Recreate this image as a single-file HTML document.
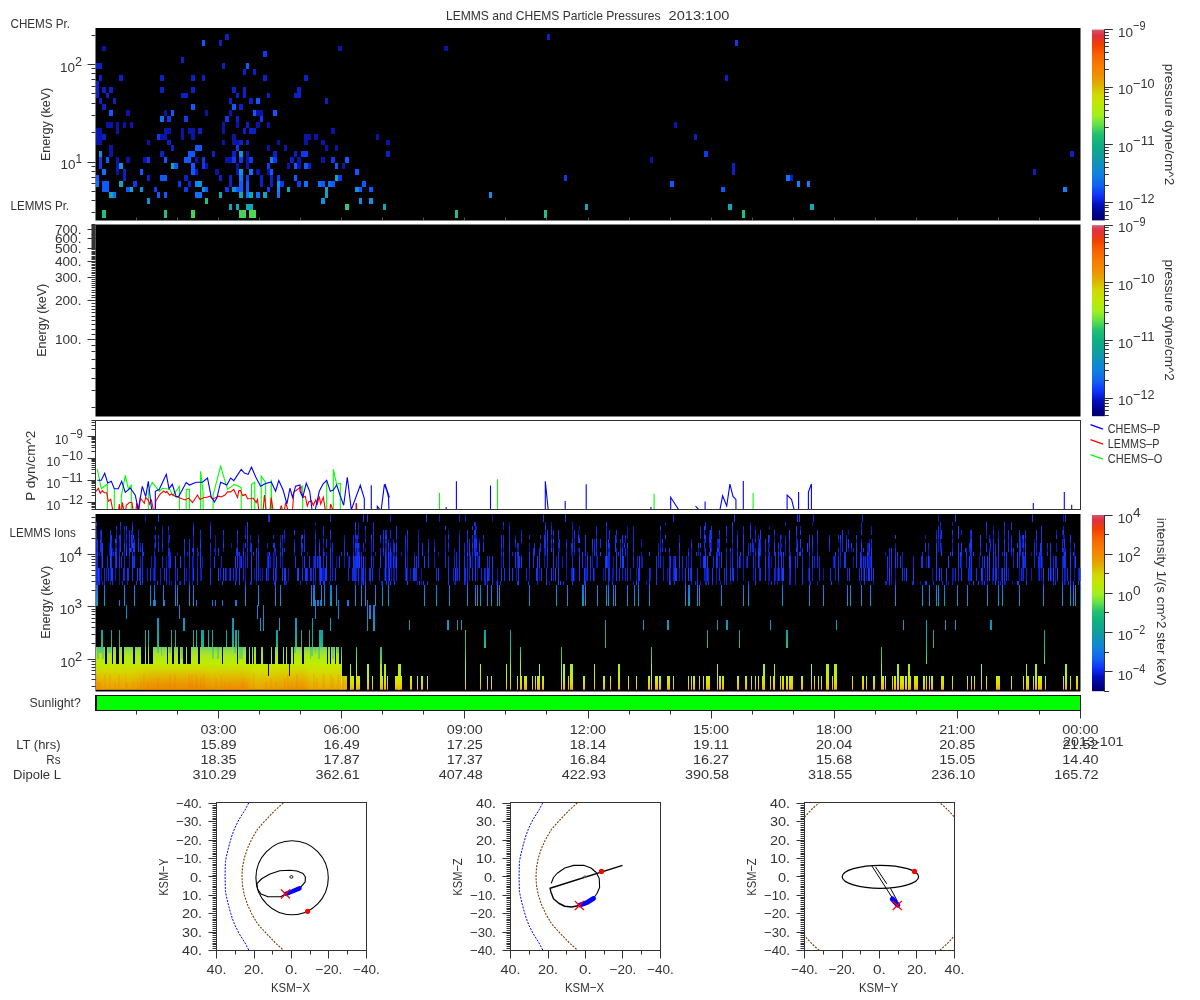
<!DOCTYPE html>
<html><head><meta charset="utf-8"><style>html,body{margin:0;padding:0;background:#fff;width:1200px;height:1000px;overflow:hidden}svg{display:block;will-change:transform}</style></head><body>
<svg width="1200" height="1000" viewBox="0 0 1200 1000" font-family="Liberation Sans, sans-serif">
<rect x="0.00" y="0.00" width="1200.00" height="1000.00" fill="#ffffff" />
<text x="446.00" y="19.50" font-size="13" text-anchor="start" textLength="214.6" lengthAdjust="spacingAndGlyphs" fill="#333" >LEMMS and CHEMS Particle Pressures</text>
<text x="668.60" y="19.50" font-size="13" text-anchor="start" textLength="60.8" lengthAdjust="spacingAndGlyphs" fill="#333" >2013:100</text>
<rect x="95.50" y="28.00" width="985.00" height="192.50" fill="#000" />
<g shape-rendering="crispEdges">
<rect x="225.47" y="33.87" width="3.42" height="5.87" fill="#0c20c8"/>
<rect x="201.52" y="39.74" width="3.42" height="5.87" fill="#1058ff"/>
<rect x="218.62" y="39.74" width="3.42" height="5.87" fill="#0c20c8"/>
<rect x="102.34" y="45.61" width="3.42" height="5.87" fill="#0a14a8"/>
<rect x="181.00" y="57.36" width="3.42" height="5.87" fill="#0c20c8"/>
<rect x="95.50" y="63.23" width="3.42" height="5.87" fill="#0c20c8"/>
<rect x="98.92" y="63.23" width="3.42" height="5.87" fill="#0c20c8"/>
<rect x="222.05" y="63.23" width="3.42" height="5.87" fill="#0c20c8"/>
<rect x="242.57" y="69.10" width="3.42" height="5.87" fill="#0c20c8"/>
<rect x="98.92" y="74.97" width="3.42" height="5.87" fill="#0c20c8"/>
<rect x="119.44" y="74.97" width="3.42" height="5.87" fill="#0c20c8"/>
<rect x="160.48" y="74.97" width="3.42" height="5.87" fill="#0c20c8"/>
<rect x="191.26" y="74.97" width="3.42" height="5.87" fill="#0c20c8"/>
<rect x="201.52" y="74.97" width="3.42" height="5.87" fill="#0c20c8"/>
<rect x="95.50" y="80.84" width="3.42" height="5.87" fill="#0c20c8"/>
<rect x="95.50" y="86.71" width="3.42" height="5.87" fill="#0c20c8"/>
<rect x="102.34" y="86.71" width="3.42" height="5.87" fill="#0c20c8"/>
<rect x="109.18" y="86.71" width="3.42" height="5.87" fill="#0c20c8"/>
<rect x="160.48" y="86.71" width="3.42" height="5.87" fill="#0c20c8"/>
<rect x="191.26" y="86.71" width="3.42" height="5.87" fill="#0c20c8"/>
<rect x="232.31" y="86.71" width="3.42" height="5.87" fill="#0c20c8"/>
<rect x="242.57" y="86.71" width="3.42" height="5.87" fill="#0c20c8"/>
<rect x="95.50" y="92.58" width="3.42" height="5.87" fill="#0c20c8"/>
<rect x="105.76" y="92.58" width="3.42" height="5.87" fill="#0c20c8"/>
<rect x="181.00" y="92.58" width="3.42" height="5.87" fill="#0c20c8"/>
<rect x="184.42" y="92.58" width="3.42" height="5.87" fill="#0c20c8"/>
<rect x="235.73" y="92.58" width="3.42" height="5.87" fill="#0c20c8"/>
<rect x="242.57" y="92.58" width="3.42" height="5.87" fill="#0c20c8"/>
<rect x="98.92" y="98.45" width="3.42" height="5.87" fill="#0c20c8"/>
<rect x="112.60" y="98.45" width="3.42" height="5.87" fill="#0c20c8"/>
<rect x="228.89" y="98.45" width="3.42" height="5.87" fill="#0c20c8"/>
<rect x="102.34" y="104.32" width="3.42" height="5.87" fill="#0c20c8"/>
<rect x="191.26" y="104.32" width="3.42" height="5.87" fill="#1058ff"/>
<rect x="232.31" y="104.32" width="3.42" height="5.87" fill="#1058ff"/>
<rect x="239.15" y="104.32" width="3.42" height="5.87" fill="#0c20c8"/>
<rect x="109.18" y="110.19" width="3.42" height="5.87" fill="#1058ff"/>
<rect x="126.28" y="110.19" width="3.42" height="5.87" fill="#0a14a8"/>
<rect x="163.90" y="110.19" width="3.42" height="5.87" fill="#0a14a8"/>
<rect x="170.74" y="110.19" width="3.42" height="5.87" fill="#1058ff"/>
<rect x="204.94" y="110.19" width="3.42" height="5.87" fill="#0a14a8"/>
<rect x="228.89" y="110.19" width="3.42" height="5.87" fill="#0a14a8"/>
<rect x="160.48" y="116.07" width="3.42" height="5.87" fill="#1070ff"/>
<rect x="167.32" y="116.07" width="3.42" height="5.87" fill="#1038f0"/>
<rect x="184.42" y="116.07" width="3.42" height="5.87" fill="#1038f0"/>
<rect x="225.47" y="116.07" width="3.42" height="5.87" fill="#1038f0"/>
<rect x="235.73" y="116.07" width="3.42" height="5.87" fill="#0c20c8"/>
<rect x="105.76" y="121.94" width="3.42" height="5.87" fill="#0a14a8"/>
<rect x="109.18" y="121.94" width="3.42" height="5.87" fill="#0a14a8"/>
<rect x="116.02" y="121.94" width="3.42" height="5.87" fill="#0a14a8"/>
<rect x="122.86" y="121.94" width="3.42" height="5.87" fill="#0a14a8"/>
<rect x="129.70" y="121.94" width="3.42" height="5.87" fill="#0a14a8"/>
<rect x="222.05" y="121.94" width="3.42" height="5.87" fill="#0a14a8"/>
<rect x="235.73" y="121.94" width="3.42" height="5.87" fill="#0a14a8"/>
<rect x="95.50" y="127.81" width="3.42" height="5.87" fill="#0a14a8"/>
<rect x="98.92" y="127.81" width="3.42" height="5.87" fill="#0a14a8"/>
<rect x="116.02" y="127.81" width="3.42" height="5.87" fill="#0a14a8"/>
<rect x="163.90" y="127.81" width="3.42" height="5.87" fill="#0a14a8"/>
<rect x="167.32" y="127.81" width="3.42" height="5.87" fill="#0a14a8"/>
<rect x="181.00" y="127.81" width="3.42" height="5.87" fill="#0a14a8"/>
<rect x="187.84" y="127.81" width="3.42" height="5.87" fill="#0a14a8"/>
<rect x="191.26" y="127.81" width="3.42" height="5.87" fill="#0a14a8"/>
<rect x="198.10" y="127.81" width="3.42" height="5.87" fill="#0c20c8"/>
<rect x="222.05" y="127.81" width="3.42" height="5.87" fill="#0a14a8"/>
<rect x="242.57" y="127.81" width="3.42" height="5.87" fill="#0c20c8"/>
<rect x="95.50" y="133.68" width="3.42" height="5.87" fill="#0a14a8"/>
<rect x="98.92" y="133.68" width="3.42" height="5.87" fill="#0a14a8"/>
<rect x="102.34" y="133.68" width="3.42" height="5.87" fill="#0c20c8"/>
<rect x="157.06" y="133.68" width="3.42" height="5.87" fill="#1038f0"/>
<rect x="160.48" y="133.68" width="3.42" height="5.87" fill="#0a14a8"/>
<rect x="163.90" y="133.68" width="3.42" height="5.87" fill="#0a14a8"/>
<rect x="181.00" y="133.68" width="3.42" height="5.87" fill="#0a14a8"/>
<rect x="191.26" y="133.68" width="3.42" height="5.87" fill="#0a14a8"/>
<rect x="232.31" y="133.68" width="3.42" height="5.87" fill="#0a14a8"/>
<rect x="95.50" y="139.55" width="3.42" height="5.87" fill="#0a14a8"/>
<rect x="98.92" y="139.55" width="3.42" height="5.87" fill="#0a14a8"/>
<rect x="146.80" y="139.55" width="3.42" height="5.87" fill="#0a14a8"/>
<rect x="167.32" y="139.55" width="3.42" height="5.87" fill="#0c20c8"/>
<rect x="222.05" y="139.55" width="3.42" height="5.87" fill="#0a14a8"/>
<rect x="232.31" y="139.55" width="3.42" height="5.87" fill="#0a14a8"/>
<rect x="235.73" y="139.55" width="3.42" height="5.87" fill="#0a14a8"/>
<rect x="239.15" y="139.55" width="3.42" height="5.87" fill="#0c20c8"/>
<rect x="109.18" y="145.42" width="3.42" height="5.87" fill="#0a14a8"/>
<rect x="170.74" y="145.42" width="3.42" height="5.87" fill="#0c20c8"/>
<rect x="194.68" y="145.42" width="3.42" height="5.87" fill="#1058ff"/>
<rect x="198.10" y="145.42" width="3.42" height="5.87" fill="#1058ff"/>
<rect x="235.73" y="145.42" width="3.42" height="5.87" fill="#1038f0"/>
<rect x="98.92" y="151.29" width="3.42" height="5.87" fill="#1090e0"/>
<rect x="109.18" y="151.29" width="3.42" height="5.87" fill="#0a14a8"/>
<rect x="160.48" y="151.29" width="3.42" height="5.87" fill="#0c20c8"/>
<rect x="187.84" y="151.29" width="3.42" height="5.87" fill="#1058ff"/>
<rect x="191.26" y="151.29" width="3.42" height="5.87" fill="#1058ff"/>
<rect x="211.78" y="151.29" width="3.42" height="5.87" fill="#0c20c8"/>
<rect x="232.31" y="151.29" width="3.42" height="5.87" fill="#0c20c8"/>
<rect x="239.15" y="151.29" width="3.42" height="5.87" fill="#1090e0"/>
<rect x="98.92" y="157.16" width="3.42" height="5.87" fill="#1038f0"/>
<rect x="105.76" y="157.16" width="3.42" height="5.87" fill="#1058ff"/>
<rect x="116.02" y="157.16" width="3.42" height="5.87" fill="#0a14a8"/>
<rect x="126.28" y="157.16" width="3.42" height="5.87" fill="#0a14a8"/>
<rect x="143.38" y="157.16" width="3.42" height="5.87" fill="#0a14a8"/>
<rect x="146.80" y="157.16" width="3.42" height="5.87" fill="#1038f0"/>
<rect x="163.90" y="157.16" width="3.42" height="5.87" fill="#1058ff"/>
<rect x="184.42" y="157.16" width="3.42" height="5.87" fill="#1058ff"/>
<rect x="187.84" y="157.16" width="3.42" height="5.87" fill="#1058ff"/>
<rect x="194.68" y="157.16" width="3.42" height="5.87" fill="#0a14a8"/>
<rect x="201.52" y="157.16" width="3.42" height="5.87" fill="#1038f0"/>
<rect x="225.47" y="157.16" width="3.42" height="5.87" fill="#0a14a8"/>
<rect x="228.89" y="157.16" width="3.42" height="5.87" fill="#0a14a8"/>
<rect x="232.31" y="157.16" width="3.42" height="5.87" fill="#1038f0"/>
<rect x="239.15" y="157.16" width="3.42" height="5.87" fill="#1038f0"/>
<rect x="98.92" y="163.03" width="3.42" height="5.87" fill="#1038f0"/>
<rect x="116.02" y="163.03" width="3.42" height="5.87" fill="#0a14a8"/>
<rect x="119.44" y="163.03" width="3.42" height="5.87" fill="#1090e0"/>
<rect x="170.74" y="163.03" width="3.42" height="5.87" fill="#10a8b8"/>
<rect x="174.16" y="163.03" width="3.42" height="5.87" fill="#1058ff"/>
<rect x="191.26" y="163.03" width="3.42" height="5.87" fill="#1058ff"/>
<rect x="201.52" y="163.03" width="3.42" height="5.87" fill="#1038f0"/>
<rect x="204.94" y="163.03" width="3.42" height="5.87" fill="#0a14a8"/>
<rect x="235.73" y="163.03" width="3.42" height="5.87" fill="#0a14a8"/>
<rect x="102.34" y="168.90" width="3.42" height="5.87" fill="#1070ff"/>
<rect x="116.02" y="168.90" width="3.42" height="5.87" fill="#0a14a8"/>
<rect x="122.86" y="168.90" width="3.42" height="5.87" fill="#0c20c8"/>
<rect x="139.96" y="168.90" width="3.42" height="5.87" fill="#1058ff"/>
<rect x="191.26" y="168.90" width="3.42" height="5.87" fill="#1058ff"/>
<rect x="194.68" y="168.90" width="3.42" height="5.87" fill="#0c20c8"/>
<rect x="215.20" y="168.90" width="3.42" height="5.87" fill="#0a14a8"/>
<rect x="235.73" y="168.90" width="3.42" height="5.87" fill="#0a14a8"/>
<rect x="239.15" y="168.90" width="3.42" height="5.87" fill="#1090e0"/>
<rect x="95.50" y="174.78" width="3.42" height="5.87" fill="#1058ff"/>
<rect x="122.86" y="174.78" width="3.42" height="5.87" fill="#0c20c8"/>
<rect x="146.80" y="174.78" width="3.42" height="5.87" fill="#0c20c8"/>
<rect x="160.48" y="174.78" width="3.42" height="5.87" fill="#1058ff"/>
<rect x="163.90" y="174.78" width="3.42" height="5.87" fill="#1058ff"/>
<rect x="184.42" y="174.78" width="3.42" height="5.87" fill="#0c20c8"/>
<rect x="218.62" y="174.78" width="3.42" height="5.87" fill="#0c20c8"/>
<rect x="228.89" y="174.78" width="3.42" height="5.87" fill="#0c20c8"/>
<rect x="239.15" y="174.78" width="3.42" height="5.87" fill="#1070ff"/>
<rect x="95.50" y="180.65" width="3.42" height="5.87" fill="#1070ff"/>
<rect x="102.34" y="180.65" width="3.42" height="5.87" fill="#1058ff"/>
<rect x="105.76" y="180.65" width="3.42" height="5.87" fill="#1058ff"/>
<rect x="119.44" y="180.65" width="3.42" height="5.87" fill="#10a8b8"/>
<rect x="133.12" y="180.65" width="3.42" height="5.87" fill="#1038f0"/>
<rect x="177.58" y="180.65" width="3.42" height="5.87" fill="#1038f0"/>
<rect x="187.84" y="180.65" width="3.42" height="5.87" fill="#0c20c8"/>
<rect x="194.68" y="180.65" width="3.42" height="5.87" fill="#1080ff"/>
<rect x="198.10" y="180.65" width="3.42" height="5.87" fill="#1090e0"/>
<rect x="228.89" y="180.65" width="3.42" height="5.87" fill="#0c20c8"/>
<rect x="239.15" y="180.65" width="3.42" height="5.87" fill="#1058ff"/>
<rect x="102.34" y="186.52" width="3.42" height="5.87" fill="#1058ff"/>
<rect x="105.76" y="186.52" width="3.42" height="5.87" fill="#1058ff"/>
<rect x="126.28" y="186.52" width="3.42" height="5.87" fill="#1058ff"/>
<rect x="129.70" y="186.52" width="3.42" height="5.87" fill="#10a8b8"/>
<rect x="139.96" y="186.52" width="3.42" height="5.87" fill="#1090e0"/>
<rect x="153.64" y="186.52" width="3.42" height="5.87" fill="#1038f0"/>
<rect x="184.42" y="186.52" width="3.42" height="5.87" fill="#1038f0"/>
<rect x="201.52" y="186.52" width="3.42" height="5.87" fill="#1090e0"/>
<rect x="204.94" y="186.52" width="3.42" height="5.87" fill="#1058ff"/>
<rect x="225.47" y="186.52" width="3.42" height="5.87" fill="#1038f0"/>
<rect x="232.31" y="186.52" width="3.42" height="5.87" fill="#1090e0"/>
<rect x="235.73" y="186.52" width="3.42" height="5.87" fill="#1058ff"/>
<rect x="239.15" y="186.52" width="3.42" height="5.87" fill="#1058ff"/>
<rect x="109.18" y="192.39" width="3.42" height="5.87" fill="#10a8b8"/>
<rect x="112.60" y="192.39" width="3.42" height="5.87" fill="#1070ff"/>
<rect x="157.06" y="192.39" width="3.42" height="5.87" fill="#1058ff"/>
<rect x="163.90" y="192.39" width="3.42" height="5.87" fill="#1058ff"/>
<rect x="194.68" y="192.39" width="3.42" height="5.87" fill="#1070ff"/>
<rect x="198.10" y="192.39" width="3.42" height="5.87" fill="#1070ff"/>
<rect x="218.62" y="192.39" width="3.42" height="5.87" fill="#10a8b8"/>
<rect x="239.15" y="192.39" width="3.42" height="5.87" fill="#10a8b8"/>
<rect x="146.80" y="198.26" width="3.42" height="5.87" fill="#1090e0"/>
<rect x="204.94" y="198.26" width="3.42" height="5.87" fill="#20c088"/>
<rect x="228.89" y="204.13" width="3.42" height="5.87" fill="#10a8b8"/>
<rect x="235.73" y="204.13" width="3.42" height="5.87" fill="#10a8b8"/>
<rect x="102.34" y="210.00" width="3.42" height="8.00" fill="#20c088"/>
<rect x="163.90" y="210.00" width="3.42" height="8.00" fill="#20c088"/>
<rect x="191.26" y="210.00" width="3.42" height="8.00" fill="#48d058"/>
<rect x="239.15" y="210.00" width="3.42" height="8.00" fill="#48d058"/>
<rect x="242.57" y="210.00" width="3.42" height="8.00" fill="#48d058"/>
<rect x="338.33" y="45.61" width="3.42" height="5.87" fill="#0a14a8"/>
<rect x="263.09" y="51.48" width="3.42" height="5.87" fill="#1038f0"/>
<rect x="245.99" y="63.23" width="3.42" height="5.87" fill="#1058ff"/>
<rect x="252.83" y="69.10" width="3.42" height="5.87" fill="#0c20c8"/>
<rect x="263.09" y="74.97" width="3.42" height="5.87" fill="#0c20c8"/>
<rect x="304.13" y="74.97" width="3.42" height="5.87" fill="#0c20c8"/>
<rect x="297.29" y="86.71" width="3.42" height="5.87" fill="#0c20c8"/>
<rect x="293.87" y="92.58" width="3.42" height="5.87" fill="#0c20c8"/>
<rect x="297.29" y="92.58" width="3.42" height="5.87" fill="#0c20c8"/>
<rect x="266.51" y="92.58" width="3.42" height="5.87" fill="#0c20c8"/>
<rect x="249.41" y="98.45" width="3.42" height="5.87" fill="#0c20c8"/>
<rect x="256.25" y="98.45" width="3.42" height="5.87" fill="#1058ff"/>
<rect x="324.65" y="98.45" width="3.42" height="5.87" fill="#0c20c8"/>
<rect x="252.83" y="110.19" width="3.42" height="5.87" fill="#1058ff"/>
<rect x="256.25" y="110.19" width="3.42" height="5.87" fill="#0a14a8"/>
<rect x="259.67" y="110.19" width="3.42" height="5.87" fill="#0a14a8"/>
<rect x="273.35" y="110.19" width="3.42" height="5.87" fill="#1058ff"/>
<rect x="259.67" y="116.07" width="3.42" height="5.87" fill="#1038f0"/>
<rect x="245.99" y="121.94" width="3.42" height="5.87" fill="#0c20c8"/>
<rect x="256.25" y="121.94" width="3.42" height="5.87" fill="#0a14a8"/>
<rect x="266.51" y="121.94" width="3.42" height="5.87" fill="#0a14a8"/>
<rect x="249.41" y="127.81" width="3.42" height="5.87" fill="#0c20c8"/>
<rect x="252.83" y="127.81" width="3.42" height="5.87" fill="#0c20c8"/>
<rect x="331.49" y="127.81" width="3.42" height="5.87" fill="#0a14a8"/>
<rect x="304.13" y="133.68" width="3.42" height="5.87" fill="#0a14a8"/>
<rect x="307.55" y="133.68" width="3.42" height="5.87" fill="#0a14a8"/>
<rect x="314.39" y="133.68" width="3.42" height="5.87" fill="#0a14a8"/>
<rect x="375.95" y="133.68" width="3.42" height="5.87" fill="#0a14a8"/>
<rect x="245.99" y="139.55" width="3.42" height="5.87" fill="#0c20c8"/>
<rect x="276.77" y="139.55" width="3.42" height="5.87" fill="#0a14a8"/>
<rect x="304.13" y="139.55" width="3.42" height="5.87" fill="#0a14a8"/>
<rect x="321.23" y="139.55" width="3.42" height="5.87" fill="#0a14a8"/>
<rect x="386.21" y="139.55" width="3.42" height="5.87" fill="#0a14a8"/>
<rect x="266.51" y="145.42" width="3.42" height="5.87" fill="#0a14a8"/>
<rect x="283.61" y="145.42" width="3.42" height="5.87" fill="#0a14a8"/>
<rect x="324.65" y="145.42" width="3.42" height="5.87" fill="#0a14a8"/>
<rect x="334.91" y="145.42" width="3.42" height="5.87" fill="#0a14a8"/>
<rect x="245.99" y="151.29" width="3.42" height="5.87" fill="#0a14a8"/>
<rect x="273.35" y="151.29" width="3.42" height="5.87" fill="#0c20c8"/>
<rect x="293.87" y="151.29" width="3.42" height="5.87" fill="#0c20c8"/>
<rect x="300.71" y="151.29" width="3.42" height="5.87" fill="#1038f0"/>
<rect x="304.13" y="151.29" width="3.42" height="5.87" fill="#1038f0"/>
<rect x="386.21" y="151.29" width="3.42" height="5.87" fill="#0c20c8"/>
<rect x="245.99" y="157.16" width="3.42" height="5.87" fill="#0a14a8"/>
<rect x="249.41" y="157.16" width="3.42" height="5.87" fill="#1038f0"/>
<rect x="269.93" y="157.16" width="3.42" height="5.87" fill="#1080f0"/>
<rect x="273.35" y="157.16" width="3.42" height="5.87" fill="#1038f0"/>
<rect x="290.45" y="157.16" width="3.42" height="5.87" fill="#0c20c8"/>
<rect x="297.29" y="157.16" width="3.42" height="5.87" fill="#0a14a8"/>
<rect x="321.23" y="157.16" width="3.42" height="5.87" fill="#0a14a8"/>
<rect x="331.49" y="157.16" width="3.42" height="5.87" fill="#1038f0"/>
<rect x="345.17" y="157.16" width="3.42" height="5.87" fill="#1058ff"/>
<rect x="245.99" y="163.03" width="3.42" height="5.87" fill="#0a14a8"/>
<rect x="266.51" y="163.03" width="3.42" height="5.87" fill="#1038f0"/>
<rect x="287.03" y="163.03" width="3.42" height="5.87" fill="#0a14a8"/>
<rect x="293.87" y="163.03" width="3.42" height="5.87" fill="#1058ff"/>
<rect x="297.29" y="163.03" width="3.42" height="5.87" fill="#0a14a8"/>
<rect x="304.13" y="163.03" width="3.42" height="5.87" fill="#1058ff"/>
<rect x="307.55" y="163.03" width="3.42" height="5.87" fill="#0c20c8"/>
<rect x="334.91" y="163.03" width="3.42" height="5.87" fill="#1058ff"/>
<rect x="341.75" y="163.03" width="3.42" height="5.87" fill="#0a14a8"/>
<rect x="249.41" y="168.90" width="3.42" height="5.87" fill="#1070ff"/>
<rect x="256.25" y="168.90" width="3.42" height="5.87" fill="#0a14a8"/>
<rect x="266.51" y="168.90" width="3.42" height="5.87" fill="#0a14a8"/>
<rect x="269.93" y="168.90" width="3.42" height="5.87" fill="#1058ff"/>
<rect x="355.43" y="168.90" width="3.42" height="5.87" fill="#1058ff"/>
<rect x="245.99" y="174.78" width="3.42" height="5.87" fill="#1038f0"/>
<rect x="259.67" y="174.78" width="3.42" height="5.87" fill="#0c20c8"/>
<rect x="269.93" y="174.78" width="3.42" height="5.87" fill="#0c20c8"/>
<rect x="276.77" y="174.78" width="3.42" height="5.87" fill="#1038f0"/>
<rect x="293.87" y="174.78" width="3.42" height="5.87" fill="#1058ff"/>
<rect x="334.91" y="174.78" width="3.42" height="5.87" fill="#10a8b8"/>
<rect x="338.33" y="174.78" width="3.42" height="5.87" fill="#1038f0"/>
<rect x="245.99" y="180.65" width="3.42" height="5.87" fill="#1058ff"/>
<rect x="259.67" y="180.65" width="3.42" height="5.87" fill="#0c20c8"/>
<rect x="269.93" y="180.65" width="3.42" height="5.87" fill="#0c20c8"/>
<rect x="276.77" y="180.65" width="3.42" height="5.87" fill="#1090e0"/>
<rect x="280.19" y="180.65" width="3.42" height="5.87" fill="#1038f0"/>
<rect x="297.29" y="180.65" width="3.42" height="5.87" fill="#1038f0"/>
<rect x="304.13" y="180.65" width="3.42" height="5.87" fill="#1070ff"/>
<rect x="317.81" y="180.65" width="3.42" height="5.87" fill="#1070ff"/>
<rect x="321.23" y="180.65" width="3.42" height="5.87" fill="#1058ff"/>
<rect x="328.07" y="180.65" width="3.42" height="5.87" fill="#1070ff"/>
<rect x="331.49" y="180.65" width="3.42" height="5.87" fill="#1058ff"/>
<rect x="362.27" y="180.65" width="3.42" height="5.87" fill="#1058ff"/>
<rect x="245.99" y="186.52" width="3.42" height="5.87" fill="#1058ff"/>
<rect x="266.51" y="186.52" width="3.42" height="5.87" fill="#1038f0"/>
<rect x="276.77" y="186.52" width="3.42" height="5.87" fill="#1080ff"/>
<rect x="287.03" y="186.52" width="3.42" height="5.87" fill="#10a8b8"/>
<rect x="324.65" y="186.52" width="3.42" height="5.87" fill="#10a8b8"/>
<rect x="355.43" y="186.52" width="3.42" height="5.87" fill="#1090e0"/>
<rect x="358.85" y="186.52" width="3.42" height="5.87" fill="#1058ff"/>
<rect x="369.11" y="186.52" width="3.42" height="5.87" fill="#1058ff"/>
<rect x="245.99" y="192.39" width="3.42" height="5.87" fill="#1070ff"/>
<rect x="249.41" y="192.39" width="3.42" height="5.87" fill="#10a8b8"/>
<rect x="256.25" y="192.39" width="3.42" height="5.87" fill="#1070ff"/>
<rect x="263.09" y="192.39" width="3.42" height="5.87" fill="#10a8b8"/>
<rect x="276.77" y="192.39" width="3.42" height="5.87" fill="#1070ff"/>
<rect x="324.65" y="192.39" width="3.42" height="5.87" fill="#10a8b8"/>
<rect x="321.23" y="198.26" width="3.42" height="5.87" fill="#1090e0"/>
<rect x="358.85" y="198.26" width="3.42" height="5.87" fill="#1090e0"/>
<rect x="369.11" y="198.26" width="3.42" height="5.87" fill="#1090e0"/>
<rect x="245.99" y="204.13" width="3.42" height="5.87" fill="#10a8b8"/>
<rect x="249.41" y="204.13" width="3.42" height="5.87" fill="#10a8b8"/>
<rect x="345.17" y="204.13" width="3.42" height="5.87" fill="#30c880"/>
<rect x="382.79" y="204.13" width="3.42" height="5.87" fill="#10a8b8"/>
<rect x="242.57" y="210.00" width="3.42" height="8.00" fill="#48d058"/>
<rect x="249.41" y="210.00" width="3.42" height="8.00" fill="#50d850"/>
<rect x="252.83" y="210.00" width="3.42" height="8.00" fill="#50d850"/>
<rect x="444.35" y="45.61" width="3.42" height="5.87" fill="#0a14a8"/>
<rect x="546.96" y="33.87" width="3.42" height="5.87" fill="#0c20c8"/>
<rect x="564.06" y="174.78" width="3.42" height="5.87" fill="#1038f0"/>
<rect x="488.82" y="192.39" width="3.42" height="5.87" fill="#1090e0"/>
<rect x="454.61" y="210.00" width="3.42" height="8.00" fill="#20c088"/>
<rect x="543.54" y="210.00" width="3.42" height="8.00" fill="#20c088"/>
<rect x="584.58" y="204.13" width="3.42" height="5.87" fill="#10a8b8"/>
<rect x="735.07" y="39.74" width="3.42" height="5.87" fill="#1038f0"/>
<rect x="724.81" y="74.97" width="3.42" height="5.87" fill="#0c20c8"/>
<rect x="673.50" y="121.94" width="3.42" height="5.87" fill="#0a14a8"/>
<rect x="694.02" y="133.68" width="3.42" height="5.87" fill="#0c20c8"/>
<rect x="704.28" y="151.29" width="3.42" height="5.87" fill="#1038f0"/>
<rect x="649.56" y="157.16" width="3.42" height="5.87" fill="#0a14a8"/>
<rect x="731.65" y="163.03" width="3.42" height="5.87" fill="#0c20c8"/>
<rect x="731.65" y="168.90" width="3.42" height="5.87" fill="#0c20c8"/>
<rect x="670.08" y="180.65" width="3.42" height="5.87" fill="#1058ff"/>
<rect x="796.63" y="180.65" width="3.42" height="5.87" fill="#1080ff"/>
<rect x="806.89" y="180.65" width="3.42" height="5.87" fill="#1080ff"/>
<rect x="721.39" y="186.52" width="3.42" height="5.87" fill="#1058ff"/>
<rect x="786.37" y="174.78" width="3.42" height="5.87" fill="#1070ff"/>
<rect x="789.79" y="174.78" width="3.42" height="5.87" fill="#0c20c8"/>
<rect x="728.23" y="204.13" width="3.42" height="5.87" fill="#10a8b8"/>
<rect x="810.31" y="204.13" width="3.42" height="5.87" fill="#10a8b8"/>
<rect x="741.91" y="210.00" width="3.42" height="8.00" fill="#20c088"/>
<rect x="1070.24" y="151.29" width="3.42" height="5.87" fill="#0c20c8"/>
<rect x="1032.62" y="168.90" width="3.42" height="5.87" fill="#0c20c8"/>
<rect x="1063.40" y="186.52" width="3.42" height="5.87" fill="#1080ff"/>
</g>
<line x1="136.50" y1="217.50" x2="136.50" y2="220.00" stroke="#555" stroke-width="1" />
<line x1="136.50" y1="413.50" x2="136.50" y2="416.00" stroke="#555" stroke-width="1" />
<line x1="136.50" y1="687.50" x2="136.50" y2="690.00" stroke="#555" stroke-width="1" />
<line x1="136.50" y1="509.00" x2="136.50" y2="506.00" stroke="#333" stroke-width="1" />
<line x1="177.50" y1="217.50" x2="177.50" y2="220.00" stroke="#555" stroke-width="1" />
<line x1="177.50" y1="413.50" x2="177.50" y2="416.00" stroke="#555" stroke-width="1" />
<line x1="177.50" y1="687.50" x2="177.50" y2="690.00" stroke="#555" stroke-width="1" />
<line x1="177.50" y1="509.00" x2="177.50" y2="506.00" stroke="#333" stroke-width="1" />
<line x1="218.50" y1="217.50" x2="218.50" y2="220.00" stroke="#555" stroke-width="1" />
<line x1="218.50" y1="413.50" x2="218.50" y2="416.00" stroke="#555" stroke-width="1" />
<line x1="218.50" y1="687.50" x2="218.50" y2="690.00" stroke="#555" stroke-width="1" />
<line x1="218.50" y1="509.00" x2="218.50" y2="506.00" stroke="#333" stroke-width="1" />
<line x1="259.50" y1="217.50" x2="259.50" y2="220.00" stroke="#555" stroke-width="1" />
<line x1="259.50" y1="413.50" x2="259.50" y2="416.00" stroke="#555" stroke-width="1" />
<line x1="259.50" y1="687.50" x2="259.50" y2="690.00" stroke="#555" stroke-width="1" />
<line x1="259.50" y1="509.00" x2="259.50" y2="506.00" stroke="#333" stroke-width="1" />
<line x1="300.50" y1="217.50" x2="300.50" y2="220.00" stroke="#555" stroke-width="1" />
<line x1="300.50" y1="413.50" x2="300.50" y2="416.00" stroke="#555" stroke-width="1" />
<line x1="300.50" y1="687.50" x2="300.50" y2="690.00" stroke="#555" stroke-width="1" />
<line x1="300.50" y1="509.00" x2="300.50" y2="506.00" stroke="#333" stroke-width="1" />
<line x1="341.50" y1="217.50" x2="341.50" y2="220.00" stroke="#555" stroke-width="1" />
<line x1="341.50" y1="413.50" x2="341.50" y2="416.00" stroke="#555" stroke-width="1" />
<line x1="341.50" y1="687.50" x2="341.50" y2="690.00" stroke="#555" stroke-width="1" />
<line x1="341.50" y1="509.00" x2="341.50" y2="506.00" stroke="#333" stroke-width="1" />
<line x1="382.50" y1="217.50" x2="382.50" y2="220.00" stroke="#555" stroke-width="1" />
<line x1="382.50" y1="413.50" x2="382.50" y2="416.00" stroke="#555" stroke-width="1" />
<line x1="382.50" y1="687.50" x2="382.50" y2="690.00" stroke="#555" stroke-width="1" />
<line x1="382.50" y1="509.00" x2="382.50" y2="506.00" stroke="#333" stroke-width="1" />
<line x1="423.50" y1="217.50" x2="423.50" y2="220.00" stroke="#555" stroke-width="1" />
<line x1="423.50" y1="413.50" x2="423.50" y2="416.00" stroke="#555" stroke-width="1" />
<line x1="423.50" y1="687.50" x2="423.50" y2="690.00" stroke="#555" stroke-width="1" />
<line x1="423.50" y1="509.00" x2="423.50" y2="506.00" stroke="#333" stroke-width="1" />
<line x1="464.50" y1="217.50" x2="464.50" y2="220.00" stroke="#555" stroke-width="1" />
<line x1="464.50" y1="413.50" x2="464.50" y2="416.00" stroke="#555" stroke-width="1" />
<line x1="464.50" y1="687.50" x2="464.50" y2="690.00" stroke="#555" stroke-width="1" />
<line x1="464.50" y1="509.00" x2="464.50" y2="506.00" stroke="#333" stroke-width="1" />
<line x1="505.50" y1="217.50" x2="505.50" y2="220.00" stroke="#555" stroke-width="1" />
<line x1="505.50" y1="413.50" x2="505.50" y2="416.00" stroke="#555" stroke-width="1" />
<line x1="505.50" y1="687.50" x2="505.50" y2="690.00" stroke="#555" stroke-width="1" />
<line x1="505.50" y1="509.00" x2="505.50" y2="506.00" stroke="#333" stroke-width="1" />
<line x1="546.50" y1="217.50" x2="546.50" y2="220.00" stroke="#555" stroke-width="1" />
<line x1="546.50" y1="413.50" x2="546.50" y2="416.00" stroke="#555" stroke-width="1" />
<line x1="546.50" y1="687.50" x2="546.50" y2="690.00" stroke="#555" stroke-width="1" />
<line x1="546.50" y1="509.00" x2="546.50" y2="506.00" stroke="#333" stroke-width="1" />
<line x1="588.50" y1="217.50" x2="588.50" y2="220.00" stroke="#555" stroke-width="1" />
<line x1="588.50" y1="413.50" x2="588.50" y2="416.00" stroke="#555" stroke-width="1" />
<line x1="588.50" y1="687.50" x2="588.50" y2="690.00" stroke="#555" stroke-width="1" />
<line x1="588.50" y1="509.00" x2="588.50" y2="506.00" stroke="#333" stroke-width="1" />
<line x1="629.50" y1="217.50" x2="629.50" y2="220.00" stroke="#555" stroke-width="1" />
<line x1="629.50" y1="413.50" x2="629.50" y2="416.00" stroke="#555" stroke-width="1" />
<line x1="629.50" y1="687.50" x2="629.50" y2="690.00" stroke="#555" stroke-width="1" />
<line x1="629.50" y1="509.00" x2="629.50" y2="506.00" stroke="#333" stroke-width="1" />
<line x1="670.50" y1="217.50" x2="670.50" y2="220.00" stroke="#555" stroke-width="1" />
<line x1="670.50" y1="413.50" x2="670.50" y2="416.00" stroke="#555" stroke-width="1" />
<line x1="670.50" y1="687.50" x2="670.50" y2="690.00" stroke="#555" stroke-width="1" />
<line x1="670.50" y1="509.00" x2="670.50" y2="506.00" stroke="#333" stroke-width="1" />
<line x1="711.50" y1="217.50" x2="711.50" y2="220.00" stroke="#555" stroke-width="1" />
<line x1="711.50" y1="413.50" x2="711.50" y2="416.00" stroke="#555" stroke-width="1" />
<line x1="711.50" y1="687.50" x2="711.50" y2="690.00" stroke="#555" stroke-width="1" />
<line x1="711.50" y1="509.00" x2="711.50" y2="506.00" stroke="#333" stroke-width="1" />
<line x1="752.50" y1="217.50" x2="752.50" y2="220.00" stroke="#555" stroke-width="1" />
<line x1="752.50" y1="413.50" x2="752.50" y2="416.00" stroke="#555" stroke-width="1" />
<line x1="752.50" y1="687.50" x2="752.50" y2="690.00" stroke="#555" stroke-width="1" />
<line x1="752.50" y1="509.00" x2="752.50" y2="506.00" stroke="#333" stroke-width="1" />
<line x1="793.50" y1="217.50" x2="793.50" y2="220.00" stroke="#555" stroke-width="1" />
<line x1="793.50" y1="413.50" x2="793.50" y2="416.00" stroke="#555" stroke-width="1" />
<line x1="793.50" y1="687.50" x2="793.50" y2="690.00" stroke="#555" stroke-width="1" />
<line x1="793.50" y1="509.00" x2="793.50" y2="506.00" stroke="#333" stroke-width="1" />
<line x1="834.50" y1="217.50" x2="834.50" y2="220.00" stroke="#555" stroke-width="1" />
<line x1="834.50" y1="413.50" x2="834.50" y2="416.00" stroke="#555" stroke-width="1" />
<line x1="834.50" y1="687.50" x2="834.50" y2="690.00" stroke="#555" stroke-width="1" />
<line x1="834.50" y1="509.00" x2="834.50" y2="506.00" stroke="#333" stroke-width="1" />
<line x1="875.50" y1="217.50" x2="875.50" y2="220.00" stroke="#555" stroke-width="1" />
<line x1="875.50" y1="413.50" x2="875.50" y2="416.00" stroke="#555" stroke-width="1" />
<line x1="875.50" y1="687.50" x2="875.50" y2="690.00" stroke="#555" stroke-width="1" />
<line x1="875.50" y1="509.00" x2="875.50" y2="506.00" stroke="#333" stroke-width="1" />
<line x1="916.50" y1="217.50" x2="916.50" y2="220.00" stroke="#555" stroke-width="1" />
<line x1="916.50" y1="413.50" x2="916.50" y2="416.00" stroke="#555" stroke-width="1" />
<line x1="916.50" y1="687.50" x2="916.50" y2="690.00" stroke="#555" stroke-width="1" />
<line x1="916.50" y1="509.00" x2="916.50" y2="506.00" stroke="#333" stroke-width="1" />
<line x1="957.50" y1="217.50" x2="957.50" y2="220.00" stroke="#555" stroke-width="1" />
<line x1="957.50" y1="413.50" x2="957.50" y2="416.00" stroke="#555" stroke-width="1" />
<line x1="957.50" y1="687.50" x2="957.50" y2="690.00" stroke="#555" stroke-width="1" />
<line x1="957.50" y1="509.00" x2="957.50" y2="506.00" stroke="#333" stroke-width="1" />
<line x1="998.50" y1="217.50" x2="998.50" y2="220.00" stroke="#555" stroke-width="1" />
<line x1="998.50" y1="413.50" x2="998.50" y2="416.00" stroke="#555" stroke-width="1" />
<line x1="998.50" y1="687.50" x2="998.50" y2="690.00" stroke="#555" stroke-width="1" />
<line x1="998.50" y1="509.00" x2="998.50" y2="506.00" stroke="#333" stroke-width="1" />
<line x1="1039.50" y1="217.50" x2="1039.50" y2="220.00" stroke="#555" stroke-width="1" />
<line x1="1039.50" y1="413.50" x2="1039.50" y2="416.00" stroke="#555" stroke-width="1" />
<line x1="1039.50" y1="687.50" x2="1039.50" y2="690.00" stroke="#555" stroke-width="1" />
<line x1="1039.50" y1="509.00" x2="1039.50" y2="506.00" stroke="#333" stroke-width="1" />
<rect x="234.00" y="386.00" width="1.00" height="4.00" fill="#0a10a0" />
<rect x="298.00" y="379.50" width="1.00" height="2.00" fill="#0a10a0" />
<line x1="91.50" y1="212.50" x2="95.50" y2="212.50" stroke="#333" stroke-width="1" />
<line x1="91.50" y1="200.50" x2="95.50" y2="200.50" stroke="#333" stroke-width="1" />
<line x1="91.50" y1="191.50" x2="95.50" y2="191.50" stroke="#333" stroke-width="1" />
<line x1="91.50" y1="183.50" x2="95.50" y2="183.50" stroke="#333" stroke-width="1" />
<line x1="91.50" y1="177.50" x2="95.50" y2="177.50" stroke="#333" stroke-width="1" />
<line x1="91.50" y1="171.50" x2="95.50" y2="171.50" stroke="#333" stroke-width="1" />
<line x1="91.50" y1="166.50" x2="95.50" y2="166.50" stroke="#333" stroke-width="1" />
<line x1="91.50" y1="132.50" x2="95.50" y2="132.50" stroke="#333" stroke-width="1" />
<line x1="91.50" y1="115.50" x2="95.50" y2="115.50" stroke="#333" stroke-width="1" />
<line x1="91.50" y1="103.50" x2="95.50" y2="103.50" stroke="#333" stroke-width="1" />
<line x1="91.50" y1="93.50" x2="95.50" y2="93.50" stroke="#333" stroke-width="1" />
<line x1="91.50" y1="86.50" x2="95.50" y2="86.50" stroke="#333" stroke-width="1" />
<line x1="91.50" y1="79.50" x2="95.50" y2="79.50" stroke="#333" stroke-width="1" />
<line x1="91.50" y1="73.50" x2="95.50" y2="73.50" stroke="#333" stroke-width="1" />
<line x1="91.50" y1="68.50" x2="95.50" y2="68.50" stroke="#333" stroke-width="1" />
<line x1="91.50" y1="35.50" x2="95.50" y2="35.50" stroke="#333" stroke-width="1" />
<line x1="87.50" y1="162.50" x2="95.50" y2="162.50" stroke="#333" stroke-width="1" />
<line x1="87.50" y1="64.50" x2="95.50" y2="64.50" stroke="#333" stroke-width="1" />
<text x="82.00" y="66.00" font-size="13" text-anchor="end" textLength="7.0" lengthAdjust="spacingAndGlyphs" fill="#333" >2</text>
<text x="75.10" y="72.00" font-size="13" text-anchor="end" textLength="15.0" lengthAdjust="spacingAndGlyphs" fill="#333" >10</text>
<text x="82.00" y="162.50" font-size="13" text-anchor="end" textLength="6.6" lengthAdjust="spacingAndGlyphs" fill="#333" >1</text>
<text x="75.50" y="168.50" font-size="13" text-anchor="end" textLength="15.0" lengthAdjust="spacingAndGlyphs" fill="#333" >10</text>
<text x="10.50" y="28.00" font-size="13" text-anchor="start" textLength="59.6" lengthAdjust="spacingAndGlyphs" fill="#333" >CHEMS Pr.</text>
<text x="10.50" y="210.00" font-size="13" text-anchor="start" textLength="58.6" lengthAdjust="spacingAndGlyphs" fill="#333" >LEMMS Pr.</text>
<text x="49.80" y="124.40" font-size="13" text-anchor="middle" textLength="73.2" lengthAdjust="spacingAndGlyphs" fill="#333" transform="rotate(-90 49.8 124.4)">Energy (keV)</text>
<rect x="95.50" y="224.50" width="985.00" height="192.00" fill="#000" />
<line x1="91.50" y1="407.50" x2="95.50" y2="407.50" stroke="#333" stroke-width="1" />
<line x1="91.50" y1="390.50" x2="95.50" y2="390.50" stroke="#333" stroke-width="1" />
<line x1="91.50" y1="378.50" x2="95.50" y2="378.50" stroke="#333" stroke-width="1" />
<line x1="91.50" y1="368.50" x2="95.50" y2="368.50" stroke="#333" stroke-width="1" />
<line x1="91.50" y1="359.50" x2="95.50" y2="359.50" stroke="#333" stroke-width="1" />
<line x1="91.50" y1="351.50" x2="95.50" y2="351.50" stroke="#333" stroke-width="1" />
<line x1="91.50" y1="345.50" x2="95.50" y2="345.50" stroke="#333" stroke-width="1" />
<line x1="91.50" y1="339.50" x2="95.50" y2="339.50" stroke="#333" stroke-width="1" />
<line x1="91.50" y1="334.50" x2="95.50" y2="334.50" stroke="#333" stroke-width="1" />
<line x1="91.50" y1="329.50" x2="95.50" y2="329.50" stroke="#333" stroke-width="1" />
<line x1="91.50" y1="324.50" x2="95.50" y2="324.50" stroke="#333" stroke-width="1" />
<line x1="91.50" y1="320.50" x2="95.50" y2="320.50" stroke="#333" stroke-width="1" />
<line x1="91.50" y1="316.50" x2="95.50" y2="316.50" stroke="#333" stroke-width="1" />
<line x1="91.50" y1="312.50" x2="95.50" y2="312.50" stroke="#333" stroke-width="1" />
<line x1="91.50" y1="309.50" x2="95.50" y2="309.50" stroke="#333" stroke-width="1" />
<line x1="91.50" y1="306.50" x2="95.50" y2="306.50" stroke="#333" stroke-width="1" />
<line x1="91.50" y1="303.50" x2="95.50" y2="303.50" stroke="#333" stroke-width="1" />
<line x1="91.50" y1="300.50" x2="95.50" y2="300.50" stroke="#333" stroke-width="1" />
<line x1="91.50" y1="297.50" x2="95.50" y2="297.50" stroke="#333" stroke-width="1" />
<line x1="91.50" y1="295.50" x2="95.50" y2="295.50" stroke="#333" stroke-width="1" />
<line x1="91.50" y1="292.50" x2="95.50" y2="292.50" stroke="#333" stroke-width="1" />
<line x1="91.50" y1="290.50" x2="95.50" y2="290.50" stroke="#333" stroke-width="1" />
<line x1="91.50" y1="287.50" x2="95.50" y2="287.50" stroke="#333" stroke-width="1" />
<line x1="91.50" y1="285.50" x2="95.50" y2="285.50" stroke="#333" stroke-width="1" />
<line x1="91.50" y1="283.50" x2="95.50" y2="283.50" stroke="#333" stroke-width="1" />
<line x1="91.50" y1="281.50" x2="95.50" y2="281.50" stroke="#333" stroke-width="1" />
<line x1="91.50" y1="279.50" x2="95.50" y2="279.50" stroke="#333" stroke-width="1" />
<line x1="91.50" y1="277.50" x2="95.50" y2="277.50" stroke="#333" stroke-width="1" />
<line x1="91.50" y1="275.50" x2="95.50" y2="275.50" stroke="#333" stroke-width="1" />
<line x1="91.50" y1="273.50" x2="95.50" y2="273.50" stroke="#333" stroke-width="1" />
<line x1="91.50" y1="272.50" x2="95.50" y2="272.50" stroke="#333" stroke-width="1" />
<line x1="91.50" y1="270.50" x2="95.50" y2="270.50" stroke="#333" stroke-width="1" />
<line x1="91.50" y1="268.50" x2="95.50" y2="268.50" stroke="#333" stroke-width="1" />
<line x1="91.50" y1="267.50" x2="95.50" y2="267.50" stroke="#333" stroke-width="1" />
<line x1="91.50" y1="265.50" x2="95.50" y2="265.50" stroke="#333" stroke-width="1" />
<line x1="91.50" y1="264.50" x2="95.50" y2="264.50" stroke="#333" stroke-width="1" />
<line x1="91.50" y1="262.50" x2="95.50" y2="262.50" stroke="#333" stroke-width="1" />
<line x1="91.50" y1="261.50" x2="95.50" y2="261.50" stroke="#333" stroke-width="1" />
<line x1="91.50" y1="259.50" x2="95.50" y2="259.50" stroke="#333" stroke-width="1" />
<line x1="91.50" y1="258.50" x2="95.50" y2="258.50" stroke="#333" stroke-width="1" />
<line x1="91.50" y1="257.50" x2="95.50" y2="257.50" stroke="#333" stroke-width="1" />
<line x1="91.50" y1="256.50" x2="95.50" y2="256.50" stroke="#333" stroke-width="1" />
<line x1="91.50" y1="254.50" x2="95.50" y2="254.50" stroke="#333" stroke-width="1" />
<line x1="91.50" y1="253.50" x2="95.50" y2="253.50" stroke="#333" stroke-width="1" />
<line x1="91.50" y1="252.50" x2="95.50" y2="252.50" stroke="#333" stroke-width="1" />
<line x1="91.50" y1="251.50" x2="95.50" y2="251.50" stroke="#333" stroke-width="1" />
<line x1="91.50" y1="249.50" x2="95.50" y2="249.50" stroke="#333" stroke-width="1" />
<line x1="91.50" y1="248.50" x2="95.50" y2="248.50" stroke="#333" stroke-width="1" />
<line x1="91.50" y1="247.50" x2="95.50" y2="247.50" stroke="#333" stroke-width="1" />
<line x1="91.50" y1="246.50" x2="95.50" y2="246.50" stroke="#333" stroke-width="1" />
<line x1="91.50" y1="245.50" x2="95.50" y2="245.50" stroke="#333" stroke-width="1" />
<line x1="91.50" y1="244.50" x2="95.50" y2="244.50" stroke="#333" stroke-width="1" />
<line x1="91.50" y1="243.50" x2="95.50" y2="243.50" stroke="#333" stroke-width="1" />
<line x1="91.50" y1="242.50" x2="95.50" y2="242.50" stroke="#333" stroke-width="1" />
<line x1="91.50" y1="241.50" x2="95.50" y2="241.50" stroke="#333" stroke-width="1" />
<line x1="91.50" y1="240.50" x2="95.50" y2="240.50" stroke="#333" stroke-width="1" />
<line x1="91.50" y1="239.50" x2="95.50" y2="239.50" stroke="#333" stroke-width="1" />
<line x1="91.50" y1="238.50" x2="95.50" y2="238.50" stroke="#333" stroke-width="1" />
<line x1="91.50" y1="237.50" x2="95.50" y2="237.50" stroke="#333" stroke-width="1" />
<line x1="91.50" y1="236.50" x2="95.50" y2="236.50" stroke="#333" stroke-width="1" />
<line x1="91.50" y1="235.50" x2="95.50" y2="235.50" stroke="#333" stroke-width="1" />
<line x1="91.50" y1="234.50" x2="95.50" y2="234.50" stroke="#333" stroke-width="1" />
<line x1="91.50" y1="234.50" x2="95.50" y2="234.50" stroke="#333" stroke-width="1" />
<line x1="91.50" y1="233.50" x2="95.50" y2="233.50" stroke="#333" stroke-width="1" />
<line x1="91.50" y1="232.50" x2="95.50" y2="232.50" stroke="#333" stroke-width="1" />
<line x1="91.50" y1="231.50" x2="95.50" y2="231.50" stroke="#333" stroke-width="1" />
<line x1="91.50" y1="230.50" x2="95.50" y2="230.50" stroke="#333" stroke-width="1" />
<line x1="91.50" y1="229.50" x2="95.50" y2="229.50" stroke="#333" stroke-width="1" />
<line x1="91.50" y1="229.50" x2="95.50" y2="229.50" stroke="#333" stroke-width="1" />
<line x1="91.50" y1="228.50" x2="95.50" y2="228.50" stroke="#333" stroke-width="1" />
<line x1="91.50" y1="227.50" x2="95.50" y2="227.50" stroke="#333" stroke-width="1" />
<line x1="91.50" y1="226.50" x2="95.50" y2="226.50" stroke="#333" stroke-width="1" />
<line x1="91.50" y1="225.50" x2="95.50" y2="225.50" stroke="#333" stroke-width="1" />
<line x1="91.50" y1="225.50" x2="95.50" y2="225.50" stroke="#333" stroke-width="1" />
<line x1="91.50" y1="224.50" x2="95.50" y2="224.50" stroke="#333" stroke-width="1" />
<line x1="87.50" y1="339.50" x2="95.50" y2="339.50" stroke="#333" stroke-width="1" />
<text x="81.50" y="343.70" font-size="13" text-anchor="end" textLength="26.6" lengthAdjust="spacingAndGlyphs" fill="#333" >100.</text>
<line x1="87.50" y1="300.50" x2="95.50" y2="300.50" stroke="#333" stroke-width="1" />
<text x="81.50" y="304.69" font-size="13" text-anchor="end" textLength="26.6" lengthAdjust="spacingAndGlyphs" fill="#333" >200.</text>
<line x1="87.50" y1="277.50" x2="95.50" y2="277.50" stroke="#333" stroke-width="1" />
<text x="81.50" y="281.87" font-size="13" text-anchor="end" textLength="26.6" lengthAdjust="spacingAndGlyphs" fill="#333" >300.</text>
<line x1="87.50" y1="261.50" x2="95.50" y2="261.50" stroke="#333" stroke-width="1" />
<text x="81.50" y="265.67" font-size="13" text-anchor="end" textLength="26.6" lengthAdjust="spacingAndGlyphs" fill="#333" >400.</text>
<line x1="87.50" y1="248.50" x2="95.50" y2="248.50" stroke="#333" stroke-width="1" />
<text x="81.50" y="253.11" font-size="13" text-anchor="end" textLength="26.6" lengthAdjust="spacingAndGlyphs" fill="#333" >500.</text>
<line x1="87.50" y1="238.50" x2="95.50" y2="238.50" stroke="#333" stroke-width="1" />
<text x="81.50" y="242.85" font-size="13" text-anchor="end" textLength="26.6" lengthAdjust="spacingAndGlyphs" fill="#333" >600.</text>
<line x1="87.50" y1="229.50" x2="95.50" y2="229.50" stroke="#333" stroke-width="1" />
<text x="81.50" y="234.18" font-size="13" text-anchor="end" textLength="26.6" lengthAdjust="spacingAndGlyphs" fill="#333" >700.</text>
<text x="46.00" y="320.25" font-size="13" text-anchor="middle" textLength="73.1" lengthAdjust="spacingAndGlyphs" fill="#333" transform="rotate(-90 46 320.25)">Energy (keV)</text>
<rect x="95.50" y="420.50" width="985.00" height="89.00" fill="#fff" stroke="#333" stroke-width="1"/>
<line x1="91.50" y1="509.50" x2="95.50" y2="509.50" stroke="#333" stroke-width="1" />
<line x1="91.50" y1="507.50" x2="95.50" y2="507.50" stroke="#333" stroke-width="1" />
<line x1="91.50" y1="506.50" x2="95.50" y2="506.50" stroke="#333" stroke-width="1" />
<line x1="91.50" y1="504.50" x2="95.50" y2="504.50" stroke="#333" stroke-width="1" />
<line x1="91.50" y1="503.50" x2="95.50" y2="503.50" stroke="#333" stroke-width="1" />
<line x1="91.50" y1="495.50" x2="95.50" y2="495.50" stroke="#333" stroke-width="1" />
<line x1="91.50" y1="492.50" x2="95.50" y2="492.50" stroke="#333" stroke-width="1" />
<line x1="91.50" y1="489.50" x2="95.50" y2="489.50" stroke="#333" stroke-width="1" />
<line x1="91.50" y1="487.50" x2="95.50" y2="487.50" stroke="#333" stroke-width="1" />
<line x1="91.50" y1="485.50" x2="95.50" y2="485.50" stroke="#333" stroke-width="1" />
<line x1="91.50" y1="483.50" x2="95.50" y2="483.50" stroke="#333" stroke-width="1" />
<line x1="91.50" y1="482.50" x2="95.50" y2="482.50" stroke="#333" stroke-width="1" />
<line x1="91.50" y1="481.50" x2="95.50" y2="481.50" stroke="#333" stroke-width="1" />
<line x1="91.50" y1="473.50" x2="95.50" y2="473.50" stroke="#333" stroke-width="1" />
<line x1="91.50" y1="469.50" x2="95.50" y2="469.50" stroke="#333" stroke-width="1" />
<line x1="91.50" y1="467.50" x2="95.50" y2="467.50" stroke="#333" stroke-width="1" />
<line x1="91.50" y1="465.50" x2="95.50" y2="465.50" stroke="#333" stroke-width="1" />
<line x1="91.50" y1="463.50" x2="95.50" y2="463.50" stroke="#333" stroke-width="1" />
<line x1="91.50" y1="461.50" x2="95.50" y2="461.50" stroke="#333" stroke-width="1" />
<line x1="91.50" y1="460.50" x2="95.50" y2="460.50" stroke="#333" stroke-width="1" />
<line x1="91.50" y1="459.50" x2="95.50" y2="459.50" stroke="#333" stroke-width="1" />
<line x1="91.50" y1="451.50" x2="95.50" y2="451.50" stroke="#333" stroke-width="1" />
<line x1="91.50" y1="447.50" x2="95.50" y2="447.50" stroke="#333" stroke-width="1" />
<line x1="91.50" y1="445.50" x2="95.50" y2="445.50" stroke="#333" stroke-width="1" />
<line x1="91.50" y1="442.50" x2="95.50" y2="442.50" stroke="#333" stroke-width="1" />
<line x1="91.50" y1="441.50" x2="95.50" y2="441.50" stroke="#333" stroke-width="1" />
<line x1="91.50" y1="439.50" x2="95.50" y2="439.50" stroke="#333" stroke-width="1" />
<line x1="91.50" y1="438.50" x2="95.50" y2="438.50" stroke="#333" stroke-width="1" />
<line x1="91.50" y1="437.50" x2="95.50" y2="437.50" stroke="#333" stroke-width="1" />
<line x1="91.50" y1="429.50" x2="95.50" y2="429.50" stroke="#333" stroke-width="1" />
<line x1="91.50" y1="425.50" x2="95.50" y2="425.50" stroke="#333" stroke-width="1" />
<line x1="91.50" y1="422.50" x2="95.50" y2="422.50" stroke="#333" stroke-width="1" />
<line x1="91.50" y1="420.50" x2="95.50" y2="420.50" stroke="#333" stroke-width="1" />
<line x1="87.50" y1="436.50" x2="95.50" y2="436.50" stroke="#333" stroke-width="1" />
<line x1="87.50" y1="458.50" x2="95.50" y2="458.50" stroke="#333" stroke-width="1" />
<line x1="87.50" y1="480.50" x2="95.50" y2="480.50" stroke="#333" stroke-width="1" />
<line x1="87.50" y1="502.50" x2="95.50" y2="502.50" stroke="#333" stroke-width="1" />
<text x="35.00" y="465.75" font-size="13" text-anchor="middle" textLength="70.1" lengthAdjust="spacingAndGlyphs" fill="#333" transform="rotate(-90 35 465.75)">P dyn/cm^2</text>
<rect x="95.50" y="514.00" width="985.00" height="177.50" fill="#000" />
<line x1="91.50" y1="686.50" x2="95.50" y2="686.50" stroke="#333" stroke-width="1" />
<line x1="91.50" y1="679.50" x2="95.50" y2="679.50" stroke="#333" stroke-width="1" />
<line x1="91.50" y1="674.50" x2="95.50" y2="674.50" stroke="#333" stroke-width="1" />
<line x1="91.50" y1="670.50" x2="95.50" y2="670.50" stroke="#333" stroke-width="1" />
<line x1="91.50" y1="667.50" x2="95.50" y2="667.50" stroke="#333" stroke-width="1" />
<line x1="91.50" y1="664.50" x2="95.50" y2="664.50" stroke="#333" stroke-width="1" />
<line x1="91.50" y1="661.50" x2="95.50" y2="661.50" stroke="#333" stroke-width="1" />
<line x1="91.50" y1="643.50" x2="95.50" y2="643.50" stroke="#333" stroke-width="1" />
<line x1="91.50" y1="634.50" x2="95.50" y2="634.50" stroke="#333" stroke-width="1" />
<line x1="91.50" y1="627.50" x2="95.50" y2="627.50" stroke="#333" stroke-width="1" />
<line x1="91.50" y1="622.50" x2="95.50" y2="622.50" stroke="#333" stroke-width="1" />
<line x1="91.50" y1="618.50" x2="95.50" y2="618.50" stroke="#333" stroke-width="1" />
<line x1="91.50" y1="614.50" x2="95.50" y2="614.50" stroke="#333" stroke-width="1" />
<line x1="91.50" y1="611.50" x2="95.50" y2="611.50" stroke="#333" stroke-width="1" />
<line x1="91.50" y1="609.50" x2="95.50" y2="609.50" stroke="#333" stroke-width="1" />
<line x1="91.50" y1="590.50" x2="95.50" y2="590.50" stroke="#333" stroke-width="1" />
<line x1="91.50" y1="581.50" x2="95.50" y2="581.50" stroke="#333" stroke-width="1" />
<line x1="91.50" y1="575.50" x2="95.50" y2="575.50" stroke="#333" stroke-width="1" />
<line x1="91.50" y1="570.50" x2="95.50" y2="570.50" stroke="#333" stroke-width="1" />
<line x1="91.50" y1="565.50" x2="95.50" y2="565.50" stroke="#333" stroke-width="1" />
<line x1="91.50" y1="562.50" x2="95.50" y2="562.50" stroke="#333" stroke-width="1" />
<line x1="91.50" y1="559.50" x2="95.50" y2="559.50" stroke="#333" stroke-width="1" />
<line x1="91.50" y1="556.50" x2="95.50" y2="556.50" stroke="#333" stroke-width="1" />
<line x1="91.50" y1="538.50" x2="95.50" y2="538.50" stroke="#333" stroke-width="1" />
<line x1="91.50" y1="529.50" x2="95.50" y2="529.50" stroke="#333" stroke-width="1" />
<line x1="91.50" y1="522.50" x2="95.50" y2="522.50" stroke="#333" stroke-width="1" />
<line x1="91.50" y1="517.50" x2="95.50" y2="517.50" stroke="#333" stroke-width="1" />
<line x1="87.50" y1="659.50" x2="95.50" y2="659.50" stroke="#333" stroke-width="1" />
<line x1="87.50" y1="606.50" x2="95.50" y2="606.50" stroke="#333" stroke-width="1" />
<line x1="87.50" y1="554.50" x2="95.50" y2="554.50" stroke="#333" stroke-width="1" />
<text x="82.20" y="555.70" font-size="13" text-anchor="end" textLength="8.1" lengthAdjust="spacingAndGlyphs" fill="#333" >4</text>
<text x="74.20" y="561.70" font-size="13" text-anchor="end" textLength="15.0" lengthAdjust="spacingAndGlyphs" fill="#333" >10</text>
<text x="82.20" y="608.00" font-size="13" text-anchor="end" textLength="7.6" lengthAdjust="spacingAndGlyphs" fill="#333" >3</text>
<text x="74.70" y="614.00" font-size="13" text-anchor="end" textLength="15.0" lengthAdjust="spacingAndGlyphs" fill="#333" >10</text>
<text x="82.20" y="660.80" font-size="13" text-anchor="end" textLength="7.1" lengthAdjust="spacingAndGlyphs" fill="#333" >2</text>
<text x="75.20" y="666.80" font-size="13" text-anchor="end" textLength="15.0" lengthAdjust="spacingAndGlyphs" fill="#333" >10</text>
<text x="9.60" y="537.10" font-size="13" text-anchor="start" textLength="66.2" lengthAdjust="spacingAndGlyphs" fill="#333" >LEMMS Ions</text>
<text x="50.00" y="602.25" font-size="13" text-anchor="middle" textLength="73.1" lengthAdjust="spacingAndGlyphs" fill="#333" transform="rotate(-90 50 602.25)">Energy (keV)</text>
<defs><linearGradient id="yg" gradientUnits="userSpaceOnUse" x1="0" y1="647" x2="0" y2="690"><stop offset="0" stop-color="#70d068"/><stop offset="0.1" stop-color="#98e040"/><stop offset="0.22" stop-color="#b0e818"/><stop offset="0.38" stop-color="#c0ec00"/><stop offset="0.54" stop-color="#d0e400"/><stop offset="0.7" stop-color="#dcd400"/><stop offset="0.86" stop-color="#e4c000"/><stop offset="1" stop-color="#ecb000"/></linearGradient><linearGradient id="ys" gradientUnits="userSpaceOnUse" x1="0" y1="647" x2="0" y2="690"><stop offset="0" stop-color="#28b890"/><stop offset="0.12" stop-color="#50cc70"/><stop offset="0.3" stop-color="#90e040"/><stop offset="0.4" stop-color="#a8ec20"/><stop offset="0.67" stop-color="#c4f000"/><stop offset="0.82" stop-color="#e0e000"/><stop offset="0.93" stop-color="#ecc400"/><stop offset="1" stop-color="#f0a400"/></linearGradient><linearGradient id="tg" gradientUnits="userSpaceOnUse" x1="0" y1="600" x2="0" y2="664"><stop offset="0" stop-color="#1070f0"/><stop offset="0.3" stop-color="#1090d0"/><stop offset="0.55" stop-color="#10a8a0"/><stop offset="0.8" stop-color="#30c080"/><stop offset="1" stop-color="#80dc40"/></linearGradient><linearGradient id="cg" gradientUnits="userSpaceOnUse" x1="0" y1="581" x2="0" y2="606"><stop offset="0" stop-color="#1060f8"/><stop offset="0.6" stop-color="#1088e0"/><stop offset="1" stop-color="#10a0b8"/></linearGradient><clipPath id="cp4"><rect x="96" y="514.5" width="984.5" height="175.25"/></clipPath></defs>
<g clip-path="url(#cp4)" shape-rendering="crispEdges">
<rect x="95.5" y="664" width="251.5" height="26" fill="url(#yg)"/>
<rect x="342" y="664" width="5" height="12" fill="#000"/>
<rect x="268.0" y="664" width="0.9" height="12" fill="#000"/>
<rect x="288.9" y="664" width="0.9" height="12" fill="#000"/>
<rect x="95.9" y="647" width="9.0" height="17" fill="url(#yg)"/>
<rect x="107.0" y="647" width="5.1" height="17" fill="url(#yg)"/>
<rect x="112.9" y="647" width="3.0" height="17" fill="url(#yg)"/>
<rect x="118.9" y="647" width="2.9" height="17" fill="url(#yg)"/>
<rect x="124.0" y="647" width="8.9" height="17" fill="url(#yg)"/>
<rect x="135.0" y="647" width="6.0" height="17" fill="url(#yg)"/>
<rect x="145.1" y="647" width="0.9" height="17" fill="url(#yg)"/>
<rect x="147.9" y="647" width="1.4" height="17" fill="url(#yg)"/>
<rect x="153.1" y="647" width="14.1" height="17" fill="url(#yg)"/>
<rect x="168.1" y="647" width="3.7" height="17" fill="url(#yg)"/>
<rect x="173.9" y="647" width="3.9" height="17" fill="url(#yg)"/>
<rect x="180.1" y="647" width="2.8" height="17" fill="url(#yg)"/>
<rect x="186.1" y="647" width="0.9" height="17" fill="url(#yg)"/>
<rect x="191.1" y="647" width="3.9" height="17" fill="url(#yg)"/>
<rect x="190.9" y="647" width="6.9" height="17" fill="url(#yg)"/>
<rect x="199.9" y="647" width="21.8" height="17" fill="url(#yg)"/>
<rect x="223.1" y="647" width="13.8" height="17" fill="url(#yg)"/>
<rect x="238.3" y="647" width="7.4" height="17" fill="url(#yg)"/>
<rect x="248.9" y="647" width="1.1" height="17" fill="url(#yg)"/>
<rect x="251.8" y="647" width="1.2" height="17" fill="url(#yg)"/>
<rect x="253.9" y="647" width="2.0" height="17" fill="url(#yg)"/>
<rect x="260.8" y="647" width="2.0" height="17" fill="url(#yg)"/>
<rect x="271.0" y="647" width="0.9" height="17" fill="url(#yg)"/>
<rect x="275.1" y="647" width="2.8" height="17" fill="url(#yg)"/>
<rect x="282.9" y="647" width="1.1" height="17" fill="url(#yg)"/>
<rect x="286.0" y="647" width="0.9" height="17" fill="url(#yg)"/>
<rect x="290.9" y="647" width="2.1" height="17" fill="url(#yg)"/>
<rect x="294.0" y="647" width="6.1" height="17" fill="url(#yg)"/>
<rect x="295.0" y="647" width="6.9" height="17" fill="url(#yg)"/>
<rect x="304.2" y="647" width="23.0" height="17" fill="url(#yg)"/>
<rect x="328.3" y="647" width="1.9" height="17" fill="url(#yg)"/>
<rect x="331.3" y="647" width="3.9" height="17" fill="url(#yg)"/>
<rect x="336.1" y="647" width="2.9" height="17" fill="url(#yg)"/>
<rect x="340.8" y="647" width="1.3" height="17" fill="url(#yg)"/>
<rect x="95.5" y="674" width="1.712" height="16" fill="#f08000" opacity="0.22"/>
<rect x="97.2" y="682" width="1.712" height="16" fill="#f08000" opacity="0.22"/>
<rect x="97.2" y="647" width="1.712" height="12" fill="#10a8b0" opacity="0.35"/>
<rect x="98.9" y="682" width="1.712" height="16" fill="#f08000" opacity="0.22"/>
<rect x="98.9" y="647" width="1.712" height="6" fill="#10a8b0" opacity="0.35"/>
<rect x="100.6" y="647" width="1.712" height="6" fill="#10a8b0" opacity="0.35"/>
<rect x="102.3" y="647" width="1.712" height="12" fill="#10a8b0" opacity="0.35"/>
<rect x="104.1" y="674" width="1.712" height="16" fill="#f08000" opacity="0.22"/>
<rect x="107.5" y="647" width="1.712" height="6" fill="#10a8b0" opacity="0.35"/>
<rect x="109.2" y="674" width="1.712" height="16" fill="#f08000" opacity="0.22"/>
<rect x="109.2" y="647" width="1.712" height="6" fill="#10a8b0" opacity="0.35"/>
<rect x="114.3" y="682" width="1.712" height="16" fill="#f08000" opacity="0.22"/>
<rect x="117.8" y="674" width="1.712" height="16" fill="#f08000" opacity="0.22"/>
<rect x="124.6" y="674" width="1.712" height="16" fill="#f08000" opacity="0.22"/>
<rect x="126.3" y="682" width="1.712" height="16" fill="#f08000" opacity="0.22"/>
<rect x="131.5" y="682" width="1.712" height="16" fill="#f08000" opacity="0.22"/>
<rect x="140.0" y="682" width="1.712" height="16" fill="#f08000" opacity="0.22"/>
<rect x="143.4" y="674" width="1.712" height="16" fill="#f08000" opacity="0.22"/>
<rect x="146.9" y="682" width="1.712" height="16" fill="#f08000" opacity="0.22"/>
<rect x="157.1" y="678" width="1.712" height="16" fill="#f08000" opacity="0.22"/>
<rect x="157.1" y="647" width="1.712" height="6" fill="#10a8b0" opacity="0.35"/>
<rect x="160.6" y="647" width="1.712" height="9" fill="#10a8b0" opacity="0.35"/>
<rect x="165.7" y="678" width="1.712" height="16" fill="#f08000" opacity="0.22"/>
<rect x="169.1" y="674" width="1.712" height="16" fill="#f08000" opacity="0.22"/>
<rect x="169.1" y="647" width="1.712" height="6" fill="#10a8b0" opacity="0.35"/>
<rect x="174.3" y="674" width="1.712" height="16" fill="#f08000" opacity="0.22"/>
<rect x="181.1" y="647" width="1.712" height="12" fill="#10a8b0" opacity="0.35"/>
<rect x="187.9" y="674" width="1.712" height="16" fill="#f08000" opacity="0.22"/>
<rect x="189.7" y="682" width="1.712" height="16" fill="#f08000" opacity="0.22"/>
<rect x="191.4" y="674" width="1.712" height="16" fill="#f08000" opacity="0.22"/>
<rect x="194.8" y="674" width="1.712" height="16" fill="#f08000" opacity="0.22"/>
<rect x="196.5" y="678" width="1.712" height="16" fill="#f08000" opacity="0.22"/>
<rect x="199.9" y="678" width="1.712" height="16" fill="#f08000" opacity="0.22"/>
<rect x="203.4" y="674" width="1.712" height="16" fill="#f08000" opacity="0.22"/>
<rect x="208.5" y="682" width="1.712" height="16" fill="#f08000" opacity="0.22"/>
<rect x="211.9" y="647" width="1.712" height="12" fill="#10a8b0" opacity="0.35"/>
<rect x="215.3" y="678" width="1.712" height="16" fill="#f08000" opacity="0.22"/>
<rect x="217.1" y="647" width="1.712" height="12" fill="#10a8b0" opacity="0.35"/>
<rect x="220.5" y="674" width="1.712" height="16" fill="#f08000" opacity="0.22"/>
<rect x="223.9" y="682" width="1.712" height="16" fill="#f08000" opacity="0.22"/>
<rect x="229.0" y="682" width="1.712" height="16" fill="#f08000" opacity="0.22"/>
<rect x="234.2" y="647" width="1.712" height="6" fill="#10a8b0" opacity="0.35"/>
<rect x="239.3" y="647" width="1.712" height="12" fill="#10a8b0" opacity="0.35"/>
<rect x="241.0" y="682" width="1.712" height="16" fill="#f08000" opacity="0.22"/>
<rect x="241.0" y="647" width="1.712" height="12" fill="#10a8b0" opacity="0.35"/>
<rect x="242.7" y="678" width="1.712" height="16" fill="#f08000" opacity="0.22"/>
<rect x="246.2" y="682" width="1.712" height="16" fill="#f08000" opacity="0.22"/>
<rect x="253.0" y="674" width="1.712" height="16" fill="#f08000" opacity="0.22"/>
<rect x="265.0" y="682" width="1.712" height="16" fill="#f08000" opacity="0.22"/>
<rect x="270.1" y="678" width="1.712" height="16" fill="#f08000" opacity="0.22"/>
<rect x="275.3" y="682" width="1.712" height="16" fill="#f08000" opacity="0.22"/>
<rect x="283.8" y="678" width="1.712" height="16" fill="#f08000" opacity="0.22"/>
<rect x="287.2" y="674" width="1.712" height="16" fill="#f08000" opacity="0.22"/>
<rect x="290.7" y="682" width="1.712" height="16" fill="#f08000" opacity="0.22"/>
<rect x="294.1" y="647" width="1.712" height="6" fill="#10a8b0" opacity="0.35"/>
<rect x="295.8" y="674" width="1.712" height="16" fill="#f08000" opacity="0.22"/>
<rect x="309.5" y="647" width="1.712" height="12" fill="#10a8b0" opacity="0.35"/>
<rect x="311.2" y="647" width="1.712" height="9" fill="#10a8b0" opacity="0.35"/>
<rect x="312.9" y="674" width="1.712" height="16" fill="#f08000" opacity="0.22"/>
<rect x="314.6" y="682" width="1.712" height="16" fill="#f08000" opacity="0.22"/>
<rect x="314.6" y="647" width="1.712" height="6" fill="#10a8b0" opacity="0.35"/>
<rect x="316.3" y="678" width="1.712" height="16" fill="#f08000" opacity="0.22"/>
<rect x="318.1" y="647" width="1.712" height="12" fill="#10a8b0" opacity="0.35"/>
<rect x="321.5" y="674" width="1.712" height="16" fill="#f08000" opacity="0.22"/>
<rect x="323.2" y="674" width="1.712" height="16" fill="#f08000" opacity="0.22"/>
<rect x="330.0" y="674" width="1.712" height="16" fill="#f08000" opacity="0.22"/>
<rect x="331.8" y="678" width="1.712" height="16" fill="#f08000" opacity="0.22"/>
<rect x="331.8" y="647" width="1.712" height="12" fill="#10a8b0" opacity="0.35"/>
<rect x="336.9" y="674" width="1.712" height="16" fill="#f08000" opacity="0.22"/>
<rect x="336.9" y="647" width="1.712" height="6" fill="#10a8b0" opacity="0.35"/>
<rect x="340.3" y="674" width="1.712" height="16" fill="#f08000" opacity="0.22"/>
<rect x="342.0" y="674" width="1.712" height="16" fill="#f08000" opacity="0.22"/>
<defs><linearGradient id="hor" gradientUnits="userSpaceOnUse" x1="95" y1="0" x2="347" y2="0"><stop offset="0.000" stop-color="#f07000" stop-opacity="0.5"/><stop offset="0.040" stop-color="#f07000" stop-opacity="0.3"/><stop offset="0.139" stop-color="#f07000" stop-opacity="0.3"/><stop offset="0.226" stop-color="#f07000" stop-opacity="0.65"/><stop offset="0.421" stop-color="#f07000" stop-opacity="0.65"/><stop offset="0.464" stop-color="#f07000" stop-opacity="0.5"/><stop offset="0.591" stop-color="#f07000" stop-opacity="0.6"/><stop offset="0.635" stop-color="#f07000" stop-opacity="0.2"/><stop offset="0.774" stop-color="#f07000" stop-opacity="0.45"/><stop offset="0.825" stop-color="#f07000" stop-opacity="0.55"/><stop offset="0.861" stop-color="#f07000" stop-opacity="0.15"/><stop offset="1.000" stop-color="#f07000" stop-opacity="0.15"/></linearGradient><linearGradient id="vf" gradientUnits="userSpaceOnUse" x1="0" y1="664" x2="0" y2="690"><stop offset="0" stop-color="#000"/><stop offset="0.35" stop-color="#555"/><stop offset="1" stop-color="#fff"/></linearGradient><mask id="vm" maskUnits="userSpaceOnUse" x="90" y="660" width="260" height="32"><rect x="90" y="660" width="260" height="32" fill="url(#vf)"/></mask></defs>
<rect x="95.5" y="664" width="251.5" height="26" fill="url(#hor)" mask="url(#vm)"/>
<rect x="342" y="664" width="5" height="12" fill="#000"/>
<rect x="101.0" y="629.9" width="1.8" height="17.0" fill="url(#tg)"/>
<rect x="110.8" y="629.9" width="1.2" height="17.0" fill="url(#tg)"/>
<rect x="118.9" y="629.9" width="1.1" height="17.0" fill="url(#tg)"/>
<rect x="145.1" y="629.9" width="0.9" height="17.0" fill="url(#tg)"/>
<rect x="147.9" y="629.9" width="1.2" height="17.0" fill="url(#tg)"/>
<rect x="157.1" y="617.9" width="1.8" height="29.0" fill="url(#tg)"/>
<rect x="170.9" y="629.9" width="0.9" height="17.0" fill="url(#tg)"/>
<rect x="174.9" y="629.9" width="1.1" height="17.0" fill="url(#tg)"/>
<rect x="193.0" y="629.9" width="1.4" height="17.0" fill="url(#tg)"/>
<rect x="125.8" y="605.1" width="1.2" height="13.8" fill="url(#tg)"/>
<rect x="178.7" y="605.1" width="1.1" height="13.8" fill="url(#tg)"/>
<rect x="182.9" y="617.9" width="2.1" height="12.9" fill="url(#tg)"/>
<rect x="95.9" y="600.0" width="0.9" height="6.0" fill="url(#tg)"/>
<rect x="119.1" y="600.0" width="0.7" height="6.0" fill="url(#tg)"/>
<rect x="153.0" y="600.0" width="2.8" height="6.0" fill="url(#tg)"/>
<rect x="164.0" y="600.0" width="0.9" height="6.0" fill="url(#tg)"/>
<rect x="189.0" y="600.0" width="0.7" height="6.0" fill="url(#tg)"/>
<rect x="192.8" y="629.9" width="1.4" height="17.0" fill="url(#tg)"/>
<rect x="196.0" y="629.9" width="0.9" height="17.0" fill="url(#tg)"/>
<rect x="200.9" y="629.9" width="3.1" height="17.0" fill="url(#tg)"/>
<rect x="207.9" y="629.9" width="0.9" height="17.0" fill="url(#tg)"/>
<rect x="211.9" y="629.9" width="1.1" height="17.0" fill="url(#tg)"/>
<rect x="225.9" y="629.9" width="1.1" height="17.0" fill="url(#tg)"/>
<rect x="231.9" y="617.9" width="2.3" height="29.0" fill="url(#tg)"/>
<rect x="235.1" y="629.9" width="1.8" height="17.0" fill="url(#tg)"/>
<rect x="237.8" y="629.9" width="0.9" height="17.0" fill="url(#tg)"/>
<rect x="259.9" y="617.9" width="1.1" height="12.9" fill="url(#tg)"/>
<rect x="263.1" y="605.1" width="0.9" height="25.8" fill="url(#tg)"/>
<rect x="276.0" y="629.9" width="2.1" height="17.0" fill="url(#tg)"/>
<rect x="279.1" y="617.9" width="0.9" height="12.9" fill="url(#tg)"/>
<rect x="294.9" y="617.9" width="2.3" height="29.0" fill="url(#tg)"/>
<rect x="257.0" y="605.1" width="1.1" height="13.8" fill="url(#tg)"/>
<rect x="196.0" y="600.0" width="0.9" height="6.0" fill="url(#tg)"/>
<rect x="212.1" y="600.0" width="0.9" height="6.0" fill="url(#tg)"/>
<rect x="214.8" y="600.0" width="1.1" height="6.0" fill="url(#tg)"/>
<rect x="222.0" y="600.0" width="0.9" height="6.0" fill="url(#tg)"/>
<rect x="235.1" y="600.0" width="2.0" height="6.0" fill="url(#tg)"/>
<rect x="295.0" y="617.9" width="2.0" height="29.0" fill="url(#tg)"/>
<rect x="301.0" y="629.9" width="0.9" height="17.0" fill="url(#tg)"/>
<rect x="308.8" y="629.9" width="1.1" height="17.0" fill="url(#tg)"/>
<rect x="312.0" y="617.9" width="0.9" height="29.0" fill="url(#tg)"/>
<rect x="318.9" y="629.9" width="4.1" height="17.0" fill="url(#tg)"/>
<rect x="330.0" y="617.9" width="0.9" height="12.9" fill="url(#tg)"/>
<rect x="367.0" y="600.0" width="1.1" height="30.8" fill="url(#tg)"/>
<rect x="373.0" y="605.1" width="1.8" height="25.8" fill="url(#tg)"/>
<rect x="314.8" y="600.0" width="1.2" height="18.9" fill="url(#tg)"/>
<rect x="337.8" y="600.0" width="1.2" height="18.9" fill="url(#tg)"/>
<rect x="369.1" y="605.1" width="1.8" height="13.8" fill="url(#tg)"/>
<rect x="317.1" y="600.0" width="2.0" height="6.0" fill="url(#tg)"/>
<rect x="319.8" y="600.0" width="1.1" height="6.0" fill="url(#tg)"/>
<rect x="330.9" y="600.0" width="0.9" height="6.0" fill="url(#tg)"/>
<rect x="347.0" y="600.0" width="1.8" height="6.0" fill="url(#tg)"/>
<rect x="349.8" y="676.2" width="4.1" height="13.8" fill="url(#ys)"/>
<rect x="350.3" y="664.3" width="1.0" height="25.7" fill="url(#ys)"/>
<rect x="355.8" y="676.2" width="4.0" height="13.8" fill="url(#ys)"/>
<rect x="356.3" y="647.0" width="1.0" height="43.0" fill="url(#ys)"/>
<rect x="366.9" y="664.3" width="1.6" height="25.7" fill="url(#ys)"/>
<rect x="371.7" y="676.2" width="1.3" height="13.8" fill="url(#ys)"/>
<rect x="341.3" y="647.0" width="1.0" height="43.0" fill="url(#ys)"/>
<rect x="382.0" y="676.2" width="1.1" height="13.8" fill="url(#ys)"/>
<rect x="384.0" y="664.3" width="1.9" height="25.7" fill="url(#ys)"/>
<rect x="387.2" y="676.2" width="1.0" height="13.8" fill="url(#ys)"/>
<rect x="395.4" y="676.2" width="4.7" height="13.8" fill="url(#ys)"/>
<rect x="398.3" y="664.3" width="2.7" height="25.7" fill="url(#ys)"/>
<rect x="401.0" y="676.2" width="1.0" height="13.8" fill="url(#ys)"/>
<rect x="410.1" y="676.2" width="1.9" height="13.8" fill="url(#ys)"/>
<rect x="417.1" y="676.2" width="1.0" height="13.8" fill="url(#ys)"/>
<rect x="421.1" y="676.2" width="2.1" height="13.8" fill="url(#ys)"/>
<rect x="427.1" y="676.2" width="1.0" height="13.8" fill="url(#ys)"/>
<rect x="465.1" y="630.3" width="1.0" height="59.7" fill="url(#ys)"/>
<rect x="480.1" y="664.3" width="1.0" height="25.7" fill="url(#ys)"/>
<rect x="486.9" y="676.2" width="1.1" height="13.8" fill="url(#ys)"/>
<rect x="491.2" y="676.2" width="1.0" height="13.8" fill="url(#ys)"/>
<rect x="505.9" y="664.3" width="1.1" height="25.7" fill="url(#ys)"/>
<rect x="516.5" y="676.2" width="1.6" height="13.8" fill="url(#ys)"/>
<rect x="521.0" y="676.2" width="1.1" height="13.8" fill="url(#ys)"/>
<rect x="524.0" y="676.2" width="2.8" height="13.8" fill="url(#ys)"/>
<rect x="509.9" y="630.3" width="1.1" height="59.7" fill="url(#ys)"/>
<rect x="520.0" y="647.0" width="1.0" height="43.0" fill="url(#ys)"/>
<rect x="380.4" y="647.0" width="1.6" height="43.0" fill="url(#ys)"/>
<rect x="525.0" y="676.2" width="1.9" height="13.8" fill="url(#ys)"/>
<rect x="531.6" y="676.2" width="1.3" height="13.8" fill="url(#ys)"/>
<rect x="534.8" y="676.2" width="1.3" height="13.8" fill="url(#ys)"/>
<rect x="536.9" y="676.2" width="3.2" height="13.8" fill="url(#ys)"/>
<rect x="538.9" y="664.3" width="1.1" height="25.7" fill="url(#ys)"/>
<rect x="541.6" y="676.2" width="2.4" height="13.8" fill="url(#ys)"/>
<rect x="561.1" y="647.0" width="1.0" height="43.0" fill="url(#ys)"/>
<rect x="563.0" y="664.3" width="1.9" height="25.7" fill="url(#ys)"/>
<rect x="567.7" y="676.2" width="1.3" height="13.8" fill="url(#ys)"/>
<rect x="570.1" y="664.3" width="2.4" height="25.7" fill="url(#ys)"/>
<rect x="571.7" y="676.2" width="1.3" height="13.8" fill="url(#ys)"/>
<rect x="582.8" y="676.2" width="2.4" height="13.8" fill="url(#ys)"/>
<rect x="593.9" y="664.3" width="1.1" height="25.7" fill="url(#ys)"/>
<rect x="602.9" y="676.2" width="2.1" height="13.8" fill="url(#ys)"/>
<rect x="609.7" y="676.2" width="1.3" height="13.8" fill="url(#ys)"/>
<rect x="618.1" y="664.3" width="1.9" height="25.7" fill="url(#ys)"/>
<rect x="627.9" y="676.2" width="1.1" height="13.8" fill="url(#ys)"/>
<rect x="635.8" y="676.2" width="1.3" height="13.8" fill="url(#ys)"/>
<rect x="647.7" y="676.2" width="2.4" height="13.8" fill="url(#ys)"/>
<rect x="650.9" y="647.0" width="1.1" height="43.0" fill="url(#ys)"/>
<rect x="654.8" y="676.2" width="3.2" height="13.8" fill="url(#ys)"/>
<rect x="658.8" y="676.2" width="2.1" height="13.8" fill="url(#ys)"/>
<rect x="666.7" y="676.2" width="3.2" height="13.8" fill="url(#ys)"/>
<rect x="672.7" y="676.2" width="1.1" height="13.8" fill="url(#ys)"/>
<rect x="687.8" y="676.2" width="1.1" height="13.8" fill="url(#ys)"/>
<rect x="690.5" y="676.2" width="1.1" height="13.8" fill="url(#ys)"/>
<rect x="692.8" y="676.2" width="2.4" height="13.8" fill="url(#ys)"/>
<rect x="698.7" y="676.2" width="1.3" height="13.8" fill="url(#ys)"/>
<rect x="702.6" y="676.2" width="1.3" height="13.8" fill="url(#ys)"/>
<rect x="705.8" y="676.2" width="4.4" height="13.8" fill="url(#ys)"/>
<rect x="717.1" y="664.3" width="1.0" height="25.7" fill="url(#ys)"/>
<rect x="718.7" y="676.2" width="2.4" height="13.8" fill="url(#ys)"/>
<rect x="721.9" y="676.2" width="2.1" height="13.8" fill="url(#ys)"/>
<rect x="736.9" y="676.2" width="2.1" height="13.8" fill="url(#ys)"/>
<rect x="744.8" y="676.2" width="2.1" height="13.8" fill="url(#ys)"/>
<rect x="750.8" y="676.2" width="1.1" height="13.8" fill="url(#ys)"/>
<rect x="754.8" y="676.2" width="1.1" height="13.8" fill="url(#ys)"/>
<rect x="757.5" y="676.2" width="1.3" height="13.8" fill="url(#ys)"/>
<rect x="761.9" y="676.2" width="3.2" height="13.8" fill="url(#ys)"/>
<rect x="763.0" y="664.3" width="2.1" height="25.7" fill="url(#ys)"/>
<rect x="769.8" y="676.2" width="1.1" height="13.8" fill="url(#ys)"/>
<rect x="773.0" y="676.2" width="1.9" height="13.8" fill="url(#ys)"/>
<rect x="773.8" y="664.3" width="1.1" height="25.7" fill="url(#ys)"/>
<rect x="779.7" y="676.2" width="1.3" height="13.8" fill="url(#ys)"/>
<rect x="782.0" y="676.2" width="1.9" height="13.8" fill="url(#ys)"/>
<rect x="786.0" y="676.2" width="2.1" height="13.8" fill="url(#ys)"/>
<rect x="788.7" y="676.2" width="4.0" height="13.8" fill="url(#ys)"/>
<rect x="801.0" y="676.2" width="2.1" height="13.8" fill="url(#ys)"/>
<rect x="810.9" y="664.3" width="1.3" height="25.7" fill="url(#ys)"/>
<rect x="813.7" y="676.2" width="1.3" height="13.8" fill="url(#ys)"/>
<rect x="817.7" y="676.2" width="1.6" height="13.8" fill="url(#ys)"/>
<rect x="820.8" y="676.2" width="1.1" height="13.8" fill="url(#ys)"/>
<rect x="825.9" y="664.3" width="3.2" height="25.7" fill="url(#ys)"/>
<rect x="831.9" y="676.2" width="1.1" height="13.8" fill="url(#ys)"/>
<rect x="834.0" y="664.3" width="2.7" height="25.7" fill="url(#ys)"/>
<rect x="851.7" y="676.2" width="1.3" height="13.8" fill="url(#ys)"/>
<rect x="861.7" y="676.2" width="2.2" height="13.8" fill="url(#ys)"/>
<rect x="865.6" y="676.2" width="1.4" height="13.8" fill="url(#ys)"/>
<rect x="872.8" y="676.2" width="1.9" height="13.8" fill="url(#ys)"/>
<rect x="881.8" y="676.2" width="2.4" height="13.8" fill="url(#ys)"/>
<rect x="885.0" y="676.2" width="1.1" height="13.8" fill="url(#ys)"/>
<rect x="891.8" y="676.2" width="1.1" height="13.8" fill="url(#ys)"/>
<rect x="894.0" y="676.2" width="2.1" height="13.8" fill="url(#ys)"/>
<rect x="896.8" y="664.3" width="2.4" height="25.7" fill="url(#ys)"/>
<rect x="881.0" y="647.0" width="1.1" height="43.0" fill="url(#ys)"/>
<rect x="895.0" y="676.2" width="1.3" height="13.8" fill="url(#ys)"/>
<rect x="896.9" y="664.3" width="2.1" height="25.7" fill="url(#ys)"/>
<rect x="900.1" y="676.2" width="4.1" height="13.8" fill="url(#ys)"/>
<rect x="904.8" y="676.2" width="2.1" height="13.8" fill="url(#ys)"/>
<rect x="908.0" y="664.3" width="2.1" height="25.7" fill="url(#ys)"/>
<rect x="908.0" y="676.2" width="2.8" height="13.8" fill="url(#ys)"/>
<rect x="914.0" y="676.2" width="4.0" height="13.8" fill="url(#ys)"/>
<rect x="922.7" y="676.2" width="2.4" height="13.8" fill="url(#ys)"/>
<rect x="926.0" y="676.2" width="1.0" height="13.8" fill="url(#ys)"/>
<rect x="928.7" y="676.2" width="1.1" height="13.8" fill="url(#ys)"/>
<rect x="931.1" y="676.2" width="1.9" height="13.8" fill="url(#ys)"/>
<rect x="940.9" y="676.2" width="3.2" height="13.8" fill="url(#ys)"/>
<rect x="952.0" y="676.2" width="1.0" height="13.8" fill="url(#ys)"/>
<rect x="967.0" y="676.2" width="1.1" height="13.8" fill="url(#ys)"/>
<rect x="971.0" y="676.2" width="1.1" height="13.8" fill="url(#ys)"/>
<rect x="973.8" y="676.2" width="1.1" height="13.8" fill="url(#ys)"/>
<rect x="981.0" y="664.3" width="1.1" height="25.7" fill="url(#ys)"/>
<rect x="986.0" y="676.2" width="1.1" height="13.8" fill="url(#ys)"/>
<rect x="995.9" y="676.2" width="4.0" height="13.8" fill="url(#ys)"/>
<rect x="1011.1" y="676.2" width="1.1" height="13.8" fill="url(#ys)"/>
<rect x="1022.9" y="676.2" width="1.1" height="13.8" fill="url(#ys)"/>
<rect x="1026.1" y="664.3" width="1.1" height="25.7" fill="url(#ys)"/>
<rect x="1026.1" y="676.2" width="3.2" height="13.8" fill="url(#ys)"/>
<rect x="1032.7" y="676.2" width="1.3" height="13.8" fill="url(#ys)"/>
<rect x="1034.8" y="664.3" width="2.4" height="25.7" fill="url(#ys)"/>
<rect x="1038.3" y="676.2" width="3.6" height="13.8" fill="url(#ys)"/>
<rect x="1044.9" y="676.2" width="1.0" height="13.8" fill="url(#ys)"/>
<rect x="1062.8" y="676.2" width="1.1" height="13.8" fill="url(#ys)"/>
<rect x="1064.7" y="664.3" width="2.4" height="25.7" fill="url(#ys)"/>
<rect x="1070.0" y="676.2" width="1.1" height="13.8" fill="url(#ys)"/>
<rect x="1075.8" y="676.2" width="2.5" height="13.8" fill="url(#ys)"/>
<rect x="484.1" y="630.3" width="1.6" height="17.4" fill="url(#tg)"/>
<rect x="366.9" y="620.0" width="1.3" height="10.3" fill="url(#tg)"/>
<rect x="372.9" y="620.0" width="1.9" height="10.3" fill="url(#tg)"/>
<rect x="408.9" y="620.0" width="1.0" height="10.3" fill="url(#tg)"/>
<rect x="447.3" y="620.0" width="1.6" height="10.3" fill="url(#tg)"/>
<rect x="456.8" y="620.0" width="1.1" height="10.3" fill="url(#tg)"/>
<rect x="461.1" y="620.0" width="1.0" height="10.3" fill="url(#tg)"/>
<rect x="380.4" y="646.9" width="1.6" height="17.4" fill="url(#tg)"/>
<rect x="509.9" y="630.3" width="1.1" height="34.0" fill="url(#tg)"/>
<rect x="605.0" y="620.0" width="1.1" height="27.7" fill="url(#tg)"/>
<rect x="643.0" y="620.0" width="1.0" height="10.3" fill="url(#tg)"/>
<rect x="667.0" y="620.0" width="2.1" height="10.3" fill="url(#tg)"/>
<rect x="707.1" y="630.3" width="1.1" height="17.4" fill="url(#tg)"/>
<rect x="561.1" y="646.9" width="1.0" height="17.4" fill="url(#tg)"/>
<rect x="650.9" y="646.9" width="1.1" height="17.4" fill="url(#tg)"/>
<rect x="717.1" y="620.0" width="1.0" height="10.3" fill="url(#tg)"/>
<rect x="725.8" y="620.0" width="2.1" height="10.3" fill="url(#tg)"/>
<rect x="739.0" y="630.3" width="1.0" height="17.4" fill="url(#tg)"/>
<rect x="769.8" y="620.0" width="1.1" height="10.3" fill="url(#tg)"/>
<rect x="786.0" y="630.3" width="2.1" height="17.4" fill="url(#tg)"/>
<rect x="835.9" y="620.0" width="1.1" height="10.3" fill="url(#tg)"/>
<rect x="881.0" y="646.9" width="1.1" height="17.4" fill="url(#tg)"/>
<rect x="902.9" y="620.0" width="1.1" height="10.3" fill="url(#tg)"/>
<rect x="925.6" y="620.0" width="1.1" height="44.3" fill="url(#tg)"/>
<rect x="933.0" y="630.3" width="1.0" height="17.4" fill="url(#tg)"/>
<rect x="944.9" y="620.0" width="1.1" height="10.3" fill="url(#tg)"/>
<rect x="954.8" y="620.0" width="1.1" height="10.3" fill="url(#tg)"/>
<rect x="990.0" y="620.0" width="1.9" height="10.3" fill="url(#tg)"/>
<rect x="1043.8" y="630.3" width="1.1" height="34.0" fill="url(#tg)"/>
<rect x="96" y="522" width="1" height="4" fill="#1838f8"/>
<rect x="96" y="526" width="1" height="4" fill="#0814a8"/>
<rect x="96" y="530" width="1" height="5" fill="#1028e0"/>
<rect x="96" y="535" width="1" height="4" fill="#1030e8"/>
<rect x="96" y="539" width="1" height="4" fill="#1028e0"/>
<rect x="96" y="543" width="1" height="5" fill="#1028e0"/>
<rect x="96" y="548" width="1" height="4" fill="#0c20d0"/>
<rect x="96" y="552" width="1" height="4" fill="#1030e8"/>
<rect x="96" y="556" width="1" height="12" fill="#1028e0"/>
<rect x="96" y="568" width="1" height="13" fill="#0c20d0"/>
<rect x="96" y="581" width="1" height="4" fill="#1838f8"/>
<rect x="96" y="568" width="1" height="13" fill="#1030e8"/>
<rect x="96" y="581" width="1" height="4" fill="#1028e0"/>
<rect x="96" y="585" width="1" height="21" fill="url(#cg)"/>
<rect x="97" y="539" width="1" height="4" fill="#1030e8"/>
<rect x="97" y="543" width="1" height="5" fill="#1838f8"/>
<rect x="97" y="548" width="1" height="4" fill="#1034f0"/>
<rect x="97" y="552" width="1" height="4" fill="#1a40ff"/>
<rect x="97" y="556" width="1" height="12" fill="#1028e0"/>
<rect x="97" y="568" width="1" height="13" fill="#1030e8"/>
<rect x="97" y="581" width="1" height="4" fill="#1028e0"/>
<rect x="97" y="585" width="1" height="21" fill="url(#cg)"/>
<rect x="98" y="568" width="1" height="13" fill="#1a40ff"/>
<rect x="98" y="581" width="1" height="4" fill="#1028e0"/>
<rect x="99" y="552" width="1" height="4" fill="#0a18b8"/>
<rect x="99" y="568" width="1" height="13" fill="#1030e8"/>
<rect x="99" y="581" width="1" height="4" fill="#1034f0"/>
<rect x="100" y="530" width="1" height="5" fill="#0c20d0"/>
<rect x="100" y="535" width="1" height="4" fill="#0a18b8"/>
<rect x="100" y="539" width="1" height="4" fill="#1a40ff"/>
<rect x="100" y="543" width="1" height="5" fill="#0c20d0"/>
<rect x="100" y="548" width="1" height="4" fill="#1030e8"/>
<rect x="101" y="530" width="1" height="5" fill="#1034f0"/>
<rect x="101" y="535" width="1" height="4" fill="#1030e8"/>
<rect x="101" y="539" width="1" height="4" fill="#0c20d0"/>
<rect x="101" y="543" width="1" height="5" fill="#1034f0"/>
<rect x="101" y="548" width="1" height="4" fill="#1034f0"/>
<rect x="101" y="552" width="1" height="4" fill="#1034f0"/>
<rect x="101" y="556" width="1" height="12" fill="#0814a8"/>
<rect x="101" y="568" width="1" height="13" fill="#0a18b8"/>
<rect x="102" y="543" width="1" height="5" fill="#1838f8"/>
<rect x="102" y="548" width="1" height="4" fill="#1a40ff"/>
<rect x="102" y="552" width="1" height="4" fill="#0814a8"/>
<rect x="102" y="556" width="1" height="12" fill="#1a40ff"/>
<rect x="102" y="581" width="1" height="4" fill="#0c20d0"/>
<rect x="102" y="552" width="1" height="4" fill="#1034f0"/>
<rect x="104" y="568" width="1" height="13" fill="#1028e0"/>
<rect x="104" y="581" width="1" height="4" fill="#0c20d0"/>
<rect x="104" y="585" width="1" height="21" fill="url(#cg)"/>
<rect x="106" y="568" width="1" height="13" fill="#0c20d0"/>
<rect x="107" y="556" width="1" height="12" fill="#1028e0"/>
<rect x="108" y="568" width="1" height="13" fill="#1030e8"/>
<rect x="109" y="543" width="1" height="5" fill="#0814a8"/>
<rect x="109" y="548" width="1" height="4" fill="#0a18b8"/>
<rect x="109" y="552" width="1" height="4" fill="#0a18b8"/>
<rect x="110" y="530" width="1" height="5" fill="#1034f0"/>
<rect x="110" y="535" width="1" height="4" fill="#1028e0"/>
<rect x="110" y="539" width="1" height="4" fill="#1034f0"/>
<rect x="110" y="543" width="1" height="5" fill="#1a40ff"/>
<rect x="110" y="548" width="1" height="4" fill="#1034f0"/>
<rect x="110" y="552" width="1" height="4" fill="#1034f0"/>
<rect x="110" y="556" width="1" height="12" fill="#1a40ff"/>
<rect x="110" y="568" width="1" height="13" fill="#0a18b8"/>
<rect x="110" y="581" width="1" height="4" fill="#0c20d0"/>
<rect x="111" y="535" width="1" height="4" fill="#1a40ff"/>
<rect x="111" y="539" width="1" height="4" fill="#1034f0"/>
<rect x="111" y="543" width="1" height="5" fill="#0c20d0"/>
<rect x="111" y="548" width="1" height="4" fill="#1838f8"/>
<rect x="111" y="552" width="1" height="4" fill="#1a40ff"/>
<rect x="111" y="556" width="1" height="12" fill="#1030e8"/>
<rect x="111" y="568" width="1" height="13" fill="#1838f8"/>
<rect x="112" y="548" width="1" height="4" fill="#0a18b8"/>
<rect x="112" y="552" width="1" height="4" fill="#0814a8"/>
<rect x="112" y="568" width="1" height="13" fill="#1838f8"/>
<rect x="112" y="581" width="1" height="4" fill="#1030e8"/>
<rect x="113" y="552" width="1" height="4" fill="#1028e0"/>
<rect x="115" y="539" width="1" height="4" fill="#1a40ff"/>
<rect x="115" y="543" width="1" height="5" fill="#0814a8"/>
<rect x="115" y="548" width="1" height="4" fill="#0c20d0"/>
<rect x="115" y="552" width="1" height="4" fill="#1a40ff"/>
<rect x="115" y="556" width="1" height="12" fill="#1028e0"/>
<rect x="115" y="568" width="1" height="13" fill="#0a18b8"/>
<rect x="116" y="526" width="1" height="4" fill="#1030e8"/>
<rect x="116" y="530" width="1" height="5" fill="#0a18b8"/>
<rect x="116" y="535" width="1" height="4" fill="#1028e0"/>
<rect x="116" y="539" width="1" height="4" fill="#1838f8"/>
<rect x="116" y="543" width="1" height="5" fill="#0814a8"/>
<rect x="116" y="548" width="1" height="4" fill="#1030e8"/>
<rect x="116" y="552" width="1" height="4" fill="#1838f8"/>
<rect x="116" y="556" width="1" height="12" fill="#1838f8"/>
<rect x="116" y="552" width="1" height="4" fill="#1030e8"/>
<rect x="119" y="535" width="1" height="4" fill="#1030e8"/>
<rect x="119" y="539" width="1" height="4" fill="#0c20d0"/>
<rect x="119" y="543" width="1" height="5" fill="#0a18b8"/>
<rect x="119" y="548" width="1" height="4" fill="#0c20d0"/>
<rect x="119" y="552" width="1" height="4" fill="#1028e0"/>
<rect x="119" y="556" width="1" height="12" fill="#1034f0"/>
<rect x="119" y="568" width="1" height="13" fill="#0a18b8"/>
<rect x="119" y="581" width="1" height="4" fill="#0814a8"/>
<rect x="120" y="522" width="1" height="4" fill="#1838f8"/>
<rect x="120" y="526" width="1" height="4" fill="#0c20d0"/>
<rect x="120" y="530" width="1" height="5" fill="#0814a8"/>
<rect x="120" y="535" width="1" height="4" fill="#1028e0"/>
<rect x="120" y="539" width="1" height="4" fill="#1034f0"/>
<rect x="120" y="543" width="1" height="5" fill="#1034f0"/>
<rect x="120" y="548" width="1" height="4" fill="#1838f8"/>
<rect x="121" y="556" width="1" height="12" fill="#1030e8"/>
<rect x="122" y="581" width="1" height="4" fill="#1028e0"/>
<rect x="122" y="552" width="1" height="4" fill="#1838f8"/>
<rect x="123" y="568" width="1" height="13" fill="#1030e8"/>
<rect x="124" y="526" width="1" height="4" fill="#1028e0"/>
<rect x="124" y="530" width="1" height="5" fill="#0814a8"/>
<rect x="124" y="535" width="1" height="4" fill="#0814a8"/>
<rect x="124" y="539" width="1" height="4" fill="#0a18b8"/>
<rect x="124" y="543" width="1" height="5" fill="#1838f8"/>
<rect x="124" y="548" width="1" height="4" fill="#1034f0"/>
<rect x="124" y="552" width="1" height="4" fill="#0c20d0"/>
<rect x="124" y="556" width="1" height="12" fill="#1028e0"/>
<rect x="124" y="568" width="1" height="13" fill="#1028e0"/>
<rect x="124" y="585" width="1" height="21" fill="url(#cg)"/>
<rect x="126" y="526" width="1" height="4" fill="#1838f8"/>
<rect x="126" y="530" width="1" height="5" fill="#0814a8"/>
<rect x="126" y="535" width="1" height="4" fill="#1030e8"/>
<rect x="126" y="539" width="1" height="4" fill="#0814a8"/>
<rect x="126" y="543" width="1" height="5" fill="#1030e8"/>
<rect x="126" y="548" width="1" height="4" fill="#1a40ff"/>
<rect x="126" y="552" width="1" height="4" fill="#1a40ff"/>
<rect x="127" y="568" width="1" height="13" fill="#1034f0"/>
<rect x="127" y="581" width="1" height="4" fill="#1028e0"/>
<rect x="127" y="581" width="1" height="4" fill="#0a18b8"/>
<rect x="128" y="568" width="1" height="13" fill="#1034f0"/>
<rect x="128" y="568" width="1" height="13" fill="#1030e8"/>
<rect x="129" y="530" width="1" height="5" fill="#1028e0"/>
<rect x="129" y="535" width="1" height="4" fill="#1030e8"/>
<rect x="129" y="539" width="1" height="4" fill="#1030e8"/>
<rect x="129" y="543" width="1" height="5" fill="#1030e8"/>
<rect x="129" y="548" width="1" height="4" fill="#1838f8"/>
<rect x="129" y="552" width="1" height="4" fill="#1034f0"/>
<rect x="129" y="556" width="1" height="12" fill="#0a18b8"/>
<rect x="130" y="548" width="1" height="4" fill="#1838f8"/>
<rect x="131" y="530" width="1" height="5" fill="#0a18b8"/>
<rect x="131" y="535" width="1" height="4" fill="#1a40ff"/>
<rect x="131" y="539" width="1" height="4" fill="#1838f8"/>
<rect x="131" y="543" width="1" height="5" fill="#1030e8"/>
<rect x="131" y="548" width="1" height="4" fill="#1030e8"/>
<rect x="132" y="522" width="1" height="4" fill="#0c20d0"/>
<rect x="132" y="526" width="1" height="4" fill="#1a40ff"/>
<rect x="132" y="530" width="1" height="5" fill="#1028e0"/>
<rect x="132" y="535" width="1" height="4" fill="#0c20d0"/>
<rect x="132" y="539" width="1" height="4" fill="#1028e0"/>
<rect x="132" y="543" width="1" height="5" fill="#1a40ff"/>
<rect x="132" y="552" width="1" height="4" fill="#1030e8"/>
<rect x="132" y="556" width="1" height="12" fill="#1838f8"/>
<rect x="132" y="568" width="1" height="13" fill="#1a40ff"/>
<rect x="132" y="568" width="1" height="13" fill="#1034f0"/>
<rect x="133" y="535" width="1" height="4" fill="#1838f8"/>
<rect x="133" y="539" width="1" height="4" fill="#0814a8"/>
<rect x="133" y="543" width="1" height="5" fill="#1838f8"/>
<rect x="133" y="548" width="1" height="4" fill="#1838f8"/>
<rect x="133" y="556" width="1" height="12" fill="#1030e8"/>
<rect x="134" y="539" width="1" height="4" fill="#0c20d0"/>
<rect x="134" y="543" width="1" height="5" fill="#1838f8"/>
<rect x="134" y="548" width="1" height="4" fill="#1a40ff"/>
<rect x="134" y="552" width="1" height="4" fill="#0a18b8"/>
<rect x="134" y="556" width="1" height="12" fill="#1034f0"/>
<rect x="134" y="585" width="1" height="21" fill="url(#cg)"/>
<rect x="136" y="581" width="1" height="4" fill="#1034f0"/>
<rect x="137" y="568" width="1" height="13" fill="#1a40ff"/>
<rect x="138" y="530" width="1" height="5" fill="#0c20d0"/>
<rect x="138" y="535" width="1" height="4" fill="#0c20d0"/>
<rect x="138" y="539" width="1" height="4" fill="#1030e8"/>
<rect x="138" y="543" width="1" height="5" fill="#1838f8"/>
<rect x="138" y="548" width="1" height="4" fill="#1838f8"/>
<rect x="139" y="568" width="1" height="13" fill="#1028e0"/>
<rect x="140" y="543" width="1" height="5" fill="#0a18b8"/>
<rect x="140" y="548" width="1" height="4" fill="#1034f0"/>
<rect x="140" y="556" width="1" height="12" fill="#1028e0"/>
<rect x="140" y="568" width="1" height="13" fill="#1838f8"/>
<rect x="140" y="581" width="1" height="4" fill="#1a40ff"/>
<rect x="140" y="556" width="1" height="12" fill="#0c20d0"/>
<rect x="142" y="543" width="1" height="5" fill="#1034f0"/>
<rect x="142" y="548" width="1" height="4" fill="#1a40ff"/>
<rect x="142" y="552" width="1" height="4" fill="#1030e8"/>
<rect x="142" y="556" width="1" height="12" fill="#1028e0"/>
<rect x="142" y="568" width="1" height="13" fill="#1034f0"/>
<rect x="142" y="581" width="1" height="4" fill="#1030e8"/>
<rect x="143" y="552" width="1" height="4" fill="#1838f8"/>
<rect x="145" y="514" width="1" height="8" fill="#0a18b8"/>
<rect x="147" y="568" width="1" height="13" fill="#0c20d0"/>
<rect x="150" y="568" width="1" height="13" fill="#1838f8"/>
<rect x="150" y="585" width="1" height="21" fill="url(#cg)"/>
<rect x="151" y="556" width="1" height="12" fill="#0a18b8"/>
<rect x="153" y="568" width="1" height="13" fill="#0a18b8"/>
<rect x="154" y="535" width="1" height="4" fill="#0814a8"/>
<rect x="154" y="543" width="1" height="5" fill="#0a18b8"/>
<rect x="154" y="548" width="1" height="4" fill="#0814a8"/>
<rect x="154" y="552" width="1" height="4" fill="#1028e0"/>
<rect x="154" y="556" width="1" height="12" fill="#0c20d0"/>
<rect x="154" y="568" width="1" height="13" fill="#0c20d0"/>
<rect x="154" y="581" width="1" height="4" fill="#0814a8"/>
<rect x="154" y="568" width="1" height="13" fill="#1030e8"/>
<rect x="154" y="585" width="1" height="21" fill="url(#cg)"/>
<rect x="155" y="526" width="1" height="4" fill="#1028e0"/>
<rect x="155" y="535" width="1" height="4" fill="#1034f0"/>
<rect x="155" y="539" width="1" height="4" fill="#1028e0"/>
<rect x="155" y="543" width="1" height="5" fill="#1838f8"/>
<rect x="155" y="556" width="1" height="12" fill="#0c20d0"/>
<rect x="155" y="568" width="1" height="13" fill="#0814a8"/>
<rect x="157" y="581" width="1" height="4" fill="#1838f8"/>
<rect x="158" y="535" width="1" height="4" fill="#1030e8"/>
<rect x="158" y="539" width="1" height="4" fill="#0814a8"/>
<rect x="158" y="543" width="1" height="5" fill="#1030e8"/>
<rect x="158" y="548" width="1" height="4" fill="#1030e8"/>
<rect x="158" y="514" width="1" height="8" fill="#1838f8"/>
<rect x="160" y="568" width="1" height="13" fill="#0c20d0"/>
<rect x="160" y="581" width="1" height="4" fill="#0a18b8"/>
<rect x="162" y="526" width="1" height="4" fill="#0a18b8"/>
<rect x="162" y="530" width="1" height="5" fill="#1028e0"/>
<rect x="162" y="535" width="1" height="4" fill="#0a18b8"/>
<rect x="162" y="539" width="1" height="4" fill="#1028e0"/>
<rect x="162" y="543" width="1" height="5" fill="#1838f8"/>
<rect x="162" y="548" width="1" height="4" fill="#0a18b8"/>
<rect x="162" y="556" width="1" height="12" fill="#1030e8"/>
<rect x="163" y="585" width="1" height="21" fill="url(#cg)"/>
<rect x="164" y="568" width="1" height="13" fill="#1030e8"/>
<rect x="166" y="556" width="1" height="12" fill="#0814a8"/>
<rect x="166" y="568" width="1" height="13" fill="#1030e8"/>
<rect x="166" y="581" width="1" height="4" fill="#0c20d0"/>
<rect x="168" y="526" width="1" height="4" fill="#1030e8"/>
<rect x="168" y="530" width="1" height="5" fill="#0a18b8"/>
<rect x="168" y="535" width="1" height="4" fill="#0814a8"/>
<rect x="168" y="539" width="1" height="4" fill="#1028e0"/>
<rect x="168" y="543" width="1" height="5" fill="#0814a8"/>
<rect x="168" y="548" width="1" height="4" fill="#1028e0"/>
<rect x="168" y="552" width="1" height="4" fill="#1838f8"/>
<rect x="168" y="556" width="1" height="12" fill="#0a18b8"/>
<rect x="168" y="556" width="1" height="12" fill="#0a18b8"/>
<rect x="169" y="535" width="1" height="4" fill="#1034f0"/>
<rect x="169" y="539" width="1" height="4" fill="#0814a8"/>
<rect x="169" y="548" width="1" height="4" fill="#1028e0"/>
<rect x="169" y="552" width="1" height="4" fill="#1030e8"/>
<rect x="169" y="556" width="1" height="12" fill="#0a18b8"/>
<rect x="169" y="568" width="1" height="13" fill="#0814a8"/>
<rect x="169" y="556" width="1" height="12" fill="#1028e0"/>
<rect x="169" y="581" width="1" height="4" fill="#0c20d0"/>
<rect x="170" y="552" width="1" height="4" fill="#0a18b8"/>
<rect x="170" y="556" width="1" height="12" fill="#1034f0"/>
<rect x="171" y="581" width="1" height="4" fill="#0a18b8"/>
<rect x="175" y="556" width="1" height="12" fill="#1a40ff"/>
<rect x="175" y="568" width="1" height="13" fill="#1838f8"/>
<rect x="175" y="581" width="1" height="4" fill="#1a40ff"/>
<rect x="175" y="568" width="1" height="13" fill="#1028e0"/>
<rect x="175" y="585" width="1" height="21" fill="url(#cg)"/>
<rect x="177" y="568" width="1" height="13" fill="#1030e8"/>
<rect x="177" y="552" width="1" height="4" fill="#0814a8"/>
<rect x="177" y="585" width="1" height="21" fill="url(#cg)"/>
<rect x="179" y="581" width="1" height="4" fill="#0a18b8"/>
<rect x="180" y="556" width="1" height="12" fill="#1a40ff"/>
<rect x="180" y="581" width="1" height="4" fill="#1028e0"/>
<rect x="184" y="539" width="1" height="4" fill="#1838f8"/>
<rect x="184" y="543" width="1" height="5" fill="#1028e0"/>
<rect x="184" y="548" width="1" height="4" fill="#1838f8"/>
<rect x="184" y="552" width="1" height="4" fill="#1034f0"/>
<rect x="184" y="556" width="1" height="12" fill="#1028e0"/>
<rect x="184" y="568" width="1" height="13" fill="#1034f0"/>
<rect x="184" y="581" width="1" height="4" fill="#1034f0"/>
<rect x="184" y="556" width="1" height="12" fill="#0a18b8"/>
<rect x="186" y="568" width="1" height="13" fill="#0a18b8"/>
<rect x="187" y="552" width="1" height="4" fill="#0c20d0"/>
<rect x="189" y="539" width="1" height="4" fill="#1030e8"/>
<rect x="189" y="543" width="1" height="5" fill="#1028e0"/>
<rect x="189" y="548" width="1" height="4" fill="#1034f0"/>
<rect x="189" y="552" width="1" height="4" fill="#1a40ff"/>
<rect x="189" y="556" width="1" height="12" fill="#1028e0"/>
<rect x="189" y="568" width="1" height="13" fill="#0814a8"/>
<rect x="189" y="581" width="1" height="4" fill="#1028e0"/>
<rect x="189" y="581" width="1" height="4" fill="#1034f0"/>
<rect x="189" y="585" width="1" height="21" fill="url(#cg)"/>
<rect x="192" y="548" width="1" height="4" fill="#1030e8"/>
<rect x="192" y="556" width="1" height="12" fill="#0c20d0"/>
<rect x="192" y="568" width="1" height="13" fill="#0814a8"/>
<rect x="192" y="581" width="1" height="4" fill="#1a40ff"/>
<rect x="192" y="581" width="1" height="4" fill="#0814a8"/>
<rect x="193" y="522" width="1" height="4" fill="#0814a8"/>
<rect x="193" y="526" width="1" height="4" fill="#1a40ff"/>
<rect x="193" y="530" width="1" height="5" fill="#1a40ff"/>
<rect x="193" y="535" width="1" height="4" fill="#0a18b8"/>
<rect x="193" y="539" width="1" height="4" fill="#0a18b8"/>
<rect x="193" y="543" width="1" height="5" fill="#0c20d0"/>
<rect x="193" y="548" width="1" height="4" fill="#1838f8"/>
<rect x="193" y="552" width="1" height="4" fill="#1030e8"/>
<rect x="193" y="556" width="1" height="12" fill="#0814a8"/>
<rect x="193" y="568" width="1" height="13" fill="#1a40ff"/>
<rect x="193" y="585" width="1" height="21" fill="url(#cg)"/>
<rect x="197" y="548" width="1" height="4" fill="#1030e8"/>
<rect x="197" y="552" width="1" height="4" fill="#0c20d0"/>
<rect x="197" y="556" width="1" height="12" fill="#0c20d0"/>
<rect x="197" y="568" width="1" height="13" fill="#1030e8"/>
<rect x="197" y="581" width="1" height="4" fill="#1030e8"/>
<rect x="198" y="552" width="1" height="4" fill="#0a18b8"/>
<rect x="200" y="530" width="1" height="5" fill="#1030e8"/>
<rect x="200" y="535" width="1" height="4" fill="#0c20d0"/>
<rect x="200" y="539" width="1" height="4" fill="#1838f8"/>
<rect x="200" y="543" width="1" height="5" fill="#1a40ff"/>
<rect x="200" y="548" width="1" height="4" fill="#1028e0"/>
<rect x="200" y="552" width="1" height="4" fill="#1838f8"/>
<rect x="200" y="556" width="1" height="12" fill="#1a40ff"/>
<rect x="200" y="568" width="1" height="13" fill="#0a18b8"/>
<rect x="201" y="568" width="1" height="13" fill="#0c20d0"/>
<rect x="202" y="556" width="1" height="12" fill="#0a18b8"/>
<rect x="210" y="522" width="1" height="4" fill="#0a18b8"/>
<rect x="210" y="526" width="1" height="4" fill="#1838f8"/>
<rect x="210" y="530" width="1" height="5" fill="#1838f8"/>
<rect x="210" y="535" width="1" height="4" fill="#1030e8"/>
<rect x="210" y="543" width="1" height="5" fill="#1030e8"/>
<rect x="210" y="548" width="1" height="4" fill="#1028e0"/>
<rect x="210" y="552" width="1" height="4" fill="#0c20d0"/>
<rect x="210" y="556" width="1" height="12" fill="#0814a8"/>
<rect x="210" y="568" width="1" height="13" fill="#1838f8"/>
<rect x="210" y="581" width="1" height="4" fill="#1034f0"/>
<rect x="214" y="548" width="1" height="4" fill="#0a18b8"/>
<rect x="214" y="556" width="1" height="12" fill="#1838f8"/>
<rect x="215" y="535" width="1" height="4" fill="#0814a8"/>
<rect x="215" y="539" width="1" height="4" fill="#0a18b8"/>
<rect x="215" y="543" width="1" height="5" fill="#0a18b8"/>
<rect x="215" y="548" width="1" height="4" fill="#0c20d0"/>
<rect x="215" y="552" width="1" height="4" fill="#0a18b8"/>
<rect x="218" y="548" width="1" height="4" fill="#1838f8"/>
<rect x="218" y="552" width="1" height="4" fill="#1030e8"/>
<rect x="218" y="568" width="1" height="13" fill="#1a40ff"/>
<rect x="220" y="568" width="1" height="13" fill="#0c20d0"/>
<rect x="221" y="556" width="1" height="12" fill="#0c20d0"/>
<rect x="222" y="581" width="1" height="4" fill="#1838f8"/>
<rect x="223" y="530" width="1" height="5" fill="#1034f0"/>
<rect x="223" y="535" width="1" height="4" fill="#0c20d0"/>
<rect x="223" y="539" width="1" height="4" fill="#1028e0"/>
<rect x="223" y="543" width="1" height="5" fill="#1a40ff"/>
<rect x="223" y="548" width="1" height="4" fill="#0c20d0"/>
<rect x="223" y="568" width="1" height="13" fill="#1a40ff"/>
<rect x="225" y="568" width="1" height="13" fill="#1034f0"/>
<rect x="226" y="568" width="1" height="13" fill="#0814a8"/>
<rect x="229" y="568" width="1" height="13" fill="#0814a8"/>
<rect x="229" y="568" width="1" height="13" fill="#0a18b8"/>
<rect x="230" y="568" width="1" height="13" fill="#1034f0"/>
<rect x="231" y="543" width="1" height="5" fill="#0a18b8"/>
<rect x="233" y="568" width="1" height="13" fill="#1028e0"/>
<rect x="235" y="556" width="1" height="12" fill="#1a40ff"/>
<rect x="235" y="568" width="1" height="13" fill="#0a18b8"/>
<rect x="235" y="581" width="1" height="4" fill="#1838f8"/>
<rect x="236" y="548" width="1" height="4" fill="#1034f0"/>
<rect x="236" y="552" width="1" height="4" fill="#1028e0"/>
<rect x="236" y="568" width="1" height="13" fill="#1030e8"/>
<rect x="237" y="530" width="1" height="5" fill="#1034f0"/>
<rect x="237" y="535" width="1" height="4" fill="#0c20d0"/>
<rect x="237" y="539" width="1" height="4" fill="#1034f0"/>
<rect x="237" y="543" width="1" height="5" fill="#0a18b8"/>
<rect x="237" y="548" width="1" height="4" fill="#1838f8"/>
<rect x="237" y="552" width="1" height="4" fill="#1a40ff"/>
<rect x="237" y="556" width="1" height="12" fill="#1838f8"/>
<rect x="238" y="552" width="1" height="4" fill="#0c20d0"/>
<rect x="239" y="552" width="1" height="4" fill="#1030e8"/>
<rect x="239" y="556" width="1" height="12" fill="#0c20d0"/>
<rect x="239" y="568" width="1" height="13" fill="#1838f8"/>
<rect x="239" y="581" width="1" height="4" fill="#1a40ff"/>
<rect x="240" y="556" width="1" height="12" fill="#0c20d0"/>
<rect x="241" y="556" width="1" height="12" fill="#1034f0"/>
<rect x="243" y="543" width="1" height="5" fill="#0814a8"/>
<rect x="243" y="548" width="1" height="4" fill="#1030e8"/>
<rect x="243" y="552" width="1" height="4" fill="#1a40ff"/>
<rect x="243" y="556" width="1" height="12" fill="#0c20d0"/>
<rect x="243" y="568" width="1" height="13" fill="#1030e8"/>
<rect x="245" y="526" width="1" height="4" fill="#0a18b8"/>
<rect x="245" y="530" width="1" height="5" fill="#0814a8"/>
<rect x="245" y="535" width="1" height="4" fill="#1838f8"/>
<rect x="245" y="543" width="1" height="5" fill="#1a40ff"/>
<rect x="245" y="552" width="1" height="4" fill="#1838f8"/>
<rect x="245" y="556" width="1" height="12" fill="#0c20d0"/>
<rect x="245" y="568" width="1" height="13" fill="#0814a8"/>
<rect x="245" y="581" width="1" height="4" fill="#1838f8"/>
<rect x="245" y="552" width="1" height="4" fill="#0814a8"/>
<rect x="245" y="585" width="1" height="21" fill="url(#cg)"/>
<rect x="247" y="522" width="1" height="4" fill="#1a40ff"/>
<rect x="247" y="526" width="1" height="4" fill="#1034f0"/>
<rect x="247" y="530" width="1" height="5" fill="#1034f0"/>
<rect x="247" y="535" width="1" height="4" fill="#1838f8"/>
<rect x="247" y="539" width="1" height="4" fill="#1030e8"/>
<rect x="247" y="543" width="1" height="5" fill="#0c20d0"/>
<rect x="247" y="548" width="1" height="4" fill="#1838f8"/>
<rect x="247" y="552" width="1" height="4" fill="#0c20d0"/>
<rect x="247" y="556" width="1" height="12" fill="#1028e0"/>
<rect x="250" y="535" width="1" height="4" fill="#0c20d0"/>
<rect x="250" y="539" width="1" height="4" fill="#0814a8"/>
<rect x="250" y="543" width="1" height="5" fill="#0c20d0"/>
<rect x="250" y="548" width="1" height="4" fill="#1034f0"/>
<rect x="250" y="581" width="1" height="4" fill="#1028e0"/>
<rect x="251" y="543" width="1" height="5" fill="#1034f0"/>
<rect x="251" y="548" width="1" height="4" fill="#1028e0"/>
<rect x="251" y="552" width="1" height="4" fill="#0c20d0"/>
<rect x="251" y="556" width="1" height="12" fill="#1a40ff"/>
<rect x="251" y="568" width="1" height="13" fill="#1a40ff"/>
<rect x="251" y="581" width="1" height="4" fill="#0a18b8"/>
<rect x="253" y="552" width="1" height="4" fill="#1034f0"/>
<rect x="254" y="568" width="1" height="13" fill="#0814a8"/>
<rect x="256" y="548" width="1" height="4" fill="#1a40ff"/>
<rect x="256" y="552" width="1" height="4" fill="#1030e8"/>
<rect x="256" y="556" width="1" height="12" fill="#1030e8"/>
<rect x="256" y="568" width="1" height="13" fill="#1030e8"/>
<rect x="256" y="581" width="1" height="4" fill="#0814a8"/>
<rect x="258" y="535" width="1" height="4" fill="#0c20d0"/>
<rect x="258" y="539" width="1" height="4" fill="#1a40ff"/>
<rect x="258" y="543" width="1" height="5" fill="#0a18b8"/>
<rect x="258" y="548" width="1" height="4" fill="#1028e0"/>
<rect x="258" y="552" width="1" height="4" fill="#1a40ff"/>
<rect x="258" y="556" width="1" height="12" fill="#1a40ff"/>
<rect x="258" y="568" width="1" height="13" fill="#1030e8"/>
<rect x="258" y="556" width="1" height="12" fill="#1030e8"/>
<rect x="258" y="585" width="1" height="21" fill="url(#cg)"/>
<rect x="260" y="568" width="1" height="13" fill="#0814a8"/>
<rect x="262" y="568" width="1" height="13" fill="#1838f8"/>
<rect x="262" y="568" width="1" height="13" fill="#0a18b8"/>
<rect x="266" y="568" width="1" height="13" fill="#1a40ff"/>
<rect x="267" y="543" width="1" height="5" fill="#1028e0"/>
<rect x="267" y="552" width="1" height="4" fill="#0814a8"/>
<rect x="267" y="556" width="1" height="12" fill="#0c20d0"/>
<rect x="267" y="568" width="1" height="13" fill="#0814a8"/>
<rect x="268" y="552" width="1" height="4" fill="#0a18b8"/>
<rect x="268" y="556" width="1" height="12" fill="#1838f8"/>
<rect x="268" y="568" width="1" height="13" fill="#0c20d0"/>
<rect x="268" y="514" width="1" height="8" fill="#1028e0"/>
<rect x="269" y="552" width="1" height="4" fill="#1a40ff"/>
<rect x="269" y="556" width="1" height="12" fill="#0814a8"/>
<rect x="269" y="514" width="1" height="8" fill="#1838f8"/>
<rect x="270" y="556" width="1" height="12" fill="#0a18b8"/>
<rect x="273" y="535" width="1" height="4" fill="#1030e8"/>
<rect x="273" y="543" width="1" height="5" fill="#1034f0"/>
<rect x="273" y="552" width="1" height="4" fill="#0a18b8"/>
<rect x="273" y="556" width="1" height="12" fill="#0a18b8"/>
<rect x="273" y="568" width="1" height="13" fill="#1034f0"/>
<rect x="274" y="543" width="1" height="5" fill="#1838f8"/>
<rect x="274" y="548" width="1" height="4" fill="#1028e0"/>
<rect x="274" y="552" width="1" height="4" fill="#0814a8"/>
<rect x="274" y="556" width="1" height="12" fill="#0814a8"/>
<rect x="274" y="581" width="1" height="4" fill="#0c20d0"/>
<rect x="274" y="581" width="1" height="4" fill="#1028e0"/>
<rect x="275" y="548" width="1" height="4" fill="#1028e0"/>
<rect x="275" y="552" width="1" height="4" fill="#0a18b8"/>
<rect x="275" y="568" width="1" height="13" fill="#1838f8"/>
<rect x="275" y="581" width="1" height="4" fill="#1a40ff"/>
<rect x="275" y="585" width="1" height="21" fill="url(#cg)"/>
<rect x="276" y="556" width="1" height="12" fill="#1838f8"/>
<rect x="276" y="568" width="1" height="13" fill="#0c20d0"/>
<rect x="280" y="535" width="1" height="4" fill="#0a18b8"/>
<rect x="280" y="539" width="1" height="4" fill="#0c20d0"/>
<rect x="280" y="543" width="1" height="5" fill="#1034f0"/>
<rect x="280" y="548" width="1" height="4" fill="#0814a8"/>
<rect x="280" y="552" width="1" height="4" fill="#1838f8"/>
<rect x="280" y="556" width="1" height="12" fill="#0c20d0"/>
<rect x="280" y="585" width="1" height="21" fill="url(#cg)"/>
<rect x="282" y="535" width="1" height="4" fill="#1a40ff"/>
<rect x="282" y="539" width="1" height="4" fill="#0a18b8"/>
<rect x="282" y="543" width="1" height="5" fill="#0814a8"/>
<rect x="282" y="548" width="1" height="4" fill="#1034f0"/>
<rect x="282" y="552" width="1" height="4" fill="#1034f0"/>
<rect x="282" y="556" width="1" height="12" fill="#1030e8"/>
<rect x="282" y="568" width="1" height="13" fill="#1034f0"/>
<rect x="282" y="556" width="1" height="12" fill="#0814a8"/>
<rect x="284" y="530" width="1" height="5" fill="#1028e0"/>
<rect x="284" y="535" width="1" height="4" fill="#1028e0"/>
<rect x="284" y="539" width="1" height="4" fill="#0814a8"/>
<rect x="284" y="548" width="1" height="4" fill="#1034f0"/>
<rect x="284" y="568" width="1" height="13" fill="#1034f0"/>
<rect x="284" y="581" width="1" height="4" fill="#1030e8"/>
<rect x="285" y="568" width="1" height="13" fill="#1a40ff"/>
<rect x="285" y="581" width="1" height="4" fill="#1028e0"/>
<rect x="285" y="581" width="1" height="4" fill="#0a18b8"/>
<rect x="286" y="581" width="1" height="4" fill="#0c20d0"/>
<rect x="288" y="568" width="1" height="13" fill="#0a18b8"/>
<rect x="294" y="530" width="1" height="5" fill="#1a40ff"/>
<rect x="294" y="539" width="1" height="4" fill="#0a18b8"/>
<rect x="294" y="543" width="1" height="5" fill="#1030e8"/>
<rect x="294" y="548" width="1" height="4" fill="#1a40ff"/>
<rect x="294" y="552" width="1" height="4" fill="#0814a8"/>
<rect x="295" y="556" width="1" height="12" fill="#1034f0"/>
<rect x="297" y="568" width="1" height="13" fill="#1a40ff"/>
<rect x="298" y="568" width="1" height="13" fill="#0a18b8"/>
<rect x="298" y="568" width="1" height="13" fill="#1a40ff"/>
<rect x="300" y="581" width="1" height="4" fill="#1028e0"/>
<rect x="301" y="535" width="1" height="4" fill="#1838f8"/>
<rect x="301" y="539" width="1" height="4" fill="#1030e8"/>
<rect x="301" y="543" width="1" height="5" fill="#1838f8"/>
<rect x="301" y="548" width="1" height="4" fill="#0c20d0"/>
<rect x="301" y="552" width="1" height="4" fill="#1838f8"/>
<rect x="302" y="535" width="1" height="4" fill="#1a40ff"/>
<rect x="302" y="543" width="1" height="5" fill="#1034f0"/>
<rect x="302" y="548" width="1" height="4" fill="#0c20d0"/>
<rect x="302" y="556" width="1" height="12" fill="#0814a8"/>
<rect x="302" y="568" width="1" height="13" fill="#0c20d0"/>
<rect x="302" y="568" width="1" height="13" fill="#1030e8"/>
<rect x="304" y="530" width="1" height="5" fill="#0814a8"/>
<rect x="304" y="535" width="1" height="4" fill="#1030e8"/>
<rect x="304" y="539" width="1" height="4" fill="#1030e8"/>
<rect x="304" y="543" width="1" height="5" fill="#1028e0"/>
<rect x="304" y="548" width="1" height="4" fill="#1838f8"/>
<rect x="304" y="556" width="1" height="12" fill="#1838f8"/>
<rect x="305" y="568" width="1" height="13" fill="#1034f0"/>
<rect x="306" y="568" width="1" height="13" fill="#1838f8"/>
<rect x="306" y="581" width="1" height="4" fill="#0814a8"/>
<rect x="307" y="552" width="1" height="4" fill="#0814a8"/>
<rect x="307" y="568" width="1" height="13" fill="#1028e0"/>
<rect x="309" y="556" width="1" height="12" fill="#1838f8"/>
<rect x="310" y="568" width="1" height="13" fill="#1a40ff"/>
<rect x="310" y="568" width="1" height="13" fill="#1030e8"/>
<rect x="311" y="568" width="1" height="13" fill="#1028e0"/>
<rect x="311" y="585" width="1" height="21" fill="url(#cg)"/>
<rect x="313" y="556" width="1" height="12" fill="#0814a8"/>
<rect x="313" y="568" width="1" height="13" fill="#1030e8"/>
<rect x="313" y="581" width="1" height="4" fill="#0a18b8"/>
<rect x="313" y="585" width="1" height="21" fill="url(#cg)"/>
<rect x="314" y="556" width="1" height="12" fill="#1838f8"/>
<rect x="314" y="556" width="1" height="12" fill="#1030e8"/>
<rect x="314" y="585" width="1" height="21" fill="url(#cg)"/>
<rect x="315" y="522" width="1" height="4" fill="#0814a8"/>
<rect x="315" y="530" width="1" height="5" fill="#0c20d0"/>
<rect x="315" y="535" width="1" height="4" fill="#1a40ff"/>
<rect x="315" y="539" width="1" height="4" fill="#0a18b8"/>
<rect x="315" y="543" width="1" height="5" fill="#1030e8"/>
<rect x="315" y="548" width="1" height="4" fill="#1034f0"/>
<rect x="315" y="552" width="1" height="4" fill="#1a40ff"/>
<rect x="315" y="556" width="1" height="12" fill="#1030e8"/>
<rect x="315" y="568" width="1" height="13" fill="#1030e8"/>
<rect x="315" y="581" width="1" height="4" fill="#0a18b8"/>
<rect x="317" y="556" width="1" height="12" fill="#1034f0"/>
<rect x="318" y="556" width="1" height="12" fill="#0814a8"/>
<rect x="319" y="539" width="1" height="4" fill="#0a18b8"/>
<rect x="319" y="543" width="1" height="5" fill="#1838f8"/>
<rect x="319" y="548" width="1" height="4" fill="#1a40ff"/>
<rect x="319" y="552" width="1" height="4" fill="#1030e8"/>
<rect x="319" y="556" width="1" height="12" fill="#1030e8"/>
<rect x="319" y="568" width="1" height="13" fill="#1028e0"/>
<rect x="319" y="581" width="1" height="4" fill="#0814a8"/>
<rect x="319" y="556" width="1" height="12" fill="#1034f0"/>
<rect x="320" y="556" width="1" height="12" fill="#1838f8"/>
<rect x="320" y="568" width="1" height="13" fill="#1838f8"/>
<rect x="320" y="581" width="1" height="4" fill="#1a40ff"/>
<rect x="321" y="568" width="1" height="13" fill="#1838f8"/>
<rect x="321" y="585" width="1" height="21" fill="url(#cg)"/>
<rect x="322" y="568" width="1" height="13" fill="#0a18b8"/>
<rect x="323" y="526" width="1" height="4" fill="#0c20d0"/>
<rect x="323" y="530" width="1" height="5" fill="#1034f0"/>
<rect x="323" y="535" width="1" height="4" fill="#0814a8"/>
<rect x="323" y="539" width="1" height="4" fill="#1034f0"/>
<rect x="323" y="543" width="1" height="5" fill="#0814a8"/>
<rect x="323" y="548" width="1" height="4" fill="#1028e0"/>
<rect x="323" y="552" width="1" height="4" fill="#1838f8"/>
<rect x="323" y="556" width="1" height="12" fill="#1028e0"/>
<rect x="323" y="568" width="1" height="13" fill="#0c20d0"/>
<rect x="323" y="581" width="1" height="4" fill="#1034f0"/>
<rect x="323" y="552" width="1" height="4" fill="#1838f8"/>
<rect x="324" y="568" width="1" height="13" fill="#0814a8"/>
<rect x="324" y="581" width="1" height="4" fill="#1a40ff"/>
<rect x="324" y="552" width="1" height="4" fill="#0c20d0"/>
<rect x="324" y="585" width="1" height="21" fill="url(#cg)"/>
<rect x="325" y="568" width="1" height="13" fill="#1a40ff"/>
<rect x="326" y="539" width="1" height="4" fill="#1838f8"/>
<rect x="326" y="543" width="1" height="5" fill="#1028e0"/>
<rect x="326" y="552" width="1" height="4" fill="#0814a8"/>
<rect x="326" y="556" width="1" height="12" fill="#1a40ff"/>
<rect x="326" y="568" width="1" height="13" fill="#1838f8"/>
<rect x="329" y="581" width="1" height="4" fill="#0a18b8"/>
<rect x="330" y="530" width="1" height="5" fill="#1030e8"/>
<rect x="330" y="535" width="1" height="4" fill="#1034f0"/>
<rect x="330" y="539" width="1" height="4" fill="#0814a8"/>
<rect x="330" y="543" width="1" height="5" fill="#0a18b8"/>
<rect x="330" y="548" width="1" height="4" fill="#1838f8"/>
<rect x="330" y="552" width="1" height="4" fill="#1838f8"/>
<rect x="330" y="556" width="1" height="12" fill="#1034f0"/>
<rect x="330" y="568" width="1" height="13" fill="#1028e0"/>
<rect x="330" y="514" width="1" height="8" fill="#1028e0"/>
<rect x="330" y="585" width="1" height="21" fill="url(#cg)"/>
<rect x="331" y="585" width="1" height="21" fill="url(#cg)"/>
<rect x="332" y="543" width="1" height="5" fill="#1030e8"/>
<rect x="332" y="548" width="1" height="4" fill="#1030e8"/>
<rect x="332" y="552" width="1" height="4" fill="#0814a8"/>
<rect x="332" y="556" width="1" height="12" fill="#0a18b8"/>
<rect x="332" y="568" width="1" height="13" fill="#0c20d0"/>
<rect x="335" y="568" width="1" height="13" fill="#1034f0"/>
<rect x="336" y="556" width="1" height="12" fill="#0814a8"/>
<rect x="336" y="585" width="1" height="21" fill="url(#cg)"/>
<rect x="339" y="556" width="1" height="12" fill="#1034f0"/>
<rect x="341" y="552" width="1" height="4" fill="#1030e8"/>
<rect x="344" y="535" width="1" height="4" fill="#0a18b8"/>
<rect x="344" y="539" width="1" height="4" fill="#1028e0"/>
<rect x="344" y="543" width="1" height="5" fill="#1030e8"/>
<rect x="344" y="548" width="1" height="4" fill="#1030e8"/>
<rect x="344" y="552" width="1" height="4" fill="#1030e8"/>
<rect x="344" y="556" width="1" height="12" fill="#0a18b8"/>
<rect x="347" y="552" width="1" height="4" fill="#1034f0"/>
<rect x="348" y="556" width="1" height="12" fill="#0814a8"/>
<rect x="348" y="568" width="1" height="13" fill="#1030e8"/>
<rect x="348" y="568" width="1" height="13" fill="#1028e0"/>
<rect x="349" y="556" width="1" height="12" fill="#0814a8"/>
<rect x="349" y="556" width="1" height="12" fill="#1030e8"/>
<rect x="352" y="568" width="1" height="13" fill="#1028e0"/>
<rect x="353" y="535" width="1" height="4" fill="#0c20d0"/>
<rect x="353" y="539" width="1" height="4" fill="#1028e0"/>
<rect x="353" y="543" width="1" height="5" fill="#0c20d0"/>
<rect x="353" y="548" width="1" height="4" fill="#0814a8"/>
<rect x="353" y="552" width="1" height="4" fill="#0c20d0"/>
<rect x="353" y="556" width="1" height="12" fill="#1838f8"/>
<rect x="353" y="568" width="1" height="13" fill="#1028e0"/>
<rect x="354" y="556" width="1" height="12" fill="#1028e0"/>
<rect x="354" y="568" width="1" height="13" fill="#1030e8"/>
<rect x="355" y="522" width="1" height="4" fill="#1a40ff"/>
<rect x="355" y="526" width="1" height="4" fill="#1838f8"/>
<rect x="355" y="530" width="1" height="5" fill="#0c20d0"/>
<rect x="355" y="535" width="1" height="4" fill="#1034f0"/>
<rect x="355" y="539" width="1" height="4" fill="#0a18b8"/>
<rect x="355" y="543" width="1" height="5" fill="#1838f8"/>
<rect x="355" y="548" width="1" height="4" fill="#1028e0"/>
<rect x="355" y="552" width="1" height="4" fill="#0814a8"/>
<rect x="355" y="556" width="1" height="12" fill="#1030e8"/>
<rect x="355" y="568" width="1" height="13" fill="#1838f8"/>
<rect x="355" y="581" width="1" height="4" fill="#0c20d0"/>
<rect x="355" y="568" width="1" height="13" fill="#1028e0"/>
<rect x="355" y="585" width="1" height="21" fill="url(#cg)"/>
<rect x="356" y="535" width="1" height="4" fill="#1028e0"/>
<rect x="356" y="539" width="1" height="4" fill="#0814a8"/>
<rect x="356" y="543" width="1" height="5" fill="#1034f0"/>
<rect x="356" y="548" width="1" height="4" fill="#0814a8"/>
<rect x="356" y="552" width="1" height="4" fill="#0c20d0"/>
<rect x="356" y="556" width="1" height="12" fill="#1034f0"/>
<rect x="356" y="568" width="1" height="13" fill="#0c20d0"/>
<rect x="357" y="535" width="1" height="4" fill="#1030e8"/>
<rect x="357" y="539" width="1" height="4" fill="#0c20d0"/>
<rect x="357" y="543" width="1" height="5" fill="#1034f0"/>
<rect x="357" y="548" width="1" height="4" fill="#1034f0"/>
<rect x="357" y="552" width="1" height="4" fill="#1030e8"/>
<rect x="357" y="556" width="1" height="12" fill="#1838f8"/>
<rect x="358" y="522" width="1" height="4" fill="#0814a8"/>
<rect x="358" y="526" width="1" height="4" fill="#0a18b8"/>
<rect x="358" y="530" width="1" height="5" fill="#0814a8"/>
<rect x="358" y="535" width="1" height="4" fill="#0a18b8"/>
<rect x="358" y="543" width="1" height="5" fill="#1a40ff"/>
<rect x="358" y="548" width="1" height="4" fill="#0a18b8"/>
<rect x="358" y="552" width="1" height="4" fill="#1838f8"/>
<rect x="358" y="556" width="1" height="12" fill="#1030e8"/>
<rect x="358" y="568" width="1" height="13" fill="#1034f0"/>
<rect x="358" y="581" width="1" height="4" fill="#0a18b8"/>
<rect x="359" y="543" width="1" height="5" fill="#0814a8"/>
<rect x="359" y="548" width="1" height="4" fill="#0814a8"/>
<rect x="359" y="552" width="1" height="4" fill="#1028e0"/>
<rect x="359" y="556" width="1" height="12" fill="#1a40ff"/>
<rect x="361" y="552" width="1" height="4" fill="#0c20d0"/>
<rect x="361" y="556" width="1" height="12" fill="#1034f0"/>
<rect x="361" y="568" width="1" height="13" fill="#1028e0"/>
<rect x="361" y="581" width="1" height="4" fill="#1030e8"/>
<rect x="361" y="585" width="1" height="21" fill="url(#cg)"/>
<rect x="362" y="568" width="1" height="13" fill="#1030e8"/>
<rect x="362" y="581" width="1" height="4" fill="#0814a8"/>
<rect x="362" y="568" width="1" height="13" fill="#1030e8"/>
<rect x="363" y="543" width="1" height="5" fill="#1034f0"/>
<rect x="363" y="548" width="1" height="4" fill="#0c20d0"/>
<rect x="363" y="556" width="1" height="12" fill="#1a40ff"/>
<rect x="363" y="568" width="1" height="13" fill="#0c20d0"/>
<rect x="363" y="581" width="1" height="4" fill="#1838f8"/>
<rect x="363" y="514" width="1" height="8" fill="#1838f8"/>
<rect x="363" y="568" width="1" height="13" fill="#1838f8"/>
<rect x="365" y="526" width="1" height="4" fill="#1838f8"/>
<rect x="365" y="530" width="1" height="5" fill="#0a18b8"/>
<rect x="365" y="535" width="1" height="4" fill="#0a18b8"/>
<rect x="365" y="539" width="1" height="4" fill="#1030e8"/>
<rect x="365" y="548" width="1" height="4" fill="#0a18b8"/>
<rect x="365" y="556" width="1" height="12" fill="#0a18b8"/>
<rect x="365" y="568" width="1" height="13" fill="#1028e0"/>
<rect x="365" y="581" width="1" height="4" fill="#1a40ff"/>
<rect x="365" y="585" width="1" height="21" fill="url(#cg)"/>
<rect x="367" y="514" width="1" height="8" fill="#1838f8"/>
<rect x="369" y="568" width="1" height="13" fill="#1034f0"/>
<rect x="370" y="568" width="1" height="13" fill="#1034f0"/>
<rect x="370" y="581" width="1" height="4" fill="#1030e8"/>
<rect x="370" y="581" width="1" height="4" fill="#0814a8"/>
<rect x="371" y="535" width="1" height="4" fill="#1a40ff"/>
<rect x="371" y="539" width="1" height="4" fill="#0c20d0"/>
<rect x="371" y="543" width="1" height="5" fill="#0c20d0"/>
<rect x="371" y="548" width="1" height="4" fill="#1028e0"/>
<rect x="371" y="552" width="1" height="4" fill="#0814a8"/>
<rect x="371" y="556" width="1" height="12" fill="#1838f8"/>
<rect x="372" y="568" width="1" height="13" fill="#1034f0"/>
<rect x="373" y="522" width="1" height="4" fill="#1028e0"/>
<rect x="373" y="526" width="1" height="4" fill="#1030e8"/>
<rect x="373" y="530" width="1" height="5" fill="#1028e0"/>
<rect x="373" y="535" width="1" height="4" fill="#0c20d0"/>
<rect x="373" y="539" width="1" height="4" fill="#1030e8"/>
<rect x="373" y="543" width="1" height="5" fill="#1030e8"/>
<rect x="373" y="548" width="1" height="4" fill="#1028e0"/>
<rect x="373" y="556" width="1" height="12" fill="#0c20d0"/>
<rect x="375" y="552" width="1" height="4" fill="#0c20d0"/>
<rect x="375" y="585" width="1" height="21" fill="url(#cg)"/>
<rect x="379" y="568" width="1" height="13" fill="#0c20d0"/>
<rect x="380" y="535" width="1" height="4" fill="#1838f8"/>
<rect x="380" y="539" width="1" height="4" fill="#0c20d0"/>
<rect x="380" y="548" width="1" height="4" fill="#1028e0"/>
<rect x="380" y="552" width="1" height="4" fill="#0c20d0"/>
<rect x="380" y="556" width="1" height="12" fill="#1838f8"/>
<rect x="381" y="581" width="1" height="4" fill="#0c20d0"/>
<rect x="382" y="581" width="1" height="4" fill="#1030e8"/>
<rect x="382" y="585" width="1" height="21" fill="url(#cg)"/>
<rect x="383" y="530" width="1" height="5" fill="#1030e8"/>
<rect x="383" y="535" width="1" height="4" fill="#1034f0"/>
<rect x="383" y="539" width="1" height="4" fill="#1028e0"/>
<rect x="383" y="543" width="1" height="5" fill="#0c20d0"/>
<rect x="383" y="548" width="1" height="4" fill="#1a40ff"/>
<rect x="383" y="552" width="1" height="4" fill="#1028e0"/>
<rect x="384" y="568" width="1" height="13" fill="#0814a8"/>
<rect x="385" y="530" width="1" height="5" fill="#1028e0"/>
<rect x="385" y="535" width="1" height="4" fill="#1030e8"/>
<rect x="385" y="539" width="1" height="4" fill="#1028e0"/>
<rect x="385" y="543" width="1" height="5" fill="#0814a8"/>
<rect x="385" y="548" width="1" height="4" fill="#1028e0"/>
<rect x="385" y="552" width="1" height="4" fill="#1a40ff"/>
<rect x="385" y="556" width="1" height="12" fill="#1a40ff"/>
<rect x="385" y="568" width="1" height="13" fill="#1a40ff"/>
<rect x="386" y="530" width="1" height="5" fill="#0c20d0"/>
<rect x="386" y="535" width="1" height="4" fill="#1838f8"/>
<rect x="386" y="539" width="1" height="4" fill="#1028e0"/>
<rect x="386" y="543" width="1" height="5" fill="#0a18b8"/>
<rect x="386" y="548" width="1" height="4" fill="#0a18b8"/>
<rect x="386" y="552" width="1" height="4" fill="#0a18b8"/>
<rect x="386" y="556" width="1" height="12" fill="#0c20d0"/>
<rect x="386" y="568" width="1" height="13" fill="#0814a8"/>
<rect x="386" y="581" width="1" height="4" fill="#1028e0"/>
<rect x="386" y="581" width="1" height="4" fill="#1034f0"/>
<rect x="388" y="539" width="1" height="4" fill="#0a18b8"/>
<rect x="388" y="543" width="1" height="5" fill="#1a40ff"/>
<rect x="388" y="548" width="1" height="4" fill="#1028e0"/>
<rect x="388" y="552" width="1" height="4" fill="#1a40ff"/>
<rect x="388" y="556" width="1" height="12" fill="#1034f0"/>
<rect x="388" y="568" width="1" height="13" fill="#0c20d0"/>
<rect x="388" y="581" width="1" height="4" fill="#1030e8"/>
<rect x="388" y="585" width="1" height="21" fill="url(#cg)"/>
<rect x="389" y="552" width="1" height="4" fill="#0814a8"/>
<rect x="389" y="556" width="1" height="12" fill="#0814a8"/>
<rect x="389" y="568" width="1" height="13" fill="#1a40ff"/>
<rect x="390" y="530" width="1" height="5" fill="#1028e0"/>
<rect x="390" y="535" width="1" height="4" fill="#0c20d0"/>
<rect x="390" y="543" width="1" height="5" fill="#0c20d0"/>
<rect x="390" y="548" width="1" height="4" fill="#1a40ff"/>
<rect x="390" y="552" width="1" height="4" fill="#1838f8"/>
<rect x="390" y="556" width="1" height="12" fill="#1034f0"/>
<rect x="390" y="581" width="1" height="4" fill="#1a40ff"/>
<rect x="390" y="514" width="1" height="8" fill="#0c20d0"/>
<rect x="391" y="556" width="1" height="12" fill="#0a18b8"/>
<rect x="391" y="568" width="1" height="13" fill="#0a18b8"/>
<rect x="391" y="552" width="1" height="4" fill="#0c20d0"/>
<rect x="393" y="539" width="1" height="4" fill="#0c20d0"/>
<rect x="393" y="543" width="1" height="5" fill="#1028e0"/>
<rect x="393" y="548" width="1" height="4" fill="#1028e0"/>
<rect x="393" y="552" width="1" height="4" fill="#0a18b8"/>
<rect x="393" y="556" width="1" height="12" fill="#1838f8"/>
<rect x="393" y="568" width="1" height="13" fill="#0814a8"/>
<rect x="394" y="543" width="1" height="5" fill="#1028e0"/>
<rect x="394" y="548" width="1" height="4" fill="#1034f0"/>
<rect x="394" y="552" width="1" height="4" fill="#0814a8"/>
<rect x="394" y="556" width="1" height="12" fill="#0814a8"/>
<rect x="394" y="568" width="1" height="13" fill="#0a18b8"/>
<rect x="394" y="581" width="1" height="4" fill="#1838f8"/>
<rect x="395" y="556" width="1" height="12" fill="#0c20d0"/>
<rect x="396" y="526" width="1" height="4" fill="#1838f8"/>
<rect x="396" y="530" width="1" height="5" fill="#1034f0"/>
<rect x="396" y="535" width="1" height="4" fill="#1034f0"/>
<rect x="396" y="539" width="1" height="4" fill="#0814a8"/>
<rect x="396" y="543" width="1" height="5" fill="#1838f8"/>
<rect x="396" y="548" width="1" height="4" fill="#1a40ff"/>
<rect x="396" y="552" width="1" height="4" fill="#0a18b8"/>
<rect x="396" y="556" width="1" height="12" fill="#1a40ff"/>
<rect x="396" y="568" width="1" height="13" fill="#0c20d0"/>
<rect x="401" y="552" width="1" height="4" fill="#0c20d0"/>
<rect x="405" y="535" width="1" height="4" fill="#0c20d0"/>
<rect x="405" y="539" width="1" height="4" fill="#1838f8"/>
<rect x="405" y="543" width="1" height="5" fill="#1030e8"/>
<rect x="405" y="548" width="1" height="4" fill="#1028e0"/>
<rect x="405" y="552" width="1" height="4" fill="#0a18b8"/>
<rect x="405" y="556" width="1" height="12" fill="#1838f8"/>
<rect x="405" y="568" width="1" height="13" fill="#0a18b8"/>
<rect x="405" y="552" width="1" height="4" fill="#1028e0"/>
<rect x="406" y="568" width="1" height="13" fill="#1a40ff"/>
<rect x="407" y="530" width="1" height="5" fill="#1838f8"/>
<rect x="407" y="535" width="1" height="4" fill="#0c20d0"/>
<rect x="407" y="539" width="1" height="4" fill="#1034f0"/>
<rect x="407" y="543" width="1" height="5" fill="#1030e8"/>
<rect x="407" y="548" width="1" height="4" fill="#0c20d0"/>
<rect x="407" y="552" width="1" height="4" fill="#0c20d0"/>
<rect x="407" y="556" width="1" height="12" fill="#0a18b8"/>
<rect x="407" y="568" width="1" height="13" fill="#1028e0"/>
<rect x="407" y="581" width="1" height="4" fill="#1a40ff"/>
<rect x="407" y="568" width="1" height="13" fill="#0a18b8"/>
<rect x="407" y="552" width="1" height="4" fill="#0814a8"/>
<rect x="410" y="568" width="1" height="13" fill="#0814a8"/>
<rect x="413" y="568" width="1" height="13" fill="#1838f8"/>
<rect x="414" y="552" width="1" height="4" fill="#0814a8"/>
<rect x="414" y="556" width="1" height="12" fill="#1030e8"/>
<rect x="414" y="568" width="1" height="13" fill="#1034f0"/>
<rect x="415" y="568" width="1" height="13" fill="#1030e8"/>
<rect x="415" y="568" width="1" height="13" fill="#1030e8"/>
<rect x="416" y="556" width="1" height="12" fill="#1034f0"/>
<rect x="416" y="568" width="1" height="13" fill="#1030e8"/>
<rect x="417" y="581" width="1" height="4" fill="#0814a8"/>
<rect x="418" y="530" width="1" height="5" fill="#0814a8"/>
<rect x="418" y="535" width="1" height="4" fill="#0c20d0"/>
<rect x="418" y="539" width="1" height="4" fill="#0c20d0"/>
<rect x="418" y="543" width="1" height="5" fill="#1028e0"/>
<rect x="418" y="548" width="1" height="4" fill="#1030e8"/>
<rect x="418" y="552" width="1" height="4" fill="#1028e0"/>
<rect x="418" y="556" width="1" height="12" fill="#1030e8"/>
<rect x="419" y="581" width="1" height="4" fill="#1a40ff"/>
<rect x="421" y="568" width="1" height="13" fill="#0814a8"/>
<rect x="421" y="581" width="1" height="4" fill="#0814a8"/>
<rect x="422" y="543" width="1" height="5" fill="#1034f0"/>
<rect x="422" y="548" width="1" height="4" fill="#1034f0"/>
<rect x="422" y="552" width="1" height="4" fill="#1838f8"/>
<rect x="423" y="581" width="1" height="4" fill="#1034f0"/>
<rect x="424" y="556" width="1" height="12" fill="#1a40ff"/>
<rect x="424" y="585" width="1" height="21" fill="url(#cg)"/>
<rect x="426" y="514" width="1" height="8" fill="#1a40ff"/>
<rect x="427" y="581" width="1" height="4" fill="#1030e8"/>
<rect x="428" y="539" width="1" height="4" fill="#0c20d0"/>
<rect x="428" y="543" width="1" height="5" fill="#1030e8"/>
<rect x="428" y="548" width="1" height="4" fill="#1a40ff"/>
<rect x="428" y="552" width="1" height="4" fill="#1028e0"/>
<rect x="428" y="556" width="1" height="12" fill="#1034f0"/>
<rect x="434" y="539" width="1" height="4" fill="#0814a8"/>
<rect x="434" y="543" width="1" height="5" fill="#0c20d0"/>
<rect x="434" y="548" width="1" height="4" fill="#1a40ff"/>
<rect x="434" y="552" width="1" height="4" fill="#0814a8"/>
<rect x="434" y="556" width="1" height="12" fill="#0a18b8"/>
<rect x="436" y="568" width="1" height="13" fill="#1028e0"/>
<rect x="436" y="585" width="1" height="21" fill="url(#cg)"/>
<rect x="438" y="568" width="1" height="13" fill="#1838f8"/>
<rect x="438" y="552" width="1" height="4" fill="#0814a8"/>
<rect x="439" y="514" width="1" height="8" fill="#0c20d0"/>
<rect x="445" y="526" width="1" height="4" fill="#1a40ff"/>
<rect x="445" y="535" width="1" height="4" fill="#0a18b8"/>
<rect x="445" y="539" width="1" height="4" fill="#0a18b8"/>
<rect x="445" y="543" width="1" height="5" fill="#0c20d0"/>
<rect x="445" y="548" width="1" height="4" fill="#0814a8"/>
<rect x="445" y="552" width="1" height="4" fill="#1028e0"/>
<rect x="445" y="556" width="1" height="12" fill="#1030e8"/>
<rect x="448" y="530" width="1" height="5" fill="#0814a8"/>
<rect x="448" y="535" width="1" height="4" fill="#1838f8"/>
<rect x="448" y="539" width="1" height="4" fill="#0814a8"/>
<rect x="448" y="543" width="1" height="5" fill="#1034f0"/>
<rect x="448" y="548" width="1" height="4" fill="#0c20d0"/>
<rect x="448" y="556" width="1" height="12" fill="#1028e0"/>
<rect x="448" y="568" width="1" height="13" fill="#1034f0"/>
<rect x="448" y="581" width="1" height="4" fill="#1838f8"/>
<rect x="449" y="585" width="1" height="21" fill="url(#cg)"/>
<rect x="453" y="568" width="1" height="13" fill="#1028e0"/>
<rect x="454" y="548" width="1" height="4" fill="#0814a8"/>
<rect x="454" y="552" width="1" height="4" fill="#0814a8"/>
<rect x="454" y="556" width="1" height="12" fill="#0c20d0"/>
<rect x="454" y="581" width="1" height="4" fill="#0814a8"/>
<rect x="455" y="568" width="1" height="13" fill="#1a40ff"/>
<rect x="455" y="581" width="1" height="4" fill="#0c20d0"/>
<rect x="456" y="552" width="1" height="4" fill="#1028e0"/>
<rect x="456" y="556" width="1" height="12" fill="#1028e0"/>
<rect x="456" y="568" width="1" height="13" fill="#0a18b8"/>
<rect x="457" y="568" width="1" height="13" fill="#1034f0"/>
<rect x="459" y="530" width="1" height="5" fill="#0814a8"/>
<rect x="459" y="535" width="1" height="4" fill="#1028e0"/>
<rect x="459" y="539" width="1" height="4" fill="#1034f0"/>
<rect x="459" y="543" width="1" height="5" fill="#1030e8"/>
<rect x="459" y="548" width="1" height="4" fill="#1838f8"/>
<rect x="459" y="552" width="1" height="4" fill="#1028e0"/>
<rect x="459" y="556" width="1" height="12" fill="#1034f0"/>
<rect x="459" y="568" width="1" height="13" fill="#1034f0"/>
<rect x="459" y="514" width="1" height="8" fill="#0c20d0"/>
<rect x="464" y="543" width="1" height="5" fill="#1028e0"/>
<rect x="464" y="548" width="1" height="4" fill="#1030e8"/>
<rect x="464" y="552" width="1" height="4" fill="#0c20d0"/>
<rect x="464" y="556" width="1" height="12" fill="#1838f8"/>
<rect x="464" y="568" width="1" height="13" fill="#0c20d0"/>
<rect x="464" y="581" width="1" height="4" fill="#1030e8"/>
<rect x="464" y="556" width="1" height="12" fill="#1034f0"/>
<rect x="464" y="568" width="1" height="13" fill="#1034f0"/>
<rect x="465" y="568" width="1" height="13" fill="#1030e8"/>
<rect x="465" y="581" width="1" height="4" fill="#0a18b8"/>
<rect x="465" y="514" width="1" height="8" fill="#0c20d0"/>
<rect x="467" y="530" width="1" height="5" fill="#1034f0"/>
<rect x="467" y="535" width="1" height="4" fill="#1030e8"/>
<rect x="467" y="539" width="1" height="4" fill="#1034f0"/>
<rect x="467" y="543" width="1" height="5" fill="#1028e0"/>
<rect x="467" y="548" width="1" height="4" fill="#0a18b8"/>
<rect x="467" y="552" width="1" height="4" fill="#1a40ff"/>
<rect x="467" y="556" width="1" height="12" fill="#0c20d0"/>
<rect x="467" y="568" width="1" height="13" fill="#1028e0"/>
<rect x="467" y="581" width="1" height="4" fill="#1838f8"/>
<rect x="467" y="585" width="1" height="21" fill="url(#cg)"/>
<rect x="469" y="539" width="1" height="4" fill="#1028e0"/>
<rect x="469" y="543" width="1" height="5" fill="#1838f8"/>
<rect x="469" y="548" width="1" height="4" fill="#1838f8"/>
<rect x="469" y="552" width="1" height="4" fill="#1838f8"/>
<rect x="469" y="556" width="1" height="12" fill="#0a18b8"/>
<rect x="469" y="568" width="1" height="13" fill="#0c20d0"/>
<rect x="470" y="552" width="1" height="4" fill="#0814a8"/>
<rect x="470" y="556" width="1" height="12" fill="#1028e0"/>
<rect x="470" y="556" width="1" height="12" fill="#1a40ff"/>
<rect x="472" y="526" width="1" height="4" fill="#1838f8"/>
<rect x="472" y="535" width="1" height="4" fill="#1028e0"/>
<rect x="472" y="539" width="1" height="4" fill="#0a18b8"/>
<rect x="472" y="543" width="1" height="5" fill="#1838f8"/>
<rect x="472" y="548" width="1" height="4" fill="#0c20d0"/>
<rect x="472" y="552" width="1" height="4" fill="#1028e0"/>
<rect x="472" y="556" width="1" height="12" fill="#0a18b8"/>
<rect x="472" y="568" width="1" height="13" fill="#1838f8"/>
<rect x="474" y="522" width="1" height="4" fill="#1a40ff"/>
<rect x="474" y="530" width="1" height="5" fill="#1a40ff"/>
<rect x="474" y="535" width="1" height="4" fill="#0c20d0"/>
<rect x="474" y="539" width="1" height="4" fill="#1838f8"/>
<rect x="474" y="543" width="1" height="5" fill="#1838f8"/>
<rect x="474" y="548" width="1" height="4" fill="#1030e8"/>
<rect x="474" y="552" width="1" height="4" fill="#0a18b8"/>
<rect x="475" y="522" width="1" height="4" fill="#0c20d0"/>
<rect x="475" y="526" width="1" height="4" fill="#1028e0"/>
<rect x="475" y="530" width="1" height="5" fill="#1838f8"/>
<rect x="475" y="535" width="1" height="4" fill="#0c20d0"/>
<rect x="475" y="539" width="1" height="4" fill="#1030e8"/>
<rect x="475" y="543" width="1" height="5" fill="#1028e0"/>
<rect x="475" y="548" width="1" height="4" fill="#1028e0"/>
<rect x="475" y="552" width="1" height="4" fill="#1838f8"/>
<rect x="475" y="556" width="1" height="12" fill="#1a40ff"/>
<rect x="475" y="568" width="1" height="13" fill="#1838f8"/>
<rect x="475" y="585" width="1" height="21" fill="url(#cg)"/>
<rect x="476" y="526" width="1" height="4" fill="#0c20d0"/>
<rect x="476" y="535" width="1" height="4" fill="#0814a8"/>
<rect x="476" y="539" width="1" height="4" fill="#1838f8"/>
<rect x="476" y="543" width="1" height="5" fill="#1838f8"/>
<rect x="476" y="548" width="1" height="4" fill="#0a18b8"/>
<rect x="476" y="552" width="1" height="4" fill="#1028e0"/>
<rect x="477" y="556" width="1" height="12" fill="#0a18b8"/>
<rect x="477" y="568" width="1" height="13" fill="#0814a8"/>
<rect x="477" y="552" width="1" height="4" fill="#1034f0"/>
<rect x="477" y="585" width="1" height="21" fill="url(#cg)"/>
<rect x="478" y="556" width="1" height="12" fill="#0c20d0"/>
<rect x="479" y="539" width="1" height="4" fill="#0814a8"/>
<rect x="479" y="543" width="1" height="5" fill="#1a40ff"/>
<rect x="479" y="548" width="1" height="4" fill="#1a40ff"/>
<rect x="479" y="552" width="1" height="4" fill="#0a18b8"/>
<rect x="479" y="556" width="1" height="12" fill="#1838f8"/>
<rect x="480" y="585" width="1" height="21" fill="url(#cg)"/>
<rect x="481" y="568" width="1" height="13" fill="#1028e0"/>
<rect x="483" y="535" width="1" height="4" fill="#1034f0"/>
<rect x="483" y="539" width="1" height="4" fill="#0814a8"/>
<rect x="483" y="543" width="1" height="5" fill="#1034f0"/>
<rect x="483" y="548" width="1" height="4" fill="#1a40ff"/>
<rect x="484" y="568" width="1" height="13" fill="#1028e0"/>
<rect x="484" y="581" width="1" height="4" fill="#0814a8"/>
<rect x="485" y="568" width="1" height="13" fill="#0c20d0"/>
<rect x="485" y="581" width="1" height="4" fill="#1034f0"/>
<rect x="487" y="556" width="1" height="12" fill="#1030e8"/>
<rect x="487" y="568" width="1" height="13" fill="#1838f8"/>
<rect x="487" y="581" width="1" height="4" fill="#0a18b8"/>
<rect x="487" y="585" width="1" height="21" fill="url(#cg)"/>
<rect x="488" y="568" width="1" height="13" fill="#1030e8"/>
<rect x="489" y="556" width="1" height="12" fill="#1028e0"/>
<rect x="489" y="568" width="1" height="13" fill="#0c20d0"/>
<rect x="491" y="585" width="1" height="21" fill="url(#cg)"/>
<rect x="492" y="514" width="1" height="8" fill="#0814a8"/>
<rect x="492" y="556" width="1" height="12" fill="#1838f8"/>
<rect x="492" y="568" width="1" height="13" fill="#1034f0"/>
<rect x="492" y="581" width="1" height="4" fill="#1030e8"/>
<rect x="496" y="581" width="1" height="4" fill="#0a18b8"/>
<rect x="497" y="568" width="1" height="13" fill="#0814a8"/>
<rect x="497" y="581" width="1" height="4" fill="#1838f8"/>
<rect x="497" y="585" width="1" height="21" fill="url(#cg)"/>
<rect x="499" y="585" width="1" height="21" fill="url(#cg)"/>
<rect x="500" y="581" width="1" height="4" fill="#1030e8"/>
<rect x="501" y="535" width="1" height="4" fill="#1034f0"/>
<rect x="501" y="539" width="1" height="4" fill="#1028e0"/>
<rect x="501" y="543" width="1" height="5" fill="#1838f8"/>
<rect x="501" y="548" width="1" height="4" fill="#0c20d0"/>
<rect x="501" y="552" width="1" height="4" fill="#1030e8"/>
<rect x="501" y="556" width="1" height="12" fill="#0814a8"/>
<rect x="501" y="568" width="1" height="13" fill="#1838f8"/>
<rect x="503" y="522" width="1" height="4" fill="#1030e8"/>
<rect x="503" y="526" width="1" height="4" fill="#0a18b8"/>
<rect x="503" y="535" width="1" height="4" fill="#1028e0"/>
<rect x="503" y="539" width="1" height="4" fill="#1034f0"/>
<rect x="503" y="543" width="1" height="5" fill="#1028e0"/>
<rect x="503" y="548" width="1" height="4" fill="#0814a8"/>
<rect x="503" y="552" width="1" height="4" fill="#1838f8"/>
<rect x="503" y="556" width="1" height="12" fill="#1028e0"/>
<rect x="504" y="568" width="1" height="13" fill="#1034f0"/>
<rect x="509" y="522" width="1" height="4" fill="#0814a8"/>
<rect x="509" y="526" width="1" height="4" fill="#1028e0"/>
<rect x="509" y="530" width="1" height="5" fill="#1028e0"/>
<rect x="509" y="535" width="1" height="4" fill="#0c20d0"/>
<rect x="509" y="539" width="1" height="4" fill="#1030e8"/>
<rect x="509" y="543" width="1" height="5" fill="#1034f0"/>
<rect x="509" y="548" width="1" height="4" fill="#1034f0"/>
<rect x="509" y="552" width="1" height="4" fill="#1030e8"/>
<rect x="509" y="556" width="1" height="12" fill="#1028e0"/>
<rect x="509" y="568" width="1" height="13" fill="#1a40ff"/>
<rect x="512" y="552" width="1" height="4" fill="#1028e0"/>
<rect x="512" y="568" width="1" height="13" fill="#1838f8"/>
<rect x="515" y="535" width="1" height="4" fill="#0814a8"/>
<rect x="515" y="539" width="1" height="4" fill="#1838f8"/>
<rect x="515" y="543" width="1" height="5" fill="#0c20d0"/>
<rect x="515" y="552" width="1" height="4" fill="#1030e8"/>
<rect x="515" y="556" width="1" height="12" fill="#1838f8"/>
<rect x="516" y="568" width="1" height="13" fill="#0a18b8"/>
<rect x="517" y="543" width="1" height="5" fill="#1030e8"/>
<rect x="517" y="548" width="1" height="4" fill="#0814a8"/>
<rect x="517" y="552" width="1" height="4" fill="#1838f8"/>
<rect x="517" y="556" width="1" height="12" fill="#0c20d0"/>
<rect x="517" y="581" width="1" height="4" fill="#1034f0"/>
<rect x="518" y="543" width="1" height="5" fill="#0c20d0"/>
<rect x="518" y="548" width="1" height="4" fill="#0814a8"/>
<rect x="518" y="552" width="1" height="4" fill="#1838f8"/>
<rect x="518" y="556" width="1" height="12" fill="#1034f0"/>
<rect x="518" y="568" width="1" height="13" fill="#1034f0"/>
<rect x="518" y="581" width="1" height="4" fill="#1a40ff"/>
<rect x="519" y="556" width="1" height="12" fill="#1838f8"/>
<rect x="521" y="530" width="1" height="5" fill="#0c20d0"/>
<rect x="521" y="535" width="1" height="4" fill="#1028e0"/>
<rect x="521" y="539" width="1" height="4" fill="#1030e8"/>
<rect x="521" y="556" width="1" height="12" fill="#1838f8"/>
<rect x="526" y="568" width="1" height="13" fill="#0c20d0"/>
<rect x="528" y="581" width="1" height="4" fill="#1034f0"/>
<rect x="529" y="535" width="1" height="4" fill="#1030e8"/>
<rect x="529" y="543" width="1" height="5" fill="#0a18b8"/>
<rect x="529" y="548" width="1" height="4" fill="#0814a8"/>
<rect x="529" y="552" width="1" height="4" fill="#1838f8"/>
<rect x="529" y="556" width="1" height="12" fill="#1034f0"/>
<rect x="529" y="568" width="1" height="13" fill="#0814a8"/>
<rect x="529" y="585" width="1" height="21" fill="url(#cg)"/>
<rect x="533" y="548" width="1" height="4" fill="#1028e0"/>
<rect x="533" y="552" width="1" height="4" fill="#1838f8"/>
<rect x="533" y="556" width="1" height="12" fill="#1034f0"/>
<rect x="534" y="543" width="1" height="5" fill="#1028e0"/>
<rect x="534" y="548" width="1" height="4" fill="#1a40ff"/>
<rect x="534" y="552" width="1" height="4" fill="#1030e8"/>
<rect x="536" y="568" width="1" height="13" fill="#1838f8"/>
<rect x="537" y="568" width="1" height="13" fill="#1034f0"/>
<rect x="537" y="581" width="1" height="4" fill="#0a18b8"/>
<rect x="537" y="556" width="1" height="12" fill="#1a40ff"/>
<rect x="537" y="581" width="1" height="4" fill="#0c20d0"/>
<rect x="539" y="548" width="1" height="4" fill="#1030e8"/>
<rect x="539" y="552" width="1" height="4" fill="#1838f8"/>
<rect x="539" y="556" width="1" height="12" fill="#1838f8"/>
<rect x="539" y="568" width="1" height="13" fill="#0814a8"/>
<rect x="540" y="535" width="1" height="4" fill="#1030e8"/>
<rect x="540" y="543" width="1" height="5" fill="#1030e8"/>
<rect x="540" y="548" width="1" height="4" fill="#1028e0"/>
<rect x="541" y="568" width="1" height="13" fill="#1034f0"/>
<rect x="543" y="514" width="1" height="8" fill="#1838f8"/>
<rect x="544" y="535" width="1" height="4" fill="#1034f0"/>
<rect x="544" y="539" width="1" height="4" fill="#1838f8"/>
<rect x="544" y="543" width="1" height="5" fill="#1034f0"/>
<rect x="544" y="548" width="1" height="4" fill="#0a18b8"/>
<rect x="544" y="552" width="1" height="4" fill="#0814a8"/>
<rect x="544" y="556" width="1" height="12" fill="#1a40ff"/>
<rect x="544" y="556" width="1" height="12" fill="#0a18b8"/>
<rect x="545" y="522" width="1" height="4" fill="#0c20d0"/>
<rect x="545" y="526" width="1" height="4" fill="#1a40ff"/>
<rect x="545" y="530" width="1" height="5" fill="#0c20d0"/>
<rect x="545" y="535" width="1" height="4" fill="#1028e0"/>
<rect x="545" y="539" width="1" height="4" fill="#1034f0"/>
<rect x="545" y="543" width="1" height="5" fill="#1034f0"/>
<rect x="545" y="548" width="1" height="4" fill="#1028e0"/>
<rect x="545" y="552" width="1" height="4" fill="#1034f0"/>
<rect x="546" y="568" width="1" height="13" fill="#1034f0"/>
<rect x="546" y="581" width="1" height="4" fill="#1a40ff"/>
<rect x="547" y="530" width="1" height="5" fill="#1034f0"/>
<rect x="547" y="535" width="1" height="4" fill="#1a40ff"/>
<rect x="547" y="539" width="1" height="4" fill="#1030e8"/>
<rect x="547" y="543" width="1" height="5" fill="#1028e0"/>
<rect x="547" y="548" width="1" height="4" fill="#1a40ff"/>
<rect x="547" y="552" width="1" height="4" fill="#1030e8"/>
<rect x="547" y="556" width="1" height="12" fill="#1028e0"/>
<rect x="549" y="581" width="1" height="4" fill="#0814a8"/>
<rect x="551" y="522" width="1" height="4" fill="#0814a8"/>
<rect x="551" y="526" width="1" height="4" fill="#1030e8"/>
<rect x="551" y="530" width="1" height="5" fill="#1838f8"/>
<rect x="551" y="535" width="1" height="4" fill="#0814a8"/>
<rect x="551" y="539" width="1" height="4" fill="#1838f8"/>
<rect x="551" y="543" width="1" height="5" fill="#0c20d0"/>
<rect x="551" y="548" width="1" height="4" fill="#1a40ff"/>
<rect x="551" y="568" width="1" height="13" fill="#1838f8"/>
<rect x="553" y="530" width="1" height="5" fill="#1034f0"/>
<rect x="553" y="535" width="1" height="4" fill="#0814a8"/>
<rect x="553" y="539" width="1" height="4" fill="#1a40ff"/>
<rect x="553" y="543" width="1" height="5" fill="#0814a8"/>
<rect x="553" y="548" width="1" height="4" fill="#1838f8"/>
<rect x="553" y="552" width="1" height="4" fill="#1a40ff"/>
<rect x="553" y="556" width="1" height="12" fill="#1034f0"/>
<rect x="553" y="568" width="1" height="13" fill="#0c20d0"/>
<rect x="555" y="568" width="1" height="13" fill="#1a40ff"/>
<rect x="556" y="556" width="1" height="12" fill="#0c20d0"/>
<rect x="556" y="585" width="1" height="21" fill="url(#cg)"/>
<rect x="558" y="530" width="1" height="5" fill="#1838f8"/>
<rect x="558" y="535" width="1" height="4" fill="#1030e8"/>
<rect x="558" y="539" width="1" height="4" fill="#0814a8"/>
<rect x="558" y="543" width="1" height="5" fill="#1030e8"/>
<rect x="558" y="548" width="1" height="4" fill="#0814a8"/>
<rect x="558" y="552" width="1" height="4" fill="#1034f0"/>
<rect x="558" y="556" width="1" height="12" fill="#1028e0"/>
<rect x="558" y="568" width="1" height="13" fill="#1a40ff"/>
<rect x="558" y="581" width="1" height="4" fill="#1a40ff"/>
<rect x="559" y="539" width="1" height="4" fill="#1034f0"/>
<rect x="559" y="543" width="1" height="5" fill="#1030e8"/>
<rect x="559" y="548" width="1" height="4" fill="#0814a8"/>
<rect x="560" y="581" width="1" height="4" fill="#1a40ff"/>
<rect x="562" y="556" width="1" height="12" fill="#0a18b8"/>
<rect x="563" y="581" width="1" height="4" fill="#1030e8"/>
<rect x="565" y="514" width="1" height="8" fill="#1838f8"/>
<rect x="566" y="539" width="1" height="4" fill="#0c20d0"/>
<rect x="566" y="543" width="1" height="5" fill="#1838f8"/>
<rect x="566" y="548" width="1" height="4" fill="#0a18b8"/>
<rect x="566" y="552" width="1" height="4" fill="#1030e8"/>
<rect x="566" y="556" width="1" height="12" fill="#0c20d0"/>
<rect x="566" y="568" width="1" height="13" fill="#0814a8"/>
<rect x="567" y="585" width="1" height="21" fill="url(#cg)"/>
<rect x="571" y="543" width="1" height="5" fill="#1028e0"/>
<rect x="571" y="548" width="1" height="4" fill="#0814a8"/>
<rect x="571" y="552" width="1" height="4" fill="#0a18b8"/>
<rect x="571" y="568" width="1" height="13" fill="#0c20d0"/>
<rect x="572" y="522" width="1" height="4" fill="#0a18b8"/>
<rect x="572" y="526" width="1" height="4" fill="#0c20d0"/>
<rect x="572" y="530" width="1" height="5" fill="#0814a8"/>
<rect x="572" y="535" width="1" height="4" fill="#0814a8"/>
<rect x="572" y="539" width="1" height="4" fill="#1030e8"/>
<rect x="572" y="543" width="1" height="5" fill="#1034f0"/>
<rect x="572" y="548" width="1" height="4" fill="#1034f0"/>
<rect x="572" y="552" width="1" height="4" fill="#0a18b8"/>
<rect x="572" y="556" width="1" height="12" fill="#1028e0"/>
<rect x="572" y="568" width="1" height="13" fill="#1030e8"/>
<rect x="572" y="581" width="1" height="4" fill="#1838f8"/>
<rect x="573" y="568" width="1" height="13" fill="#1a40ff"/>
<rect x="574" y="530" width="1" height="5" fill="#1034f0"/>
<rect x="574" y="535" width="1" height="4" fill="#1034f0"/>
<rect x="574" y="539" width="1" height="4" fill="#0a18b8"/>
<rect x="574" y="543" width="1" height="5" fill="#1028e0"/>
<rect x="574" y="548" width="1" height="4" fill="#1028e0"/>
<rect x="574" y="552" width="1" height="4" fill="#0814a8"/>
<rect x="574" y="568" width="1" height="13" fill="#0814a8"/>
<rect x="578" y="530" width="1" height="5" fill="#0814a8"/>
<rect x="578" y="535" width="1" height="4" fill="#1a40ff"/>
<rect x="578" y="539" width="1" height="4" fill="#1838f8"/>
<rect x="578" y="548" width="1" height="4" fill="#0a18b8"/>
<rect x="579" y="526" width="1" height="4" fill="#0a18b8"/>
<rect x="579" y="535" width="1" height="4" fill="#0814a8"/>
<rect x="579" y="539" width="1" height="4" fill="#1a40ff"/>
<rect x="579" y="548" width="1" height="4" fill="#1030e8"/>
<rect x="579" y="552" width="1" height="4" fill="#1028e0"/>
<rect x="579" y="556" width="1" height="12" fill="#1a40ff"/>
<rect x="579" y="568" width="1" height="13" fill="#1838f8"/>
<rect x="582" y="552" width="1" height="4" fill="#1a40ff"/>
<rect x="582" y="556" width="1" height="12" fill="#1034f0"/>
<rect x="582" y="585" width="1" height="21" fill="url(#cg)"/>
<rect x="583" y="585" width="1" height="21" fill="url(#cg)"/>
<rect x="584" y="568" width="1" height="13" fill="#1838f8"/>
<rect x="584" y="581" width="1" height="4" fill="#1a40ff"/>
<rect x="585" y="535" width="1" height="4" fill="#1a40ff"/>
<rect x="585" y="539" width="1" height="4" fill="#1034f0"/>
<rect x="585" y="543" width="1" height="5" fill="#1034f0"/>
<rect x="585" y="548" width="1" height="4" fill="#1034f0"/>
<rect x="585" y="552" width="1" height="4" fill="#1028e0"/>
<rect x="585" y="556" width="1" height="12" fill="#0814a8"/>
<rect x="585" y="568" width="1" height="13" fill="#0c20d0"/>
<rect x="585" y="581" width="1" height="4" fill="#1034f0"/>
<rect x="585" y="585" width="1" height="21" fill="url(#cg)"/>
<rect x="586" y="568" width="1" height="13" fill="#0c20d0"/>
<rect x="587" y="552" width="1" height="4" fill="#0814a8"/>
<rect x="587" y="556" width="1" height="12" fill="#1838f8"/>
<rect x="587" y="568" width="1" height="13" fill="#1028e0"/>
<rect x="590" y="556" width="1" height="12" fill="#1030e8"/>
<rect x="590" y="568" width="1" height="13" fill="#1028e0"/>
<rect x="590" y="556" width="1" height="12" fill="#1838f8"/>
<rect x="592" y="539" width="1" height="4" fill="#1a40ff"/>
<rect x="592" y="543" width="1" height="5" fill="#1838f8"/>
<rect x="592" y="548" width="1" height="4" fill="#1028e0"/>
<rect x="592" y="552" width="1" height="4" fill="#0814a8"/>
<rect x="592" y="556" width="1" height="12" fill="#0a18b8"/>
<rect x="593" y="568" width="1" height="13" fill="#1838f8"/>
<rect x="594" y="539" width="1" height="4" fill="#0c20d0"/>
<rect x="594" y="543" width="1" height="5" fill="#1028e0"/>
<rect x="594" y="548" width="1" height="4" fill="#1034f0"/>
<rect x="594" y="552" width="1" height="4" fill="#1838f8"/>
<rect x="594" y="568" width="1" height="13" fill="#0814a8"/>
<rect x="596" y="526" width="1" height="4" fill="#0c20d0"/>
<rect x="596" y="530" width="1" height="5" fill="#1030e8"/>
<rect x="596" y="535" width="1" height="4" fill="#0c20d0"/>
<rect x="596" y="539" width="1" height="4" fill="#1838f8"/>
<rect x="596" y="543" width="1" height="5" fill="#1838f8"/>
<rect x="596" y="548" width="1" height="4" fill="#0c20d0"/>
<rect x="596" y="552" width="1" height="4" fill="#1838f8"/>
<rect x="596" y="556" width="1" height="12" fill="#0814a8"/>
<rect x="597" y="556" width="1" height="12" fill="#0a18b8"/>
<rect x="597" y="585" width="1" height="21" fill="url(#cg)"/>
<rect x="600" y="539" width="1" height="4" fill="#1030e8"/>
<rect x="600" y="543" width="1" height="5" fill="#1030e8"/>
<rect x="600" y="552" width="1" height="4" fill="#1a40ff"/>
<rect x="603" y="568" width="1" height="13" fill="#0814a8"/>
<rect x="605" y="556" width="1" height="12" fill="#1034f0"/>
<rect x="605" y="568" width="1" height="13" fill="#1028e0"/>
<rect x="606" y="522" width="1" height="4" fill="#1838f8"/>
<rect x="606" y="526" width="1" height="4" fill="#0c20d0"/>
<rect x="606" y="530" width="1" height="5" fill="#0c20d0"/>
<rect x="606" y="535" width="1" height="4" fill="#1028e0"/>
<rect x="606" y="539" width="1" height="4" fill="#1028e0"/>
<rect x="606" y="543" width="1" height="5" fill="#1838f8"/>
<rect x="606" y="548" width="1" height="4" fill="#1034f0"/>
<rect x="606" y="552" width="1" height="4" fill="#1030e8"/>
<rect x="606" y="556" width="1" height="12" fill="#1a40ff"/>
<rect x="606" y="585" width="1" height="21" fill="url(#cg)"/>
<rect x="607" y="556" width="1" height="12" fill="#1030e8"/>
<rect x="608" y="539" width="1" height="4" fill="#1a40ff"/>
<rect x="608" y="543" width="1" height="5" fill="#1a40ff"/>
<rect x="608" y="548" width="1" height="4" fill="#0a18b8"/>
<rect x="608" y="552" width="1" height="4" fill="#1030e8"/>
<rect x="608" y="556" width="1" height="12" fill="#1028e0"/>
<rect x="608" y="568" width="1" height="13" fill="#0c20d0"/>
<rect x="608" y="581" width="1" height="4" fill="#1030e8"/>
<rect x="608" y="568" width="1" height="13" fill="#1034f0"/>
<rect x="608" y="585" width="1" height="21" fill="url(#cg)"/>
<rect x="609" y="530" width="1" height="5" fill="#1034f0"/>
<rect x="609" y="535" width="1" height="4" fill="#1030e8"/>
<rect x="609" y="543" width="1" height="5" fill="#1034f0"/>
<rect x="609" y="548" width="1" height="4" fill="#0a18b8"/>
<rect x="609" y="552" width="1" height="4" fill="#1034f0"/>
<rect x="609" y="556" width="1" height="12" fill="#0c20d0"/>
<rect x="609" y="568" width="1" height="13" fill="#1030e8"/>
<rect x="612" y="568" width="1" height="13" fill="#0a18b8"/>
<rect x="612" y="581" width="1" height="4" fill="#0814a8"/>
<rect x="612" y="581" width="1" height="4" fill="#1030e8"/>
<rect x="613" y="556" width="1" height="12" fill="#0a18b8"/>
<rect x="613" y="568" width="1" height="13" fill="#0814a8"/>
<rect x="613" y="585" width="1" height="21" fill="url(#cg)"/>
<rect x="615" y="535" width="1" height="4" fill="#1030e8"/>
<rect x="615" y="539" width="1" height="4" fill="#1034f0"/>
<rect x="615" y="543" width="1" height="5" fill="#1a40ff"/>
<rect x="615" y="548" width="1" height="4" fill="#1838f8"/>
<rect x="615" y="585" width="1" height="21" fill="url(#cg)"/>
<rect x="616" y="530" width="1" height="5" fill="#1030e8"/>
<rect x="616" y="535" width="1" height="4" fill="#0a18b8"/>
<rect x="616" y="539" width="1" height="4" fill="#1030e8"/>
<rect x="616" y="548" width="1" height="4" fill="#0c20d0"/>
<rect x="616" y="552" width="1" height="4" fill="#1034f0"/>
<rect x="616" y="556" width="1" height="12" fill="#1a40ff"/>
<rect x="616" y="568" width="1" height="13" fill="#1838f8"/>
<rect x="618" y="552" width="1" height="4" fill="#1034f0"/>
<rect x="619" y="568" width="1" height="13" fill="#1030e8"/>
<rect x="620" y="539" width="1" height="4" fill="#1028e0"/>
<rect x="620" y="543" width="1" height="5" fill="#0a18b8"/>
<rect x="620" y="548" width="1" height="4" fill="#1034f0"/>
<rect x="620" y="552" width="1" height="4" fill="#1030e8"/>
<rect x="620" y="556" width="1" height="12" fill="#1034f0"/>
<rect x="622" y="535" width="1" height="4" fill="#1838f8"/>
<rect x="622" y="539" width="1" height="4" fill="#1a40ff"/>
<rect x="622" y="543" width="1" height="5" fill="#0814a8"/>
<rect x="622" y="548" width="1" height="4" fill="#1a40ff"/>
<rect x="622" y="552" width="1" height="4" fill="#1034f0"/>
<rect x="622" y="556" width="1" height="12" fill="#0a18b8"/>
<rect x="622" y="556" width="1" height="12" fill="#1a40ff"/>
<rect x="622" y="568" width="1" height="13" fill="#0c20d0"/>
<rect x="623" y="556" width="1" height="12" fill="#1a40ff"/>
<rect x="624" y="543" width="1" height="5" fill="#1838f8"/>
<rect x="625" y="535" width="1" height="4" fill="#1034f0"/>
<rect x="625" y="539" width="1" height="4" fill="#0c20d0"/>
<rect x="625" y="548" width="1" height="4" fill="#1028e0"/>
<rect x="625" y="552" width="1" height="4" fill="#1034f0"/>
<rect x="625" y="568" width="1" height="13" fill="#1028e0"/>
<rect x="627" y="526" width="1" height="4" fill="#0814a8"/>
<rect x="627" y="530" width="1" height="5" fill="#0814a8"/>
<rect x="627" y="535" width="1" height="4" fill="#0c20d0"/>
<rect x="627" y="543" width="1" height="5" fill="#1a40ff"/>
<rect x="627" y="548" width="1" height="4" fill="#0c20d0"/>
<rect x="627" y="552" width="1" height="4" fill="#0814a8"/>
<rect x="627" y="556" width="1" height="12" fill="#0814a8"/>
<rect x="627" y="568" width="1" height="13" fill="#1030e8"/>
<rect x="627" y="585" width="1" height="21" fill="url(#cg)"/>
<rect x="630" y="568" width="1" height="13" fill="#0c20d0"/>
<rect x="633" y="526" width="1" height="4" fill="#0c20d0"/>
<rect x="633" y="530" width="1" height="5" fill="#1028e0"/>
<rect x="633" y="535" width="1" height="4" fill="#1028e0"/>
<rect x="633" y="539" width="1" height="4" fill="#1034f0"/>
<rect x="633" y="543" width="1" height="5" fill="#1028e0"/>
<rect x="633" y="548" width="1" height="4" fill="#1838f8"/>
<rect x="633" y="552" width="1" height="4" fill="#0a18b8"/>
<rect x="633" y="556" width="1" height="12" fill="#1028e0"/>
<rect x="633" y="581" width="1" height="4" fill="#0a18b8"/>
<rect x="634" y="585" width="1" height="21" fill="url(#cg)"/>
<rect x="636" y="568" width="1" height="13" fill="#0814a8"/>
<rect x="636" y="581" width="1" height="4" fill="#1a40ff"/>
<rect x="637" y="556" width="1" height="12" fill="#0c20d0"/>
<rect x="638" y="568" width="1" height="13" fill="#1838f8"/>
<rect x="638" y="581" width="1" height="4" fill="#1838f8"/>
<rect x="638" y="585" width="1" height="21" fill="url(#cg)"/>
<rect x="639" y="556" width="1" height="12" fill="#1a40ff"/>
<rect x="639" y="568" width="1" height="13" fill="#1838f8"/>
<rect x="641" y="539" width="1" height="4" fill="#0a18b8"/>
<rect x="641" y="543" width="1" height="5" fill="#0a18b8"/>
<rect x="641" y="552" width="1" height="4" fill="#0a18b8"/>
<rect x="641" y="556" width="1" height="12" fill="#0a18b8"/>
<rect x="642" y="556" width="1" height="12" fill="#0a18b8"/>
<rect x="646" y="581" width="1" height="4" fill="#0a18b8"/>
<rect x="649" y="552" width="1" height="4" fill="#1a40ff"/>
<rect x="649" y="568" width="1" height="13" fill="#1030e8"/>
<rect x="649" y="581" width="1" height="4" fill="#1838f8"/>
<rect x="649" y="585" width="1" height="21" fill="url(#cg)"/>
<rect x="650" y="568" width="1" height="13" fill="#0c20d0"/>
<rect x="656" y="556" width="1" height="12" fill="#1030e8"/>
<rect x="656" y="568" width="1" height="13" fill="#1838f8"/>
<rect x="656" y="581" width="1" height="4" fill="#1034f0"/>
<rect x="658" y="543" width="1" height="5" fill="#0c20d0"/>
<rect x="658" y="548" width="1" height="4" fill="#0a18b8"/>
<rect x="658" y="552" width="1" height="4" fill="#1034f0"/>
<rect x="658" y="556" width="1" height="12" fill="#0c20d0"/>
<rect x="660" y="526" width="1" height="4" fill="#1a40ff"/>
<rect x="660" y="530" width="1" height="5" fill="#0814a8"/>
<rect x="660" y="535" width="1" height="4" fill="#0a18b8"/>
<rect x="660" y="539" width="1" height="4" fill="#0c20d0"/>
<rect x="660" y="543" width="1" height="5" fill="#0a18b8"/>
<rect x="660" y="548" width="1" height="4" fill="#1028e0"/>
<rect x="660" y="552" width="1" height="4" fill="#0814a8"/>
<rect x="660" y="556" width="1" height="12" fill="#1030e8"/>
<rect x="662" y="539" width="1" height="4" fill="#1a40ff"/>
<rect x="662" y="543" width="1" height="5" fill="#0814a8"/>
<rect x="662" y="548" width="1" height="4" fill="#1028e0"/>
<rect x="663" y="556" width="1" height="12" fill="#0a18b8"/>
<rect x="663" y="568" width="1" height="13" fill="#0c20d0"/>
<rect x="665" y="522" width="1" height="4" fill="#0a18b8"/>
<rect x="665" y="535" width="1" height="4" fill="#1a40ff"/>
<rect x="665" y="548" width="1" height="4" fill="#1028e0"/>
<rect x="667" y="568" width="1" height="13" fill="#0814a8"/>
<rect x="669" y="548" width="1" height="4" fill="#1838f8"/>
<rect x="669" y="552" width="1" height="4" fill="#0a18b8"/>
<rect x="669" y="556" width="1" height="12" fill="#0c20d0"/>
<rect x="669" y="568" width="1" height="13" fill="#1a40ff"/>
<rect x="669" y="581" width="1" height="4" fill="#1a40ff"/>
<rect x="670" y="568" width="1" height="13" fill="#0a18b8"/>
<rect x="670" y="581" width="1" height="4" fill="#1838f8"/>
<rect x="670" y="556" width="1" height="12" fill="#1838f8"/>
<rect x="673" y="556" width="1" height="12" fill="#0a18b8"/>
<rect x="673" y="568" width="1" height="13" fill="#0c20d0"/>
<rect x="673" y="514" width="1" height="8" fill="#1030e8"/>
<rect x="674" y="556" width="1" height="12" fill="#0c20d0"/>
<rect x="674" y="568" width="1" height="13" fill="#1030e8"/>
<rect x="674" y="581" width="1" height="4" fill="#1030e8"/>
<rect x="675" y="556" width="1" height="12" fill="#1034f0"/>
<rect x="675" y="568" width="1" height="13" fill="#1a40ff"/>
<rect x="675" y="556" width="1" height="12" fill="#1838f8"/>
<rect x="676" y="568" width="1" height="13" fill="#1838f8"/>
<rect x="679" y="535" width="1" height="4" fill="#0814a8"/>
<rect x="679" y="539" width="1" height="4" fill="#0a18b8"/>
<rect x="679" y="543" width="1" height="5" fill="#1a40ff"/>
<rect x="679" y="548" width="1" height="4" fill="#1030e8"/>
<rect x="679" y="552" width="1" height="4" fill="#1028e0"/>
<rect x="679" y="556" width="1" height="12" fill="#1838f8"/>
<rect x="679" y="568" width="1" height="13" fill="#0a18b8"/>
<rect x="682" y="556" width="1" height="12" fill="#1030e8"/>
<rect x="682" y="568" width="1" height="13" fill="#0a18b8"/>
<rect x="685" y="568" width="1" height="13" fill="#1838f8"/>
<rect x="685" y="581" width="1" height="4" fill="#1034f0"/>
<rect x="685" y="585" width="1" height="21" fill="url(#cg)"/>
<rect x="686" y="556" width="1" height="12" fill="#0c20d0"/>
<rect x="688" y="548" width="1" height="4" fill="#0a18b8"/>
<rect x="688" y="552" width="1" height="4" fill="#1a40ff"/>
<rect x="688" y="556" width="1" height="12" fill="#0a18b8"/>
<rect x="688" y="568" width="1" height="13" fill="#1a40ff"/>
<rect x="688" y="585" width="1" height="21" fill="url(#cg)"/>
<rect x="689" y="585" width="1" height="21" fill="url(#cg)"/>
<rect x="690" y="568" width="1" height="13" fill="#1028e0"/>
<rect x="691" y="539" width="1" height="4" fill="#0a18b8"/>
<rect x="691" y="543" width="1" height="5" fill="#1a40ff"/>
<rect x="691" y="548" width="1" height="4" fill="#0814a8"/>
<rect x="691" y="552" width="1" height="4" fill="#0c20d0"/>
<rect x="691" y="556" width="1" height="12" fill="#0c20d0"/>
<rect x="691" y="568" width="1" height="13" fill="#1838f8"/>
<rect x="691" y="581" width="1" height="4" fill="#0a18b8"/>
<rect x="695" y="581" width="1" height="4" fill="#1028e0"/>
<rect x="696" y="552" width="1" height="4" fill="#1034f0"/>
<rect x="697" y="568" width="1" height="13" fill="#1028e0"/>
<rect x="697" y="581" width="1" height="4" fill="#1034f0"/>
<rect x="697" y="585" width="1" height="21" fill="url(#cg)"/>
<rect x="698" y="543" width="1" height="5" fill="#1a40ff"/>
<rect x="698" y="548" width="1" height="4" fill="#0a18b8"/>
<rect x="698" y="552" width="1" height="4" fill="#0c20d0"/>
<rect x="699" y="585" width="1" height="21" fill="url(#cg)"/>
<rect x="700" y="526" width="1" height="4" fill="#0c20d0"/>
<rect x="700" y="530" width="1" height="5" fill="#1030e8"/>
<rect x="700" y="535" width="1" height="4" fill="#0c20d0"/>
<rect x="700" y="543" width="1" height="5" fill="#1a40ff"/>
<rect x="700" y="552" width="1" height="4" fill="#1a40ff"/>
<rect x="700" y="556" width="1" height="12" fill="#0814a8"/>
<rect x="700" y="581" width="1" height="4" fill="#0c20d0"/>
<rect x="700" y="552" width="1" height="4" fill="#1028e0"/>
<rect x="703" y="556" width="1" height="12" fill="#1034f0"/>
<rect x="704" y="526" width="1" height="4" fill="#1a40ff"/>
<rect x="704" y="530" width="1" height="5" fill="#0c20d0"/>
<rect x="704" y="535" width="1" height="4" fill="#1a40ff"/>
<rect x="704" y="539" width="1" height="4" fill="#0a18b8"/>
<rect x="704" y="543" width="1" height="5" fill="#1030e8"/>
<rect x="704" y="548" width="1" height="4" fill="#0814a8"/>
<rect x="704" y="556" width="1" height="12" fill="#1a40ff"/>
<rect x="704" y="568" width="1" height="13" fill="#0c20d0"/>
<rect x="705" y="522" width="1" height="4" fill="#1028e0"/>
<rect x="705" y="526" width="1" height="4" fill="#1034f0"/>
<rect x="705" y="535" width="1" height="4" fill="#1838f8"/>
<rect x="705" y="539" width="1" height="4" fill="#1838f8"/>
<rect x="705" y="548" width="1" height="4" fill="#1028e0"/>
<rect x="705" y="552" width="1" height="4" fill="#1838f8"/>
<rect x="705" y="556" width="1" height="12" fill="#1a40ff"/>
<rect x="705" y="568" width="1" height="13" fill="#0a18b8"/>
<rect x="705" y="581" width="1" height="4" fill="#0a18b8"/>
<rect x="706" y="568" width="1" height="13" fill="#0c20d0"/>
<rect x="706" y="581" width="1" height="4" fill="#1028e0"/>
<rect x="707" y="568" width="1" height="13" fill="#1034f0"/>
<rect x="707" y="556" width="1" height="12" fill="#1a40ff"/>
<rect x="708" y="568" width="1" height="13" fill="#1a40ff"/>
<rect x="708" y="581" width="1" height="4" fill="#1028e0"/>
<rect x="708" y="568" width="1" height="13" fill="#0c20d0"/>
<rect x="709" y="530" width="1" height="5" fill="#0814a8"/>
<rect x="709" y="535" width="1" height="4" fill="#1034f0"/>
<rect x="709" y="539" width="1" height="4" fill="#1030e8"/>
<rect x="709" y="543" width="1" height="5" fill="#0a18b8"/>
<rect x="709" y="552" width="1" height="4" fill="#1838f8"/>
<rect x="710" y="530" width="1" height="5" fill="#1a40ff"/>
<rect x="710" y="535" width="1" height="4" fill="#1028e0"/>
<rect x="710" y="539" width="1" height="4" fill="#1a40ff"/>
<rect x="710" y="543" width="1" height="5" fill="#1028e0"/>
<rect x="710" y="548" width="1" height="4" fill="#1a40ff"/>
<rect x="710" y="552" width="1" height="4" fill="#1028e0"/>
<rect x="711" y="526" width="1" height="4" fill="#1030e8"/>
<rect x="711" y="530" width="1" height="5" fill="#1030e8"/>
<rect x="711" y="535" width="1" height="4" fill="#1838f8"/>
<rect x="711" y="539" width="1" height="4" fill="#0a18b8"/>
<rect x="711" y="543" width="1" height="5" fill="#0a18b8"/>
<rect x="711" y="548" width="1" height="4" fill="#0c20d0"/>
<rect x="712" y="568" width="1" height="13" fill="#1838f8"/>
<rect x="712" y="581" width="1" height="4" fill="#1030e8"/>
<rect x="713" y="556" width="1" height="12" fill="#1028e0"/>
<rect x="716" y="552" width="1" height="4" fill="#1030e8"/>
<rect x="716" y="556" width="1" height="12" fill="#1838f8"/>
<rect x="716" y="568" width="1" height="13" fill="#0a18b8"/>
<rect x="716" y="581" width="1" height="4" fill="#0814a8"/>
<rect x="717" y="539" width="1" height="4" fill="#0c20d0"/>
<rect x="717" y="543" width="1" height="5" fill="#0c20d0"/>
<rect x="717" y="548" width="1" height="4" fill="#1a40ff"/>
<rect x="717" y="552" width="1" height="4" fill="#0c20d0"/>
<rect x="717" y="556" width="1" height="12" fill="#1030e8"/>
<rect x="718" y="539" width="1" height="4" fill="#1028e0"/>
<rect x="718" y="543" width="1" height="5" fill="#0a18b8"/>
<rect x="718" y="548" width="1" height="4" fill="#1a40ff"/>
<rect x="718" y="552" width="1" height="4" fill="#0814a8"/>
<rect x="719" y="530" width="1" height="5" fill="#1030e8"/>
<rect x="719" y="535" width="1" height="4" fill="#0a18b8"/>
<rect x="719" y="539" width="1" height="4" fill="#1838f8"/>
<rect x="719" y="543" width="1" height="5" fill="#1030e8"/>
<rect x="719" y="548" width="1" height="4" fill="#0814a8"/>
<rect x="719" y="552" width="1" height="4" fill="#1034f0"/>
<rect x="719" y="556" width="1" height="12" fill="#0814a8"/>
<rect x="719" y="568" width="1" height="13" fill="#1030e8"/>
<rect x="720" y="581" width="1" height="4" fill="#0a18b8"/>
<rect x="721" y="552" width="1" height="4" fill="#1034f0"/>
<rect x="721" y="556" width="1" height="12" fill="#1838f8"/>
<rect x="721" y="585" width="1" height="21" fill="url(#cg)"/>
<rect x="724" y="568" width="1" height="13" fill="#1030e8"/>
<rect x="724" y="581" width="1" height="4" fill="#0c20d0"/>
<rect x="726" y="526" width="1" height="4" fill="#1838f8"/>
<rect x="726" y="530" width="1" height="5" fill="#1034f0"/>
<rect x="726" y="535" width="1" height="4" fill="#0814a8"/>
<rect x="726" y="539" width="1" height="4" fill="#1034f0"/>
<rect x="726" y="548" width="1" height="4" fill="#1028e0"/>
<rect x="726" y="552" width="1" height="4" fill="#0a18b8"/>
<rect x="726" y="556" width="1" height="12" fill="#1028e0"/>
<rect x="726" y="568" width="1" height="13" fill="#1034f0"/>
<rect x="726" y="581" width="1" height="4" fill="#1028e0"/>
<rect x="730" y="548" width="1" height="4" fill="#1838f8"/>
<rect x="730" y="552" width="1" height="4" fill="#0814a8"/>
<rect x="730" y="556" width="1" height="12" fill="#0a18b8"/>
<rect x="730" y="568" width="1" height="13" fill="#1838f8"/>
<rect x="730" y="581" width="1" height="4" fill="#0814a8"/>
<rect x="732" y="522" width="1" height="4" fill="#1a40ff"/>
<rect x="732" y="526" width="1" height="4" fill="#1034f0"/>
<rect x="732" y="530" width="1" height="5" fill="#1030e8"/>
<rect x="732" y="535" width="1" height="4" fill="#1028e0"/>
<rect x="732" y="539" width="1" height="4" fill="#1034f0"/>
<rect x="732" y="543" width="1" height="5" fill="#0814a8"/>
<rect x="732" y="548" width="1" height="4" fill="#0c20d0"/>
<rect x="732" y="552" width="1" height="4" fill="#1028e0"/>
<rect x="732" y="556" width="1" height="12" fill="#0a18b8"/>
<rect x="732" y="568" width="1" height="13" fill="#1030e8"/>
<rect x="732" y="556" width="1" height="12" fill="#1030e8"/>
<rect x="733" y="568" width="1" height="13" fill="#1838f8"/>
<rect x="734" y="514" width="1" height="8" fill="#1a40ff"/>
<rect x="737" y="530" width="1" height="5" fill="#0814a8"/>
<rect x="737" y="535" width="1" height="4" fill="#1030e8"/>
<rect x="737" y="539" width="1" height="4" fill="#1a40ff"/>
<rect x="737" y="543" width="1" height="5" fill="#1838f8"/>
<rect x="737" y="548" width="1" height="4" fill="#0c20d0"/>
<rect x="737" y="552" width="1" height="4" fill="#1034f0"/>
<rect x="737" y="556" width="1" height="12" fill="#1030e8"/>
<rect x="737" y="568" width="1" height="13" fill="#0814a8"/>
<rect x="739" y="556" width="1" height="12" fill="#1838f8"/>
<rect x="740" y="552" width="1" height="4" fill="#1a40ff"/>
<rect x="740" y="556" width="1" height="12" fill="#0a18b8"/>
<rect x="743" y="526" width="1" height="4" fill="#1028e0"/>
<rect x="743" y="530" width="1" height="5" fill="#0c20d0"/>
<rect x="743" y="535" width="1" height="4" fill="#1a40ff"/>
<rect x="743" y="539" width="1" height="4" fill="#1a40ff"/>
<rect x="743" y="543" width="1" height="5" fill="#1034f0"/>
<rect x="743" y="548" width="1" height="4" fill="#1034f0"/>
<rect x="743" y="552" width="1" height="4" fill="#1030e8"/>
<rect x="743" y="556" width="1" height="12" fill="#0c20d0"/>
<rect x="743" y="568" width="1" height="13" fill="#0a18b8"/>
<rect x="743" y="585" width="1" height="21" fill="url(#cg)"/>
<rect x="746" y="556" width="1" height="12" fill="#0a18b8"/>
<rect x="747" y="556" width="1" height="12" fill="#1030e8"/>
<rect x="748" y="543" width="1" height="5" fill="#0c20d0"/>
<rect x="748" y="548" width="1" height="4" fill="#0c20d0"/>
<rect x="748" y="552" width="1" height="4" fill="#1034f0"/>
<rect x="748" y="581" width="1" height="4" fill="#1034f0"/>
<rect x="748" y="585" width="1" height="21" fill="url(#cg)"/>
<rect x="750" y="522" width="1" height="4" fill="#0a18b8"/>
<rect x="750" y="526" width="1" height="4" fill="#1a40ff"/>
<rect x="750" y="530" width="1" height="5" fill="#1030e8"/>
<rect x="750" y="535" width="1" height="4" fill="#1838f8"/>
<rect x="750" y="543" width="1" height="5" fill="#1838f8"/>
<rect x="750" y="548" width="1" height="4" fill="#1028e0"/>
<rect x="750" y="552" width="1" height="4" fill="#0a18b8"/>
<rect x="752" y="539" width="1" height="4" fill="#1028e0"/>
<rect x="752" y="543" width="1" height="5" fill="#1030e8"/>
<rect x="752" y="548" width="1" height="4" fill="#0c20d0"/>
<rect x="753" y="543" width="1" height="5" fill="#0c20d0"/>
<rect x="753" y="548" width="1" height="4" fill="#1838f8"/>
<rect x="753" y="552" width="1" height="4" fill="#0a18b8"/>
<rect x="753" y="556" width="1" height="12" fill="#1034f0"/>
<rect x="753" y="568" width="1" height="13" fill="#0a18b8"/>
<rect x="755" y="526" width="1" height="4" fill="#0814a8"/>
<rect x="755" y="530" width="1" height="5" fill="#1030e8"/>
<rect x="755" y="535" width="1" height="4" fill="#0c20d0"/>
<rect x="755" y="539" width="1" height="4" fill="#1034f0"/>
<rect x="755" y="548" width="1" height="4" fill="#0a18b8"/>
<rect x="755" y="552" width="1" height="4" fill="#1034f0"/>
<rect x="755" y="556" width="1" height="12" fill="#0814a8"/>
<rect x="755" y="568" width="1" height="13" fill="#1030e8"/>
<rect x="755" y="581" width="1" height="4" fill="#1838f8"/>
<rect x="758" y="535" width="1" height="4" fill="#0c20d0"/>
<rect x="758" y="539" width="1" height="4" fill="#0814a8"/>
<rect x="758" y="543" width="1" height="5" fill="#0c20d0"/>
<rect x="758" y="548" width="1" height="4" fill="#1838f8"/>
<rect x="758" y="552" width="1" height="4" fill="#1a40ff"/>
<rect x="758" y="556" width="1" height="12" fill="#1838f8"/>
<rect x="759" y="539" width="1" height="4" fill="#1838f8"/>
<rect x="759" y="543" width="1" height="5" fill="#1034f0"/>
<rect x="759" y="548" width="1" height="4" fill="#1034f0"/>
<rect x="759" y="552" width="1" height="4" fill="#1a40ff"/>
<rect x="759" y="556" width="1" height="12" fill="#0c20d0"/>
<rect x="759" y="568" width="1" height="13" fill="#1028e0"/>
<rect x="760" y="530" width="1" height="5" fill="#1838f8"/>
<rect x="760" y="535" width="1" height="4" fill="#1838f8"/>
<rect x="760" y="539" width="1" height="4" fill="#0c20d0"/>
<rect x="760" y="543" width="1" height="5" fill="#1028e0"/>
<rect x="760" y="548" width="1" height="4" fill="#1034f0"/>
<rect x="760" y="552" width="1" height="4" fill="#1028e0"/>
<rect x="760" y="568" width="1" height="13" fill="#1030e8"/>
<rect x="765" y="539" width="1" height="4" fill="#1034f0"/>
<rect x="765" y="543" width="1" height="5" fill="#1034f0"/>
<rect x="765" y="548" width="1" height="4" fill="#1034f0"/>
<rect x="765" y="552" width="1" height="4" fill="#0814a8"/>
<rect x="765" y="556" width="1" height="12" fill="#1838f8"/>
<rect x="765" y="568" width="1" height="13" fill="#1838f8"/>
<rect x="765" y="568" width="1" height="13" fill="#1838f8"/>
<rect x="768" y="535" width="1" height="4" fill="#1838f8"/>
<rect x="768" y="539" width="1" height="4" fill="#1a40ff"/>
<rect x="768" y="543" width="1" height="5" fill="#0814a8"/>
<rect x="768" y="548" width="1" height="4" fill="#1030e8"/>
<rect x="768" y="552" width="1" height="4" fill="#0814a8"/>
<rect x="768" y="556" width="1" height="12" fill="#1030e8"/>
<rect x="768" y="568" width="1" height="13" fill="#0814a8"/>
<rect x="768" y="581" width="1" height="4" fill="#0814a8"/>
<rect x="769" y="526" width="1" height="4" fill="#0814a8"/>
<rect x="769" y="535" width="1" height="4" fill="#1030e8"/>
<rect x="769" y="539" width="1" height="4" fill="#0814a8"/>
<rect x="769" y="543" width="1" height="5" fill="#0a18b8"/>
<rect x="769" y="552" width="1" height="4" fill="#1028e0"/>
<rect x="769" y="556" width="1" height="12" fill="#0a18b8"/>
<rect x="769" y="568" width="1" height="13" fill="#0c20d0"/>
<rect x="771" y="556" width="1" height="12" fill="#0814a8"/>
<rect x="771" y="581" width="1" height="4" fill="#1034f0"/>
<rect x="774" y="530" width="1" height="5" fill="#1838f8"/>
<rect x="774" y="535" width="1" height="4" fill="#0814a8"/>
<rect x="774" y="539" width="1" height="4" fill="#0c20d0"/>
<rect x="774" y="543" width="1" height="5" fill="#1838f8"/>
<rect x="774" y="548" width="1" height="4" fill="#1a40ff"/>
<rect x="774" y="552" width="1" height="4" fill="#1034f0"/>
<rect x="774" y="581" width="1" height="4" fill="#1028e0"/>
<rect x="774" y="568" width="1" height="13" fill="#1028e0"/>
<rect x="775" y="552" width="1" height="4" fill="#1034f0"/>
<rect x="775" y="556" width="1" height="12" fill="#1030e8"/>
<rect x="775" y="568" width="1" height="13" fill="#0c20d0"/>
<rect x="777" y="568" width="1" height="13" fill="#0814a8"/>
<rect x="777" y="581" width="1" height="4" fill="#0814a8"/>
<rect x="778" y="543" width="1" height="5" fill="#1838f8"/>
<rect x="778" y="548" width="1" height="4" fill="#0c20d0"/>
<rect x="778" y="552" width="1" height="4" fill="#1838f8"/>
<rect x="778" y="556" width="1" height="12" fill="#1034f0"/>
<rect x="778" y="568" width="1" height="13" fill="#1838f8"/>
<rect x="779" y="568" width="1" height="13" fill="#0c20d0"/>
<rect x="780" y="535" width="1" height="4" fill="#1030e8"/>
<rect x="780" y="539" width="1" height="4" fill="#0c20d0"/>
<rect x="780" y="543" width="1" height="5" fill="#0a18b8"/>
<rect x="780" y="548" width="1" height="4" fill="#1034f0"/>
<rect x="780" y="552" width="1" height="4" fill="#1030e8"/>
<rect x="780" y="552" width="1" height="4" fill="#1030e8"/>
<rect x="781" y="535" width="1" height="4" fill="#0a18b8"/>
<rect x="781" y="543" width="1" height="5" fill="#0c20d0"/>
<rect x="781" y="552" width="1" height="4" fill="#1034f0"/>
<rect x="781" y="556" width="1" height="12" fill="#1838f8"/>
<rect x="781" y="568" width="1" height="13" fill="#0c20d0"/>
<rect x="782" y="568" width="1" height="13" fill="#1a40ff"/>
<rect x="782" y="581" width="1" height="4" fill="#0814a8"/>
<rect x="782" y="585" width="1" height="21" fill="url(#cg)"/>
<rect x="783" y="552" width="1" height="4" fill="#1a40ff"/>
<rect x="783" y="556" width="1" height="12" fill="#1a40ff"/>
<rect x="783" y="568" width="1" height="13" fill="#1a40ff"/>
<rect x="783" y="556" width="1" height="12" fill="#1028e0"/>
<rect x="785" y="522" width="1" height="4" fill="#0c20d0"/>
<rect x="785" y="535" width="1" height="4" fill="#0814a8"/>
<rect x="785" y="539" width="1" height="4" fill="#1028e0"/>
<rect x="785" y="543" width="1" height="5" fill="#0c20d0"/>
<rect x="785" y="548" width="1" height="4" fill="#0814a8"/>
<rect x="785" y="552" width="1" height="4" fill="#0814a8"/>
<rect x="789" y="530" width="1" height="5" fill="#1a40ff"/>
<rect x="789" y="535" width="1" height="4" fill="#1a40ff"/>
<rect x="789" y="539" width="1" height="4" fill="#1034f0"/>
<rect x="789" y="543" width="1" height="5" fill="#1030e8"/>
<rect x="789" y="548" width="1" height="4" fill="#1838f8"/>
<rect x="789" y="552" width="1" height="4" fill="#0c20d0"/>
<rect x="789" y="556" width="1" height="12" fill="#0c20d0"/>
<rect x="789" y="568" width="1" height="13" fill="#0c20d0"/>
<rect x="789" y="581" width="1" height="4" fill="#1028e0"/>
<rect x="789" y="556" width="1" height="12" fill="#1a40ff"/>
<rect x="790" y="552" width="1" height="4" fill="#0814a8"/>
<rect x="790" y="556" width="1" height="12" fill="#1838f8"/>
<rect x="790" y="568" width="1" height="13" fill="#1028e0"/>
<rect x="790" y="581" width="1" height="4" fill="#0a18b8"/>
<rect x="790" y="568" width="1" height="13" fill="#1030e8"/>
<rect x="795" y="556" width="1" height="12" fill="#1034f0"/>
<rect x="795" y="568" width="1" height="13" fill="#0c20d0"/>
<rect x="795" y="581" width="1" height="4" fill="#0c20d0"/>
<rect x="796" y="526" width="1" height="4" fill="#1a40ff"/>
<rect x="796" y="530" width="1" height="5" fill="#1a40ff"/>
<rect x="796" y="535" width="1" height="4" fill="#0a18b8"/>
<rect x="796" y="539" width="1" height="4" fill="#0c20d0"/>
<rect x="796" y="543" width="1" height="5" fill="#0a18b8"/>
<rect x="796" y="548" width="1" height="4" fill="#1a40ff"/>
<rect x="797" y="539" width="1" height="4" fill="#0c20d0"/>
<rect x="797" y="543" width="1" height="5" fill="#1838f8"/>
<rect x="797" y="548" width="1" height="4" fill="#1030e8"/>
<rect x="797" y="552" width="1" height="4" fill="#0814a8"/>
<rect x="797" y="556" width="1" height="12" fill="#1028e0"/>
<rect x="797" y="514" width="1" height="8" fill="#1838f8"/>
<rect x="797" y="552" width="1" height="4" fill="#1030e8"/>
<rect x="799" y="514" width="1" height="8" fill="#1a40ff"/>
<rect x="799" y="552" width="1" height="4" fill="#1a40ff"/>
<rect x="800" y="526" width="1" height="4" fill="#0a18b8"/>
<rect x="800" y="530" width="1" height="5" fill="#1838f8"/>
<rect x="800" y="539" width="1" height="4" fill="#1a40ff"/>
<rect x="800" y="543" width="1" height="5" fill="#1838f8"/>
<rect x="800" y="548" width="1" height="4" fill="#0814a8"/>
<rect x="800" y="552" width="1" height="4" fill="#1a40ff"/>
<rect x="802" y="548" width="1" height="4" fill="#1030e8"/>
<rect x="802" y="552" width="1" height="4" fill="#0814a8"/>
<rect x="802" y="556" width="1" height="12" fill="#1030e8"/>
<rect x="802" y="568" width="1" height="13" fill="#1034f0"/>
<rect x="802" y="581" width="1" height="4" fill="#1030e8"/>
<rect x="807" y="543" width="1" height="5" fill="#1a40ff"/>
<rect x="807" y="548" width="1" height="4" fill="#1a40ff"/>
<rect x="808" y="568" width="1" height="13" fill="#0a18b8"/>
<rect x="809" y="535" width="1" height="4" fill="#1028e0"/>
<rect x="809" y="539" width="1" height="4" fill="#1a40ff"/>
<rect x="809" y="543" width="1" height="5" fill="#1838f8"/>
<rect x="809" y="548" width="1" height="4" fill="#0c20d0"/>
<rect x="809" y="552" width="1" height="4" fill="#1030e8"/>
<rect x="809" y="556" width="1" height="12" fill="#0a18b8"/>
<rect x="809" y="568" width="1" height="13" fill="#1838f8"/>
<rect x="809" y="581" width="1" height="4" fill="#0814a8"/>
<rect x="809" y="585" width="1" height="21" fill="url(#cg)"/>
<rect x="810" y="581" width="1" height="4" fill="#1028e0"/>
<rect x="812" y="522" width="1" height="4" fill="#0814a8"/>
<rect x="812" y="535" width="1" height="4" fill="#1030e8"/>
<rect x="812" y="539" width="1" height="4" fill="#1a40ff"/>
<rect x="812" y="543" width="1" height="5" fill="#1838f8"/>
<rect x="812" y="548" width="1" height="4" fill="#1028e0"/>
<rect x="812" y="552" width="1" height="4" fill="#0814a8"/>
<rect x="812" y="556" width="1" height="12" fill="#1838f8"/>
<rect x="812" y="568" width="1" height="13" fill="#0c20d0"/>
<rect x="813" y="514" width="1" height="8" fill="#1028e0"/>
<rect x="814" y="556" width="1" height="12" fill="#0c20d0"/>
<rect x="817" y="530" width="1" height="5" fill="#1034f0"/>
<rect x="817" y="535" width="1" height="4" fill="#1030e8"/>
<rect x="817" y="539" width="1" height="4" fill="#1030e8"/>
<rect x="817" y="543" width="1" height="5" fill="#0a18b8"/>
<rect x="817" y="548" width="1" height="4" fill="#0814a8"/>
<rect x="817" y="552" width="1" height="4" fill="#0c20d0"/>
<rect x="817" y="556" width="1" height="12" fill="#1030e8"/>
<rect x="817" y="581" width="1" height="4" fill="#0a18b8"/>
<rect x="819" y="556" width="1" height="12" fill="#0c20d0"/>
<rect x="819" y="568" width="1" height="13" fill="#1030e8"/>
<rect x="823" y="568" width="1" height="13" fill="#0814a8"/>
<rect x="823" y="585" width="1" height="21" fill="url(#cg)"/>
<rect x="829" y="535" width="1" height="4" fill="#1028e0"/>
<rect x="829" y="539" width="1" height="4" fill="#1a40ff"/>
<rect x="829" y="543" width="1" height="5" fill="#1838f8"/>
<rect x="829" y="548" width="1" height="4" fill="#0c20d0"/>
<rect x="830" y="568" width="1" height="13" fill="#1030e8"/>
<rect x="831" y="581" width="1" height="4" fill="#1a40ff"/>
<rect x="833" y="556" width="1" height="12" fill="#0a18b8"/>
<rect x="834" y="556" width="1" height="12" fill="#1034f0"/>
<rect x="835" y="552" width="1" height="4" fill="#1a40ff"/>
<rect x="835" y="556" width="1" height="12" fill="#0814a8"/>
<rect x="835" y="568" width="1" height="13" fill="#1034f0"/>
<rect x="835" y="568" width="1" height="13" fill="#0c20d0"/>
<rect x="838" y="535" width="1" height="4" fill="#1030e8"/>
<rect x="838" y="539" width="1" height="4" fill="#0814a8"/>
<rect x="838" y="548" width="1" height="4" fill="#1030e8"/>
<rect x="838" y="552" width="1" height="4" fill="#0a18b8"/>
<rect x="838" y="556" width="1" height="12" fill="#1030e8"/>
<rect x="838" y="568" width="1" height="13" fill="#1a40ff"/>
<rect x="838" y="581" width="1" height="4" fill="#0814a8"/>
<rect x="840" y="535" width="1" height="4" fill="#1a40ff"/>
<rect x="840" y="539" width="1" height="4" fill="#1034f0"/>
<rect x="840" y="543" width="1" height="5" fill="#0c20d0"/>
<rect x="840" y="548" width="1" height="4" fill="#0a18b8"/>
<rect x="840" y="552" width="1" height="4" fill="#1028e0"/>
<rect x="840" y="556" width="1" height="12" fill="#0a18b8"/>
<rect x="842" y="530" width="1" height="5" fill="#1838f8"/>
<rect x="842" y="535" width="1" height="4" fill="#1030e8"/>
<rect x="842" y="539" width="1" height="4" fill="#1030e8"/>
<rect x="842" y="543" width="1" height="5" fill="#1028e0"/>
<rect x="842" y="548" width="1" height="4" fill="#1028e0"/>
<rect x="844" y="552" width="1" height="4" fill="#1030e8"/>
<rect x="844" y="556" width="1" height="12" fill="#1838f8"/>
<rect x="845" y="556" width="1" height="12" fill="#1034f0"/>
<rect x="845" y="552" width="1" height="4" fill="#1030e8"/>
<rect x="846" y="535" width="1" height="4" fill="#0c20d0"/>
<rect x="846" y="539" width="1" height="4" fill="#1030e8"/>
<rect x="846" y="543" width="1" height="5" fill="#1838f8"/>
<rect x="846" y="548" width="1" height="4" fill="#1a40ff"/>
<rect x="847" y="568" width="1" height="13" fill="#1028e0"/>
<rect x="847" y="585" width="1" height="21" fill="url(#cg)"/>
<rect x="848" y="530" width="1" height="5" fill="#0814a8"/>
<rect x="848" y="539" width="1" height="4" fill="#1838f8"/>
<rect x="848" y="543" width="1" height="5" fill="#1a40ff"/>
<rect x="848" y="548" width="1" height="4" fill="#0814a8"/>
<rect x="849" y="568" width="1" height="13" fill="#1034f0"/>
<rect x="850" y="585" width="1" height="21" fill="url(#cg)"/>
<rect x="851" y="543" width="1" height="5" fill="#1a40ff"/>
<rect x="851" y="548" width="1" height="4" fill="#0a18b8"/>
<rect x="853" y="548" width="1" height="4" fill="#1028e0"/>
<rect x="853" y="556" width="1" height="12" fill="#0814a8"/>
<rect x="856" y="535" width="1" height="4" fill="#1838f8"/>
<rect x="856" y="539" width="1" height="4" fill="#0a18b8"/>
<rect x="856" y="543" width="1" height="5" fill="#1838f8"/>
<rect x="856" y="548" width="1" height="4" fill="#1a40ff"/>
<rect x="856" y="552" width="1" height="4" fill="#1838f8"/>
<rect x="856" y="556" width="1" height="12" fill="#1838f8"/>
<rect x="859" y="568" width="1" height="13" fill="#1028e0"/>
<rect x="860" y="552" width="1" height="4" fill="#1838f8"/>
<rect x="860" y="556" width="1" height="12" fill="#1034f0"/>
<rect x="860" y="581" width="1" height="4" fill="#0a18b8"/>
<rect x="861" y="522" width="1" height="4" fill="#0c20d0"/>
<rect x="861" y="526" width="1" height="4" fill="#1028e0"/>
<rect x="861" y="530" width="1" height="5" fill="#1838f8"/>
<rect x="861" y="539" width="1" height="4" fill="#0a18b8"/>
<rect x="861" y="543" width="1" height="5" fill="#1a40ff"/>
<rect x="861" y="548" width="1" height="4" fill="#1034f0"/>
<rect x="861" y="552" width="1" height="4" fill="#0a18b8"/>
<rect x="861" y="556" width="1" height="12" fill="#1030e8"/>
<rect x="861" y="568" width="1" height="13" fill="#1034f0"/>
<rect x="861" y="585" width="1" height="21" fill="url(#cg)"/>
<rect x="862" y="514" width="1" height="8" fill="#1028e0"/>
<rect x="863" y="548" width="1" height="4" fill="#1838f8"/>
<rect x="863" y="556" width="1" height="12" fill="#1030e8"/>
<rect x="863" y="568" width="1" height="13" fill="#0814a8"/>
<rect x="864" y="556" width="1" height="12" fill="#0814a8"/>
<rect x="864" y="568" width="1" height="13" fill="#0a18b8"/>
<rect x="864" y="581" width="1" height="4" fill="#1030e8"/>
<rect x="864" y="568" width="1" height="13" fill="#1a40ff"/>
<rect x="865" y="556" width="1" height="12" fill="#1030e8"/>
<rect x="866" y="568" width="1" height="13" fill="#0814a8"/>
<rect x="867" y="543" width="1" height="5" fill="#0a18b8"/>
<rect x="867" y="548" width="1" height="4" fill="#0a18b8"/>
<rect x="867" y="552" width="1" height="4" fill="#1034f0"/>
<rect x="867" y="556" width="1" height="12" fill="#1034f0"/>
<rect x="868" y="543" width="1" height="5" fill="#0c20d0"/>
<rect x="868" y="548" width="1" height="4" fill="#0c20d0"/>
<rect x="868" y="552" width="1" height="4" fill="#1028e0"/>
<rect x="868" y="556" width="1" height="12" fill="#0a18b8"/>
<rect x="868" y="568" width="1" height="13" fill="#1a40ff"/>
<rect x="869" y="539" width="1" height="4" fill="#0a18b8"/>
<rect x="869" y="543" width="1" height="5" fill="#1034f0"/>
<rect x="869" y="548" width="1" height="4" fill="#1838f8"/>
<rect x="869" y="552" width="1" height="4" fill="#0c20d0"/>
<rect x="869" y="556" width="1" height="12" fill="#0c20d0"/>
<rect x="869" y="568" width="1" height="13" fill="#1034f0"/>
<rect x="870" y="556" width="1" height="12" fill="#0c20d0"/>
<rect x="870" y="585" width="1" height="21" fill="url(#cg)"/>
<rect x="871" y="526" width="1" height="4" fill="#0a18b8"/>
<rect x="871" y="530" width="1" height="5" fill="#1028e0"/>
<rect x="871" y="539" width="1" height="4" fill="#1034f0"/>
<rect x="871" y="543" width="1" height="5" fill="#0c20d0"/>
<rect x="871" y="548" width="1" height="4" fill="#1a40ff"/>
<rect x="871" y="552" width="1" height="4" fill="#1a40ff"/>
<rect x="871" y="556" width="1" height="12" fill="#1838f8"/>
<rect x="871" y="568" width="1" height="13" fill="#1838f8"/>
<rect x="873" y="568" width="1" height="13" fill="#1838f8"/>
<rect x="873" y="581" width="1" height="4" fill="#0a18b8"/>
<rect x="885" y="581" width="1" height="4" fill="#0c20d0"/>
<rect x="885" y="552" width="1" height="4" fill="#0814a8"/>
<rect x="886" y="581" width="1" height="4" fill="#1028e0"/>
<rect x="887" y="556" width="1" height="12" fill="#1034f0"/>
<rect x="887" y="568" width="1" height="13" fill="#1028e0"/>
<rect x="889" y="548" width="1" height="4" fill="#1030e8"/>
<rect x="889" y="552" width="1" height="4" fill="#0c20d0"/>
<rect x="889" y="556" width="1" height="12" fill="#1028e0"/>
<rect x="889" y="568" width="1" height="13" fill="#1a40ff"/>
<rect x="889" y="581" width="1" height="4" fill="#1838f8"/>
<rect x="891" y="548" width="1" height="4" fill="#1838f8"/>
<rect x="891" y="552" width="1" height="4" fill="#1034f0"/>
<rect x="891" y="556" width="1" height="12" fill="#1034f0"/>
<rect x="891" y="568" width="1" height="13" fill="#0c20d0"/>
<rect x="891" y="581" width="1" height="4" fill="#0814a8"/>
<rect x="895" y="535" width="1" height="4" fill="#1a40ff"/>
<rect x="895" y="543" width="1" height="5" fill="#0814a8"/>
<rect x="895" y="548" width="1" height="4" fill="#1034f0"/>
<rect x="895" y="552" width="1" height="4" fill="#1028e0"/>
<rect x="895" y="556" width="1" height="12" fill="#1a40ff"/>
<rect x="895" y="568" width="1" height="13" fill="#0814a8"/>
<rect x="895" y="581" width="1" height="4" fill="#1034f0"/>
<rect x="895" y="585" width="1" height="21" fill="url(#cg)"/>
<rect x="897" y="552" width="1" height="4" fill="#1838f8"/>
<rect x="897" y="556" width="1" height="12" fill="#1030e8"/>
<rect x="900" y="556" width="1" height="12" fill="#1838f8"/>
<rect x="902" y="552" width="1" height="4" fill="#0c20d0"/>
<rect x="902" y="556" width="1" height="12" fill="#0814a8"/>
<rect x="902" y="568" width="1" height="13" fill="#1838f8"/>
<rect x="904" y="568" width="1" height="13" fill="#0c20d0"/>
<rect x="906" y="568" width="1" height="13" fill="#1a40ff"/>
<rect x="912" y="581" width="1" height="4" fill="#1028e0"/>
<rect x="913" y="556" width="1" height="12" fill="#1028e0"/>
<rect x="913" y="568" width="1" height="13" fill="#1a40ff"/>
<rect x="913" y="581" width="1" height="4" fill="#1034f0"/>
<rect x="920" y="581" width="1" height="4" fill="#0814a8"/>
<rect x="921" y="556" width="1" height="12" fill="#1034f0"/>
<rect x="922" y="556" width="1" height="12" fill="#1034f0"/>
<rect x="922" y="552" width="1" height="4" fill="#1028e0"/>
<rect x="922" y="585" width="1" height="21" fill="url(#cg)"/>
<rect x="925" y="535" width="1" height="4" fill="#0a18b8"/>
<rect x="925" y="543" width="1" height="5" fill="#1838f8"/>
<rect x="925" y="548" width="1" height="4" fill="#1030e8"/>
<rect x="925" y="581" width="1" height="4" fill="#1034f0"/>
<rect x="926" y="556" width="1" height="12" fill="#0814a8"/>
<rect x="926" y="581" width="1" height="4" fill="#1838f8"/>
<rect x="928" y="543" width="1" height="5" fill="#1028e0"/>
<rect x="928" y="548" width="1" height="4" fill="#0a18b8"/>
<rect x="928" y="552" width="1" height="4" fill="#0814a8"/>
<rect x="928" y="556" width="1" height="12" fill="#1a40ff"/>
<rect x="929" y="556" width="1" height="12" fill="#0c20d0"/>
<rect x="929" y="585" width="1" height="21" fill="url(#cg)"/>
<rect x="932" y="568" width="1" height="13" fill="#0a18b8"/>
<rect x="933" y="581" width="1" height="4" fill="#1028e0"/>
<rect x="936" y="530" width="1" height="5" fill="#0c20d0"/>
<rect x="936" y="535" width="1" height="4" fill="#1034f0"/>
<rect x="936" y="539" width="1" height="4" fill="#0a18b8"/>
<rect x="936" y="543" width="1" height="5" fill="#1838f8"/>
<rect x="936" y="548" width="1" height="4" fill="#1a40ff"/>
<rect x="936" y="552" width="1" height="4" fill="#1838f8"/>
<rect x="936" y="556" width="1" height="12" fill="#1a40ff"/>
<rect x="936" y="568" width="1" height="13" fill="#1034f0"/>
<rect x="936" y="585" width="1" height="21" fill="url(#cg)"/>
<rect x="938" y="526" width="1" height="4" fill="#1034f0"/>
<rect x="938" y="530" width="1" height="5" fill="#1030e8"/>
<rect x="938" y="535" width="1" height="4" fill="#1030e8"/>
<rect x="938" y="539" width="1" height="4" fill="#0c20d0"/>
<rect x="938" y="543" width="1" height="5" fill="#0814a8"/>
<rect x="938" y="548" width="1" height="4" fill="#0814a8"/>
<rect x="938" y="514" width="1" height="8" fill="#0814a8"/>
<rect x="938" y="585" width="1" height="21" fill="url(#cg)"/>
<rect x="939" y="568" width="1" height="13" fill="#1a40ff"/>
<rect x="940" y="522" width="1" height="4" fill="#1028e0"/>
<rect x="940" y="526" width="1" height="4" fill="#0a18b8"/>
<rect x="940" y="530" width="1" height="5" fill="#0a18b8"/>
<rect x="940" y="535" width="1" height="4" fill="#1034f0"/>
<rect x="940" y="539" width="1" height="4" fill="#0a18b8"/>
<rect x="940" y="543" width="1" height="5" fill="#1030e8"/>
<rect x="940" y="548" width="1" height="4" fill="#0a18b8"/>
<rect x="941" y="530" width="1" height="5" fill="#1838f8"/>
<rect x="941" y="535" width="1" height="4" fill="#1030e8"/>
<rect x="941" y="543" width="1" height="5" fill="#0814a8"/>
<rect x="941" y="548" width="1" height="4" fill="#1030e8"/>
<rect x="941" y="552" width="1" height="4" fill="#1a40ff"/>
<rect x="941" y="568" width="1" height="13" fill="#1030e8"/>
<rect x="942" y="581" width="1" height="4" fill="#1028e0"/>
<rect x="944" y="585" width="1" height="21" fill="url(#cg)"/>
<rect x="946" y="568" width="1" height="13" fill="#1a40ff"/>
<rect x="946" y="581" width="1" height="4" fill="#1028e0"/>
<rect x="948" y="556" width="1" height="12" fill="#1a40ff"/>
<rect x="948" y="581" width="1" height="4" fill="#0a18b8"/>
<rect x="950" y="552" width="1" height="4" fill="#1030e8"/>
<rect x="952" y="522" width="1" height="4" fill="#0c20d0"/>
<rect x="952" y="530" width="1" height="5" fill="#1838f8"/>
<rect x="952" y="535" width="1" height="4" fill="#0814a8"/>
<rect x="952" y="539" width="1" height="4" fill="#1028e0"/>
<rect x="952" y="543" width="1" height="5" fill="#0814a8"/>
<rect x="952" y="548" width="1" height="4" fill="#1028e0"/>
<rect x="952" y="552" width="1" height="4" fill="#1a40ff"/>
<rect x="952" y="568" width="1" height="13" fill="#0a18b8"/>
<rect x="952" y="581" width="1" height="4" fill="#0c20d0"/>
<rect x="953" y="568" width="1" height="13" fill="#0814a8"/>
<rect x="955" y="514" width="1" height="8" fill="#1a40ff"/>
<rect x="955" y="568" width="1" height="13" fill="#1028e0"/>
<rect x="957" y="585" width="1" height="21" fill="url(#cg)"/>
<rect x="958" y="526" width="1" height="4" fill="#1a40ff"/>
<rect x="958" y="530" width="1" height="5" fill="#1a40ff"/>
<rect x="958" y="535" width="1" height="4" fill="#1838f8"/>
<rect x="958" y="543" width="1" height="5" fill="#1838f8"/>
<rect x="958" y="548" width="1" height="4" fill="#1a40ff"/>
<rect x="958" y="552" width="1" height="4" fill="#1838f8"/>
<rect x="958" y="556" width="1" height="12" fill="#1838f8"/>
<rect x="958" y="568" width="1" height="13" fill="#1028e0"/>
<rect x="960" y="552" width="1" height="4" fill="#1838f8"/>
<rect x="960" y="556" width="1" height="12" fill="#1030e8"/>
<rect x="961" y="530" width="1" height="5" fill="#0c20d0"/>
<rect x="961" y="543" width="1" height="5" fill="#1838f8"/>
<rect x="961" y="548" width="1" height="4" fill="#1838f8"/>
<rect x="961" y="552" width="1" height="4" fill="#1838f8"/>
<rect x="961" y="556" width="1" height="12" fill="#0a18b8"/>
<rect x="961" y="568" width="1" height="13" fill="#1838f8"/>
<rect x="965" y="548" width="1" height="4" fill="#1034f0"/>
<rect x="966" y="548" width="1" height="4" fill="#0a18b8"/>
<rect x="966" y="552" width="1" height="4" fill="#1030e8"/>
<rect x="966" y="556" width="1" height="12" fill="#0c20d0"/>
<rect x="967" y="585" width="1" height="21" fill="url(#cg)"/>
<rect x="968" y="568" width="1" height="13" fill="#1028e0"/>
<rect x="969" y="543" width="1" height="5" fill="#1034f0"/>
<rect x="969" y="548" width="1" height="4" fill="#0c20d0"/>
<rect x="969" y="556" width="1" height="12" fill="#1a40ff"/>
<rect x="969" y="568" width="1" height="13" fill="#0c20d0"/>
<rect x="969" y="581" width="1" height="4" fill="#0814a8"/>
<rect x="970" y="530" width="1" height="5" fill="#1030e8"/>
<rect x="970" y="535" width="1" height="4" fill="#0c20d0"/>
<rect x="970" y="539" width="1" height="4" fill="#1838f8"/>
<rect x="970" y="543" width="1" height="5" fill="#1a40ff"/>
<rect x="970" y="548" width="1" height="4" fill="#1028e0"/>
<rect x="970" y="552" width="1" height="4" fill="#1a40ff"/>
<rect x="970" y="556" width="1" height="12" fill="#0814a8"/>
<rect x="970" y="568" width="1" height="13" fill="#0c20d0"/>
<rect x="971" y="530" width="1" height="5" fill="#1034f0"/>
<rect x="971" y="535" width="1" height="4" fill="#1030e8"/>
<rect x="971" y="539" width="1" height="4" fill="#1838f8"/>
<rect x="971" y="543" width="1" height="5" fill="#1034f0"/>
<rect x="971" y="548" width="1" height="4" fill="#1838f8"/>
<rect x="971" y="552" width="1" height="4" fill="#0a18b8"/>
<rect x="971" y="556" width="1" height="12" fill="#1030e8"/>
<rect x="971" y="568" width="1" height="13" fill="#1030e8"/>
<rect x="973" y="581" width="1" height="4" fill="#1a40ff"/>
<rect x="973" y="552" width="1" height="4" fill="#1838f8"/>
<rect x="976" y="568" width="1" height="13" fill="#1034f0"/>
<rect x="978" y="581" width="1" height="4" fill="#1838f8"/>
<rect x="979" y="556" width="1" height="12" fill="#0814a8"/>
<rect x="980" y="535" width="1" height="4" fill="#1a40ff"/>
<rect x="980" y="539" width="1" height="4" fill="#1034f0"/>
<rect x="980" y="543" width="1" height="5" fill="#1838f8"/>
<rect x="980" y="548" width="1" height="4" fill="#0c20d0"/>
<rect x="980" y="552" width="1" height="4" fill="#1030e8"/>
<rect x="981" y="568" width="1" height="13" fill="#1a40ff"/>
<rect x="981" y="581" width="1" height="4" fill="#0814a8"/>
<rect x="982" y="556" width="1" height="12" fill="#1028e0"/>
<rect x="982" y="568" width="1" height="13" fill="#1034f0"/>
<rect x="982" y="581" width="1" height="4" fill="#0c20d0"/>
<rect x="984" y="556" width="1" height="12" fill="#1838f8"/>
<rect x="984" y="581" width="1" height="4" fill="#1034f0"/>
<rect x="985" y="568" width="1" height="13" fill="#0814a8"/>
<rect x="986" y="522" width="1" height="4" fill="#1838f8"/>
<rect x="986" y="526" width="1" height="4" fill="#1034f0"/>
<rect x="986" y="530" width="1" height="5" fill="#0c20d0"/>
<rect x="986" y="535" width="1" height="4" fill="#0814a8"/>
<rect x="986" y="543" width="1" height="5" fill="#1030e8"/>
<rect x="986" y="548" width="1" height="4" fill="#1034f0"/>
<rect x="987" y="556" width="1" height="12" fill="#1a40ff"/>
<rect x="987" y="568" width="1" height="13" fill="#1034f0"/>
<rect x="987" y="581" width="1" height="4" fill="#0814a8"/>
<rect x="987" y="585" width="1" height="21" fill="url(#cg)"/>
<rect x="989" y="535" width="1" height="4" fill="#0c20d0"/>
<rect x="989" y="539" width="1" height="4" fill="#1034f0"/>
<rect x="989" y="548" width="1" height="4" fill="#0814a8"/>
<rect x="989" y="552" width="1" height="4" fill="#1a40ff"/>
<rect x="989" y="556" width="1" height="12" fill="#1a40ff"/>
<rect x="989" y="568" width="1" height="13" fill="#1838f8"/>
<rect x="990" y="539" width="1" height="4" fill="#0a18b8"/>
<rect x="990" y="543" width="1" height="5" fill="#1838f8"/>
<rect x="990" y="548" width="1" height="4" fill="#0814a8"/>
<rect x="992" y="568" width="1" height="13" fill="#0814a8"/>
<rect x="992" y="581" width="1" height="4" fill="#0814a8"/>
<rect x="993" y="526" width="1" height="4" fill="#0a18b8"/>
<rect x="993" y="530" width="1" height="5" fill="#1028e0"/>
<rect x="993" y="535" width="1" height="4" fill="#0a18b8"/>
<rect x="993" y="539" width="1" height="4" fill="#1030e8"/>
<rect x="993" y="543" width="1" height="5" fill="#1030e8"/>
<rect x="993" y="548" width="1" height="4" fill="#1028e0"/>
<rect x="993" y="552" width="1" height="4" fill="#1a40ff"/>
<rect x="993" y="556" width="1" height="12" fill="#1034f0"/>
<rect x="993" y="568" width="1" height="13" fill="#1034f0"/>
<rect x="995" y="543" width="1" height="5" fill="#0c20d0"/>
<rect x="995" y="548" width="1" height="4" fill="#1034f0"/>
<rect x="995" y="552" width="1" height="4" fill="#1028e0"/>
<rect x="995" y="556" width="1" height="12" fill="#1028e0"/>
<rect x="995" y="568" width="1" height="13" fill="#1034f0"/>
<rect x="995" y="581" width="1" height="4" fill="#1a40ff"/>
<rect x="996" y="556" width="1" height="12" fill="#0a18b8"/>
<rect x="996" y="568" width="1" height="13" fill="#1034f0"/>
<rect x="998" y="530" width="1" height="5" fill="#0a18b8"/>
<rect x="998" y="535" width="1" height="4" fill="#0c20d0"/>
<rect x="998" y="539" width="1" height="4" fill="#1838f8"/>
<rect x="998" y="543" width="1" height="5" fill="#1a40ff"/>
<rect x="998" y="548" width="1" height="4" fill="#1a40ff"/>
<rect x="998" y="552" width="1" height="4" fill="#1838f8"/>
<rect x="998" y="556" width="1" height="12" fill="#1030e8"/>
<rect x="998" y="568" width="1" height="13" fill="#0814a8"/>
<rect x="998" y="581" width="1" height="4" fill="#0c20d0"/>
<rect x="998" y="581" width="1" height="4" fill="#1030e8"/>
<rect x="998" y="585" width="1" height="21" fill="url(#cg)"/>
<rect x="1000" y="581" width="1" height="4" fill="#0c20d0"/>
<rect x="1001" y="568" width="1" height="13" fill="#0a18b8"/>
<rect x="1002" y="568" width="1" height="13" fill="#1838f8"/>
<rect x="1002" y="581" width="1" height="4" fill="#1034f0"/>
<rect x="1002" y="552" width="1" height="4" fill="#0c20d0"/>
<rect x="1002" y="585" width="1" height="21" fill="url(#cg)"/>
<rect x="1004" y="522" width="1" height="4" fill="#1838f8"/>
<rect x="1004" y="526" width="1" height="4" fill="#0c20d0"/>
<rect x="1004" y="530" width="1" height="5" fill="#1034f0"/>
<rect x="1004" y="535" width="1" height="4" fill="#0814a8"/>
<rect x="1004" y="539" width="1" height="4" fill="#1a40ff"/>
<rect x="1004" y="543" width="1" height="5" fill="#1030e8"/>
<rect x="1004" y="548" width="1" height="4" fill="#1028e0"/>
<rect x="1004" y="552" width="1" height="4" fill="#1a40ff"/>
<rect x="1004" y="556" width="1" height="12" fill="#0c20d0"/>
<rect x="1004" y="568" width="1" height="13" fill="#1034f0"/>
<rect x="1004" y="581" width="1" height="4" fill="#0c20d0"/>
<rect x="1005" y="581" width="1" height="4" fill="#0814a8"/>
<rect x="1006" y="552" width="1" height="4" fill="#1838f8"/>
<rect x="1006" y="556" width="1" height="12" fill="#1034f0"/>
<rect x="1006" y="568" width="1" height="13" fill="#1838f8"/>
<rect x="1008" y="530" width="1" height="5" fill="#1030e8"/>
<rect x="1008" y="535" width="1" height="4" fill="#1028e0"/>
<rect x="1008" y="539" width="1" height="4" fill="#0c20d0"/>
<rect x="1008" y="543" width="1" height="5" fill="#1030e8"/>
<rect x="1008" y="548" width="1" height="4" fill="#1838f8"/>
<rect x="1008" y="568" width="1" height="13" fill="#0a18b8"/>
<rect x="1011" y="522" width="1" height="4" fill="#1028e0"/>
<rect x="1011" y="526" width="1" height="4" fill="#1034f0"/>
<rect x="1011" y="535" width="1" height="4" fill="#0c20d0"/>
<rect x="1011" y="539" width="1" height="4" fill="#1034f0"/>
<rect x="1011" y="543" width="1" height="5" fill="#1030e8"/>
<rect x="1011" y="548" width="1" height="4" fill="#1838f8"/>
<rect x="1011" y="552" width="1" height="4" fill="#0a18b8"/>
<rect x="1012" y="581" width="1" height="4" fill="#0814a8"/>
<rect x="1013" y="548" width="1" height="4" fill="#1a40ff"/>
<rect x="1013" y="552" width="1" height="4" fill="#0c20d0"/>
<rect x="1013" y="556" width="1" height="12" fill="#0c20d0"/>
<rect x="1017" y="543" width="1" height="5" fill="#1a40ff"/>
<rect x="1017" y="552" width="1" height="4" fill="#0814a8"/>
<rect x="1017" y="556" width="1" height="12" fill="#1a40ff"/>
<rect x="1017" y="581" width="1" height="4" fill="#1a40ff"/>
<rect x="1017" y="552" width="1" height="4" fill="#1838f8"/>
<rect x="1018" y="581" width="1" height="4" fill="#1a40ff"/>
<rect x="1019" y="530" width="1" height="5" fill="#1030e8"/>
<rect x="1019" y="535" width="1" height="4" fill="#1034f0"/>
<rect x="1019" y="539" width="1" height="4" fill="#1838f8"/>
<rect x="1019" y="543" width="1" height="5" fill="#1030e8"/>
<rect x="1019" y="548" width="1" height="4" fill="#1034f0"/>
<rect x="1019" y="552" width="1" height="4" fill="#1838f8"/>
<rect x="1019" y="556" width="1" height="12" fill="#1028e0"/>
<rect x="1019" y="568" width="1" height="13" fill="#0814a8"/>
<rect x="1019" y="585" width="1" height="21" fill="url(#cg)"/>
<rect x="1020" y="535" width="1" height="4" fill="#0a18b8"/>
<rect x="1020" y="539" width="1" height="4" fill="#0c20d0"/>
<rect x="1020" y="543" width="1" height="5" fill="#1034f0"/>
<rect x="1020" y="548" width="1" height="4" fill="#1034f0"/>
<rect x="1020" y="552" width="1" height="4" fill="#0a18b8"/>
<rect x="1021" y="568" width="1" height="13" fill="#1028e0"/>
<rect x="1022" y="535" width="1" height="4" fill="#1030e8"/>
<rect x="1022" y="539" width="1" height="4" fill="#0a18b8"/>
<rect x="1022" y="543" width="1" height="5" fill="#0a18b8"/>
<rect x="1022" y="552" width="1" height="4" fill="#1838f8"/>
<rect x="1022" y="556" width="1" height="12" fill="#0c20d0"/>
<rect x="1022" y="568" width="1" height="13" fill="#0814a8"/>
<rect x="1023" y="535" width="1" height="4" fill="#1a40ff"/>
<rect x="1023" y="539" width="1" height="4" fill="#1030e8"/>
<rect x="1023" y="543" width="1" height="5" fill="#1a40ff"/>
<rect x="1023" y="548" width="1" height="4" fill="#0a18b8"/>
<rect x="1023" y="552" width="1" height="4" fill="#0c20d0"/>
<rect x="1023" y="556" width="1" height="12" fill="#1838f8"/>
<rect x="1023" y="568" width="1" height="13" fill="#1028e0"/>
<rect x="1024" y="556" width="1" height="12" fill="#1028e0"/>
<rect x="1025" y="530" width="1" height="5" fill="#1028e0"/>
<rect x="1025" y="535" width="1" height="4" fill="#1838f8"/>
<rect x="1025" y="539" width="1" height="4" fill="#0a18b8"/>
<rect x="1025" y="543" width="1" height="5" fill="#1a40ff"/>
<rect x="1025" y="548" width="1" height="4" fill="#1028e0"/>
<rect x="1025" y="552" width="1" height="4" fill="#1a40ff"/>
<rect x="1025" y="556" width="1" height="12" fill="#1030e8"/>
<rect x="1026" y="568" width="1" height="13" fill="#1028e0"/>
<rect x="1026" y="568" width="1" height="13" fill="#0c20d0"/>
<rect x="1026" y="581" width="1" height="4" fill="#1838f8"/>
<rect x="1031" y="568" width="1" height="13" fill="#0a18b8"/>
<rect x="1031" y="552" width="1" height="4" fill="#0814a8"/>
<rect x="1032" y="514" width="1" height="8" fill="#1838f8"/>
<rect x="1034" y="539" width="1" height="4" fill="#0814a8"/>
<rect x="1034" y="543" width="1" height="5" fill="#1030e8"/>
<rect x="1034" y="548" width="1" height="4" fill="#1034f0"/>
<rect x="1034" y="552" width="1" height="4" fill="#1028e0"/>
<rect x="1034" y="556" width="1" height="12" fill="#1028e0"/>
<rect x="1036" y="530" width="1" height="5" fill="#1030e8"/>
<rect x="1036" y="535" width="1" height="4" fill="#1838f8"/>
<rect x="1036" y="539" width="1" height="4" fill="#0c20d0"/>
<rect x="1036" y="543" width="1" height="5" fill="#1030e8"/>
<rect x="1036" y="548" width="1" height="4" fill="#0a18b8"/>
<rect x="1036" y="552" width="1" height="4" fill="#1028e0"/>
<rect x="1038" y="568" width="1" height="13" fill="#0814a8"/>
<rect x="1038" y="556" width="1" height="12" fill="#1030e8"/>
<rect x="1039" y="552" width="1" height="4" fill="#1028e0"/>
<rect x="1039" y="556" width="1" height="12" fill="#1028e0"/>
<rect x="1039" y="568" width="1" height="13" fill="#1028e0"/>
<rect x="1040" y="543" width="1" height="5" fill="#1838f8"/>
<rect x="1040" y="548" width="1" height="4" fill="#1838f8"/>
<rect x="1040" y="552" width="1" height="4" fill="#1034f0"/>
<rect x="1040" y="556" width="1" height="12" fill="#0a18b8"/>
<rect x="1041" y="526" width="1" height="4" fill="#1838f8"/>
<rect x="1041" y="530" width="1" height="5" fill="#1838f8"/>
<rect x="1041" y="535" width="1" height="4" fill="#1034f0"/>
<rect x="1041" y="539" width="1" height="4" fill="#1a40ff"/>
<rect x="1041" y="543" width="1" height="5" fill="#1034f0"/>
<rect x="1041" y="548" width="1" height="4" fill="#1838f8"/>
<rect x="1041" y="552" width="1" height="4" fill="#1028e0"/>
<rect x="1041" y="556" width="1" height="12" fill="#1838f8"/>
<rect x="1041" y="568" width="1" height="13" fill="#1034f0"/>
<rect x="1041" y="568" width="1" height="13" fill="#0814a8"/>
<rect x="1042" y="556" width="1" height="12" fill="#0814a8"/>
<rect x="1043" y="568" width="1" height="13" fill="#1a40ff"/>
<rect x="1043" y="581" width="1" height="4" fill="#1028e0"/>
<rect x="1043" y="585" width="1" height="21" fill="url(#cg)"/>
<rect x="1047" y="543" width="1" height="5" fill="#1028e0"/>
<rect x="1047" y="548" width="1" height="4" fill="#0814a8"/>
<rect x="1047" y="552" width="1" height="4" fill="#1030e8"/>
<rect x="1048" y="568" width="1" height="13" fill="#1838f8"/>
<rect x="1050" y="543" width="1" height="5" fill="#1034f0"/>
<rect x="1050" y="548" width="1" height="4" fill="#1838f8"/>
<rect x="1050" y="552" width="1" height="4" fill="#1030e8"/>
<rect x="1050" y="556" width="1" height="12" fill="#1838f8"/>
<rect x="1050" y="568" width="1" height="13" fill="#1a40ff"/>
<rect x="1051" y="568" width="1" height="13" fill="#0a18b8"/>
<rect x="1053" y="568" width="1" height="13" fill="#1a40ff"/>
<rect x="1053" y="581" width="1" height="4" fill="#1030e8"/>
<rect x="1053" y="556" width="1" height="12" fill="#0c20d0"/>
<rect x="1055" y="568" width="1" height="13" fill="#0814a8"/>
<rect x="1055" y="581" width="1" height="4" fill="#1034f0"/>
<rect x="1055" y="556" width="1" height="12" fill="#1028e0"/>
<rect x="1056" y="530" width="1" height="5" fill="#0a18b8"/>
<rect x="1056" y="535" width="1" height="4" fill="#1034f0"/>
<rect x="1056" y="543" width="1" height="5" fill="#0a18b8"/>
<rect x="1056" y="548" width="1" height="4" fill="#0a18b8"/>
<rect x="1056" y="556" width="1" height="12" fill="#0c20d0"/>
<rect x="1057" y="568" width="1" height="13" fill="#1a40ff"/>
<rect x="1062" y="530" width="1" height="5" fill="#0c20d0"/>
<rect x="1062" y="539" width="1" height="4" fill="#0c20d0"/>
<rect x="1062" y="543" width="1" height="5" fill="#1028e0"/>
<rect x="1062" y="548" width="1" height="4" fill="#1030e8"/>
<rect x="1062" y="556" width="1" height="12" fill="#0c20d0"/>
<rect x="1062" y="568" width="1" height="13" fill="#1028e0"/>
<rect x="1062" y="581" width="1" height="4" fill="#1a40ff"/>
<rect x="1062" y="585" width="1" height="21" fill="url(#cg)"/>
<rect x="1063" y="526" width="1" height="4" fill="#0c20d0"/>
<rect x="1063" y="530" width="1" height="5" fill="#1838f8"/>
<rect x="1063" y="535" width="1" height="4" fill="#0a18b8"/>
<rect x="1063" y="539" width="1" height="4" fill="#0814a8"/>
<rect x="1063" y="548" width="1" height="4" fill="#1028e0"/>
<rect x="1063" y="552" width="1" height="4" fill="#0814a8"/>
<rect x="1063" y="556" width="1" height="12" fill="#1030e8"/>
<rect x="1063" y="514" width="1" height="8" fill="#0a18b8"/>
<rect x="1064" y="535" width="1" height="4" fill="#0814a8"/>
<rect x="1064" y="539" width="1" height="4" fill="#1838f8"/>
<rect x="1064" y="543" width="1" height="5" fill="#1838f8"/>
<rect x="1064" y="548" width="1" height="4" fill="#0a18b8"/>
<rect x="1064" y="552" width="1" height="4" fill="#1034f0"/>
<rect x="1064" y="556" width="1" height="12" fill="#1034f0"/>
<rect x="1064" y="568" width="1" height="13" fill="#0c20d0"/>
<rect x="1064" y="581" width="1" height="4" fill="#0c20d0"/>
<rect x="1065" y="548" width="1" height="4" fill="#0c20d0"/>
<rect x="1065" y="552" width="1" height="4" fill="#1a40ff"/>
<rect x="1065" y="556" width="1" height="12" fill="#1030e8"/>
<rect x="1065" y="568" width="1" height="13" fill="#0a18b8"/>
<rect x="1065" y="581" width="1" height="4" fill="#0a18b8"/>
<rect x="1065" y="514" width="1" height="8" fill="#1034f0"/>
<rect x="1067" y="568" width="1" height="13" fill="#1030e8"/>
<rect x="1068" y="581" width="1" height="4" fill="#1034f0"/>
<rect x="1070" y="535" width="1" height="4" fill="#1838f8"/>
<rect x="1070" y="539" width="1" height="4" fill="#1838f8"/>
<rect x="1070" y="543" width="1" height="5" fill="#0814a8"/>
<rect x="1070" y="548" width="1" height="4" fill="#0c20d0"/>
<rect x="1070" y="552" width="1" height="4" fill="#1030e8"/>
<rect x="1070" y="556" width="1" height="12" fill="#1a40ff"/>
<rect x="1070" y="581" width="1" height="4" fill="#1838f8"/>
<rect x="1070" y="568" width="1" height="13" fill="#1034f0"/>
<rect x="1070" y="585" width="1" height="21" fill="url(#cg)"/>
<rect x="1073" y="552" width="1" height="4" fill="#1034f0"/>
<rect x="1073" y="581" width="1" height="4" fill="#1838f8"/>
<rect x="1073" y="581" width="1" height="4" fill="#1034f0"/>
<rect x="1073" y="585" width="1" height="21" fill="url(#cg)"/>
<rect x="1074" y="543" width="1" height="5" fill="#1030e8"/>
<rect x="1074" y="548" width="1" height="4" fill="#0814a8"/>
<rect x="1074" y="552" width="1" height="4" fill="#0a18b8"/>
<rect x="1074" y="556" width="1" height="12" fill="#0a18b8"/>
<rect x="1074" y="568" width="1" height="13" fill="#0814a8"/>
<rect x="1075" y="556" width="1" height="12" fill="#1a40ff"/>
<rect x="1075" y="585" width="1" height="21" fill="url(#cg)"/>
<rect x="1078" y="568" width="1" height="13" fill="#1034f0"/>
<rect x="1078" y="581" width="1" height="4" fill="#1838f8"/>
<rect x="1078" y="568" width="1" height="13" fill="#0a18b8"/>
<rect x="1079" y="568" width="1" height="13" fill="#1030e8"/>
<rect x="1080" y="568" width="1" height="13" fill="#1028e0"/>
<rect x="1080" y="585" width="1" height="21" fill="url(#cg)"/>
</g>
<rect x="95.50" y="695.50" width="985.00" height="15.00" fill="#00ff00" stroke="#111" stroke-width="1"/>
<text x="29.60" y="706.80" font-size="13" text-anchor="start" textLength="51.2" lengthAdjust="spacingAndGlyphs" fill="#333" >Sunlight?</text>
<rect x="95.00" y="695.00" width="2.00" height="16.00" fill="#111" />
<line x1="136.50" y1="710.50" x2="136.50" y2="714.50" stroke="#333" stroke-width="1" />
<line x1="177.50" y1="710.50" x2="177.50" y2="714.50" stroke="#333" stroke-width="1" />
<line x1="218.50" y1="710.50" x2="218.50" y2="718.50" stroke="#333" stroke-width="1" />
<line x1="259.50" y1="710.50" x2="259.50" y2="714.50" stroke="#333" stroke-width="1" />
<line x1="300.50" y1="710.50" x2="300.50" y2="714.50" stroke="#333" stroke-width="1" />
<line x1="341.50" y1="710.50" x2="341.50" y2="718.50" stroke="#333" stroke-width="1" />
<line x1="382.50" y1="710.50" x2="382.50" y2="714.50" stroke="#333" stroke-width="1" />
<line x1="423.50" y1="710.50" x2="423.50" y2="714.50" stroke="#333" stroke-width="1" />
<line x1="464.50" y1="710.50" x2="464.50" y2="718.50" stroke="#333" stroke-width="1" />
<line x1="505.50" y1="710.50" x2="505.50" y2="714.50" stroke="#333" stroke-width="1" />
<line x1="546.50" y1="710.50" x2="546.50" y2="714.50" stroke="#333" stroke-width="1" />
<line x1="588.50" y1="710.50" x2="588.50" y2="718.50" stroke="#333" stroke-width="1" />
<line x1="629.50" y1="710.50" x2="629.50" y2="714.50" stroke="#333" stroke-width="1" />
<line x1="670.50" y1="710.50" x2="670.50" y2="714.50" stroke="#333" stroke-width="1" />
<line x1="711.50" y1="710.50" x2="711.50" y2="718.50" stroke="#333" stroke-width="1" />
<line x1="752.50" y1="710.50" x2="752.50" y2="714.50" stroke="#333" stroke-width="1" />
<line x1="793.50" y1="710.50" x2="793.50" y2="714.50" stroke="#333" stroke-width="1" />
<line x1="834.50" y1="710.50" x2="834.50" y2="718.50" stroke="#333" stroke-width="1" />
<line x1="875.50" y1="710.50" x2="875.50" y2="714.50" stroke="#333" stroke-width="1" />
<line x1="916.50" y1="710.50" x2="916.50" y2="714.50" stroke="#333" stroke-width="1" />
<line x1="957.50" y1="710.50" x2="957.50" y2="718.50" stroke="#333" stroke-width="1" />
<line x1="998.50" y1="710.50" x2="998.50" y2="714.50" stroke="#333" stroke-width="1" />
<line x1="1039.50" y1="710.50" x2="1039.50" y2="714.50" stroke="#333" stroke-width="1" />
<line x1="1080.50" y1="710.50" x2="1080.50" y2="718.50" stroke="#333" stroke-width="1" />
<text x="236.62" y="733.70" font-size="13" text-anchor="end" textLength="36.2" lengthAdjust="spacingAndGlyphs" fill="#333" >03:00</text>
<text x="236.62" y="748.70" font-size="13" text-anchor="end" textLength="36.2" lengthAdjust="spacingAndGlyphs" fill="#333" >15.89</text>
<text x="236.62" y="763.70" font-size="13" text-anchor="end" textLength="36.2" lengthAdjust="spacingAndGlyphs" fill="#333" >18.35</text>
<text x="236.62" y="778.50" font-size="13" text-anchor="end" textLength="44.2" lengthAdjust="spacingAndGlyphs" fill="#333" >310.29</text>
<text x="359.75" y="733.70" font-size="13" text-anchor="end" textLength="36.2" lengthAdjust="spacingAndGlyphs" fill="#333" >06:00</text>
<text x="359.75" y="748.70" font-size="13" text-anchor="end" textLength="36.2" lengthAdjust="spacingAndGlyphs" fill="#333" >16.49</text>
<text x="359.75" y="763.70" font-size="13" text-anchor="end" textLength="36.2" lengthAdjust="spacingAndGlyphs" fill="#333" >17.87</text>
<text x="359.75" y="778.50" font-size="13" text-anchor="end" textLength="44.2" lengthAdjust="spacingAndGlyphs" fill="#333" >362.61</text>
<text x="482.88" y="733.70" font-size="13" text-anchor="end" textLength="36.2" lengthAdjust="spacingAndGlyphs" fill="#333" >09:00</text>
<text x="482.88" y="748.70" font-size="13" text-anchor="end" textLength="36.2" lengthAdjust="spacingAndGlyphs" fill="#333" >17.25</text>
<text x="482.88" y="763.70" font-size="13" text-anchor="end" textLength="36.2" lengthAdjust="spacingAndGlyphs" fill="#333" >17.37</text>
<text x="482.88" y="778.50" font-size="13" text-anchor="end" textLength="44.2" lengthAdjust="spacingAndGlyphs" fill="#333" >407.48</text>
<text x="606.00" y="733.70" font-size="13" text-anchor="end" textLength="36.2" lengthAdjust="spacingAndGlyphs" fill="#333" >12:00</text>
<text x="606.00" y="748.70" font-size="13" text-anchor="end" textLength="36.2" lengthAdjust="spacingAndGlyphs" fill="#333" >18.14</text>
<text x="606.00" y="763.70" font-size="13" text-anchor="end" textLength="36.2" lengthAdjust="spacingAndGlyphs" fill="#333" >16.84</text>
<text x="606.00" y="778.50" font-size="13" text-anchor="end" textLength="44.2" lengthAdjust="spacingAndGlyphs" fill="#333" >422.93</text>
<text x="729.12" y="733.70" font-size="13" text-anchor="end" textLength="36.2" lengthAdjust="spacingAndGlyphs" fill="#333" >15:00</text>
<text x="729.12" y="748.70" font-size="13" text-anchor="end" textLength="36.2" lengthAdjust="spacingAndGlyphs" fill="#333" >19.11</text>
<text x="729.12" y="763.70" font-size="13" text-anchor="end" textLength="36.2" lengthAdjust="spacingAndGlyphs" fill="#333" >16.27</text>
<text x="729.12" y="778.50" font-size="13" text-anchor="end" textLength="44.2" lengthAdjust="spacingAndGlyphs" fill="#333" >390.58</text>
<text x="852.25" y="733.70" font-size="13" text-anchor="end" textLength="36.2" lengthAdjust="spacingAndGlyphs" fill="#333" >18:00</text>
<text x="852.25" y="748.70" font-size="13" text-anchor="end" textLength="36.2" lengthAdjust="spacingAndGlyphs" fill="#333" >20.04</text>
<text x="852.25" y="763.70" font-size="13" text-anchor="end" textLength="36.2" lengthAdjust="spacingAndGlyphs" fill="#333" >15.68</text>
<text x="852.25" y="778.50" font-size="13" text-anchor="end" textLength="44.2" lengthAdjust="spacingAndGlyphs" fill="#333" >318.55</text>
<text x="975.38" y="733.70" font-size="13" text-anchor="end" textLength="36.2" lengthAdjust="spacingAndGlyphs" fill="#333" >21:00</text>
<text x="975.38" y="748.70" font-size="13" text-anchor="end" textLength="36.2" lengthAdjust="spacingAndGlyphs" fill="#333" >20.85</text>
<text x="975.38" y="763.70" font-size="13" text-anchor="end" textLength="36.2" lengthAdjust="spacingAndGlyphs" fill="#333" >15.05</text>
<text x="975.38" y="778.50" font-size="13" text-anchor="end" textLength="44.2" lengthAdjust="spacingAndGlyphs" fill="#333" >236.10</text>
<text x="1098.50" y="733.70" font-size="13" text-anchor="end" textLength="36.2" lengthAdjust="spacingAndGlyphs" fill="#333" >00:00</text>
<text x="1098.50" y="748.70" font-size="13" text-anchor="end" textLength="36.2" lengthAdjust="spacingAndGlyphs" fill="#333" >21.52</text>
<text x="1098.50" y="763.70" font-size="13" text-anchor="end" textLength="36.2" lengthAdjust="spacingAndGlyphs" fill="#333" >14.40</text>
<text x="1098.50" y="778.50" font-size="13" text-anchor="end" textLength="44.2" lengthAdjust="spacingAndGlyphs" fill="#333" >165.72</text>
<text x="1063.00" y="746.00" font-size="13" text-anchor="start" textLength="60.6" lengthAdjust="spacingAndGlyphs" fill="#333" >2013-101</text>
<text x="60.50" y="749.00" font-size="13" text-anchor="end" textLength="44.2" lengthAdjust="spacingAndGlyphs" fill="#333" >LT (hrs)</text>
<text x="60.50" y="763.70" font-size="13" text-anchor="end" textLength="14.2" lengthAdjust="spacingAndGlyphs" fill="#333" >Rs</text>
<text x="61.00" y="778.70" font-size="13" text-anchor="end" textLength="47.9" lengthAdjust="spacingAndGlyphs" fill="#333" >Dipole L</text>
<defs><linearGradient id="cmap" x1="0" y1="0" x2="0" y2="1"><stop offset="0.000" stop-color="#d05a68"/><stop offset="0.030" stop-color="#e03040"/><stop offset="0.080" stop-color="#f04000"/><stop offset="0.130" stop-color="#f86000"/><stop offset="0.180" stop-color="#f87800"/><stop offset="0.240" stop-color="#f09000"/><stop offset="0.290" stop-color="#e0b000"/><stop offset="0.340" stop-color="#d0d800"/><stop offset="0.390" stop-color="#c0e800"/><stop offset="0.450" stop-color="#a0f020"/><stop offset="0.500" stop-color="#60e048"/><stop offset="0.550" stop-color="#20c070"/><stop offset="0.600" stop-color="#10b080"/><stop offset="0.660" stop-color="#10a098"/><stop offset="0.710" stop-color="#1090c0"/><stop offset="0.760" stop-color="#1080e0"/><stop offset="0.820" stop-color="#1060f0"/><stop offset="0.870" stop-color="#1030ff"/><stop offset="0.920" stop-color="#0010b8"/><stop offset="0.970" stop-color="#000088"/><stop offset="1.000" stop-color="#00006a"/></linearGradient></defs>
<rect x="1092.00" y="29.60" width="12.30" height="190.80" fill="url(#cmap)" />
<line x1="1104.50" y1="29.60" x2="1104.50" y2="220.40" stroke="#333" stroke-width="1" />
<line x1="1104.30" y1="219.50" x2="1108.80" y2="219.50" stroke="#333" stroke-width="1" />
<line x1="1104.30" y1="215.50" x2="1108.80" y2="215.50" stroke="#333" stroke-width="1" />
<line x1="1104.30" y1="211.50" x2="1108.80" y2="211.50" stroke="#333" stroke-width="1" />
<line x1="1104.30" y1="207.50" x2="1108.80" y2="207.50" stroke="#333" stroke-width="1" />
<line x1="1104.30" y1="205.50" x2="1108.80" y2="205.50" stroke="#333" stroke-width="1" />
<line x1="1104.30" y1="185.50" x2="1108.80" y2="185.50" stroke="#333" stroke-width="1" />
<line x1="1104.30" y1="174.50" x2="1108.80" y2="174.50" stroke="#333" stroke-width="1" />
<line x1="1104.30" y1="167.50" x2="1108.80" y2="167.50" stroke="#333" stroke-width="1" />
<line x1="1104.30" y1="162.50" x2="1108.80" y2="162.50" stroke="#333" stroke-width="1" />
<line x1="1104.30" y1="157.50" x2="1108.80" y2="157.50" stroke="#333" stroke-width="1" />
<line x1="1104.30" y1="153.50" x2="1108.80" y2="153.50" stroke="#333" stroke-width="1" />
<line x1="1104.30" y1="150.50" x2="1108.80" y2="150.50" stroke="#333" stroke-width="1" />
<line x1="1104.30" y1="147.50" x2="1108.80" y2="147.50" stroke="#333" stroke-width="1" />
<line x1="1104.30" y1="127.50" x2="1108.80" y2="127.50" stroke="#333" stroke-width="1" />
<line x1="1104.30" y1="117.50" x2="1108.80" y2="117.50" stroke="#333" stroke-width="1" />
<line x1="1104.30" y1="110.50" x2="1108.80" y2="110.50" stroke="#333" stroke-width="1" />
<line x1="1104.30" y1="104.50" x2="1108.80" y2="104.50" stroke="#333" stroke-width="1" />
<line x1="1104.30" y1="99.50" x2="1108.80" y2="99.50" stroke="#333" stroke-width="1" />
<line x1="1104.30" y1="96.50" x2="1108.80" y2="96.50" stroke="#333" stroke-width="1" />
<line x1="1104.30" y1="92.50" x2="1108.80" y2="92.50" stroke="#333" stroke-width="1" />
<line x1="1104.30" y1="89.50" x2="1108.80" y2="89.50" stroke="#333" stroke-width="1" />
<line x1="1104.30" y1="69.50" x2="1108.80" y2="69.50" stroke="#333" stroke-width="1" />
<line x1="1104.30" y1="59.50" x2="1108.80" y2="59.50" stroke="#333" stroke-width="1" />
<line x1="1104.30" y1="52.50" x2="1108.80" y2="52.50" stroke="#333" stroke-width="1" />
<line x1="1104.30" y1="46.50" x2="1108.80" y2="46.50" stroke="#333" stroke-width="1" />
<line x1="1104.30" y1="42.50" x2="1108.80" y2="42.50" stroke="#333" stroke-width="1" />
<line x1="1104.30" y1="38.50" x2="1108.80" y2="38.50" stroke="#333" stroke-width="1" />
<line x1="1104.30" y1="35.50" x2="1108.80" y2="35.50" stroke="#333" stroke-width="1" />
<line x1="1104.30" y1="32.50" x2="1108.80" y2="32.50" stroke="#333" stroke-width="1" />
<line x1="1104.30" y1="29.50" x2="1112.90" y2="29.50" stroke="#333" stroke-width="1" />
<text x="1117.90" y="36.70" font-size="13" text-anchor="start" textLength="15.0" lengthAdjust="spacingAndGlyphs" fill="#333" >10</text>
<text x="1133.10" y="30.20" font-size="13" text-anchor="start" textLength="12.4" lengthAdjust="spacingAndGlyphs" fill="#333" >−9</text>
<line x1="1104.30" y1="87.50" x2="1112.90" y2="87.50" stroke="#333" stroke-width="1" />
<text x="1117.90" y="94.30" font-size="13" text-anchor="start" textLength="15.0" lengthAdjust="spacingAndGlyphs" fill="#333" >10</text>
<text x="1133.10" y="87.80" font-size="13" text-anchor="start" textLength="21.5" lengthAdjust="spacingAndGlyphs" fill="#333" >−10</text>
<line x1="1104.30" y1="144.50" x2="1112.90" y2="144.50" stroke="#333" stroke-width="1" />
<text x="1117.90" y="151.90" font-size="13" text-anchor="start" textLength="15.0" lengthAdjust="spacingAndGlyphs" fill="#333" >10</text>
<text x="1133.10" y="145.40" font-size="13" text-anchor="start" textLength="21.5" lengthAdjust="spacingAndGlyphs" fill="#333" >−11</text>
<line x1="1104.30" y1="202.50" x2="1112.90" y2="202.50" stroke="#333" stroke-width="1" />
<text x="1117.90" y="209.50" font-size="13" text-anchor="start" textLength="15.0" lengthAdjust="spacingAndGlyphs" fill="#333" >10</text>
<text x="1133.10" y="203.00" font-size="13" text-anchor="start" textLength="21.5" lengthAdjust="spacingAndGlyphs" fill="#333" >−12</text>
<text x="1164.80" y="124.50" font-size="13" text-anchor="middle" textLength="121.4" lengthAdjust="spacingAndGlyphs" fill="#333" transform="rotate(90 1164.8 124.5)">pressure dyne/cm^2</text>
<rect x="1092.00" y="225.20" width="12.30" height="191.00" fill="url(#cmap)" />
<line x1="1104.50" y1="225.20" x2="1104.50" y2="416.20" stroke="#333" stroke-width="1" />
<line x1="1104.30" y1="415.50" x2="1108.80" y2="415.50" stroke="#333" stroke-width="1" />
<line x1="1104.30" y1="410.50" x2="1108.80" y2="410.50" stroke="#333" stroke-width="1" />
<line x1="1104.30" y1="406.50" x2="1108.80" y2="406.50" stroke="#333" stroke-width="1" />
<line x1="1104.30" y1="403.50" x2="1108.80" y2="403.50" stroke="#333" stroke-width="1" />
<line x1="1104.30" y1="400.50" x2="1108.80" y2="400.50" stroke="#333" stroke-width="1" />
<line x1="1104.30" y1="380.50" x2="1108.80" y2="380.50" stroke="#333" stroke-width="1" />
<line x1="1104.30" y1="370.50" x2="1108.80" y2="370.50" stroke="#333" stroke-width="1" />
<line x1="1104.30" y1="363.50" x2="1108.80" y2="363.50" stroke="#333" stroke-width="1" />
<line x1="1104.30" y1="357.50" x2="1108.80" y2="357.50" stroke="#333" stroke-width="1" />
<line x1="1104.30" y1="353.50" x2="1108.80" y2="353.50" stroke="#333" stroke-width="1" />
<line x1="1104.30" y1="349.50" x2="1108.80" y2="349.50" stroke="#333" stroke-width="1" />
<line x1="1104.30" y1="345.50" x2="1108.80" y2="345.50" stroke="#333" stroke-width="1" />
<line x1="1104.30" y1="343.50" x2="1108.80" y2="343.50" stroke="#333" stroke-width="1" />
<line x1="1104.30" y1="323.50" x2="1108.80" y2="323.50" stroke="#333" stroke-width="1" />
<line x1="1104.30" y1="312.50" x2="1108.80" y2="312.50" stroke="#333" stroke-width="1" />
<line x1="1104.30" y1="305.50" x2="1108.80" y2="305.50" stroke="#333" stroke-width="1" />
<line x1="1104.30" y1="300.50" x2="1108.80" y2="300.50" stroke="#333" stroke-width="1" />
<line x1="1104.30" y1="295.50" x2="1108.80" y2="295.50" stroke="#333" stroke-width="1" />
<line x1="1104.30" y1="291.50" x2="1108.80" y2="291.50" stroke="#333" stroke-width="1" />
<line x1="1104.30" y1="288.50" x2="1108.80" y2="288.50" stroke="#333" stroke-width="1" />
<line x1="1104.30" y1="285.50" x2="1108.80" y2="285.50" stroke="#333" stroke-width="1" />
<line x1="1104.30" y1="265.50" x2="1108.80" y2="265.50" stroke="#333" stroke-width="1" />
<line x1="1104.30" y1="255.50" x2="1108.80" y2="255.50" stroke="#333" stroke-width="1" />
<line x1="1104.30" y1="248.50" x2="1108.80" y2="248.50" stroke="#333" stroke-width="1" />
<line x1="1104.30" y1="242.50" x2="1108.80" y2="242.50" stroke="#333" stroke-width="1" />
<line x1="1104.30" y1="237.50" x2="1108.80" y2="237.50" stroke="#333" stroke-width="1" />
<line x1="1104.30" y1="234.50" x2="1108.80" y2="234.50" stroke="#333" stroke-width="1" />
<line x1="1104.30" y1="230.50" x2="1108.80" y2="230.50" stroke="#333" stroke-width="1" />
<line x1="1104.30" y1="227.50" x2="1108.80" y2="227.50" stroke="#333" stroke-width="1" />
<line x1="1104.30" y1="225.50" x2="1112.90" y2="225.50" stroke="#333" stroke-width="1" />
<text x="1117.90" y="232.30" font-size="13" text-anchor="start" textLength="15.0" lengthAdjust="spacingAndGlyphs" fill="#333" >10</text>
<text x="1133.10" y="225.80" font-size="13" text-anchor="start" textLength="12.4" lengthAdjust="spacingAndGlyphs" fill="#333" >−9</text>
<line x1="1104.30" y1="282.50" x2="1112.90" y2="282.50" stroke="#333" stroke-width="1" />
<text x="1117.90" y="289.90" font-size="13" text-anchor="start" textLength="15.0" lengthAdjust="spacingAndGlyphs" fill="#333" >10</text>
<text x="1133.10" y="283.40" font-size="13" text-anchor="start" textLength="21.5" lengthAdjust="spacingAndGlyphs" fill="#333" >−10</text>
<line x1="1104.30" y1="340.50" x2="1112.90" y2="340.50" stroke="#333" stroke-width="1" />
<text x="1117.90" y="347.50" font-size="13" text-anchor="start" textLength="15.0" lengthAdjust="spacingAndGlyphs" fill="#333" >10</text>
<text x="1133.10" y="341.00" font-size="13" text-anchor="start" textLength="21.5" lengthAdjust="spacingAndGlyphs" fill="#333" >−11</text>
<line x1="1104.30" y1="398.50" x2="1112.90" y2="398.50" stroke="#333" stroke-width="1" />
<text x="1117.90" y="405.10" font-size="13" text-anchor="start" textLength="15.0" lengthAdjust="spacingAndGlyphs" fill="#333" >10</text>
<text x="1133.10" y="398.60" font-size="13" text-anchor="start" textLength="21.5" lengthAdjust="spacingAndGlyphs" fill="#333" >−12</text>
<text x="1164.80" y="320.20" font-size="13" text-anchor="middle" textLength="121.4" lengthAdjust="spacingAndGlyphs" fill="#333" transform="rotate(90 1164.8 320.2)">pressure dyne/cm^2</text>
<rect x="1092.00" y="515.00" width="12.30" height="176.20" fill="url(#cmap)" />
<line x1="1104.50" y1="515.00" x2="1104.50" y2="691.20" stroke="#333" stroke-width="1" />
<line x1="1104.30" y1="515.50" x2="1112.60" y2="515.50" stroke="#333" stroke-width="1" />
<text x="1117.80" y="523.00" font-size="13" text-anchor="start" textLength="15.0" lengthAdjust="spacingAndGlyphs" fill="#333" >10</text>
<text x="1133.00" y="516.50" font-size="13" text-anchor="start" textLength="7.6" lengthAdjust="spacingAndGlyphs" fill="#333" >4</text>
<line x1="1104.30" y1="534.50" x2="1109.10" y2="534.50" stroke="#333" stroke-width="1" />
<line x1="1104.30" y1="554.50" x2="1112.60" y2="554.50" stroke="#333" stroke-width="1" />
<text x="1117.80" y="562.16" font-size="13" text-anchor="start" textLength="15.0" lengthAdjust="spacingAndGlyphs" fill="#333" >10</text>
<text x="1133.00" y="555.66" font-size="13" text-anchor="start" textLength="7.6" lengthAdjust="spacingAndGlyphs" fill="#333" >2</text>
<line x1="1104.30" y1="573.50" x2="1109.10" y2="573.50" stroke="#333" stroke-width="1" />
<line x1="1104.30" y1="593.50" x2="1112.60" y2="593.50" stroke="#333" stroke-width="1" />
<text x="1117.80" y="601.32" font-size="13" text-anchor="start" textLength="15.0" lengthAdjust="spacingAndGlyphs" fill="#333" >10</text>
<text x="1133.00" y="594.82" font-size="13" text-anchor="start" textLength="7.6" lengthAdjust="spacingAndGlyphs" fill="#333" >0</text>
<line x1="1104.30" y1="612.50" x2="1109.10" y2="612.50" stroke="#333" stroke-width="1" />
<line x1="1104.30" y1="632.50" x2="1112.60" y2="632.50" stroke="#333" stroke-width="1" />
<text x="1117.80" y="640.48" font-size="13" text-anchor="start" textLength="15.0" lengthAdjust="spacingAndGlyphs" fill="#333" >10</text>
<text x="1133.00" y="633.98" font-size="13" text-anchor="start" textLength="12.2" lengthAdjust="spacingAndGlyphs" fill="#333" >−2</text>
<line x1="1104.30" y1="652.50" x2="1109.10" y2="652.50" stroke="#333" stroke-width="1" />
<line x1="1104.30" y1="671.50" x2="1112.60" y2="671.50" stroke="#333" stroke-width="1" />
<text x="1117.80" y="679.64" font-size="13" text-anchor="start" textLength="15.0" lengthAdjust="spacingAndGlyphs" fill="#333" >10</text>
<text x="1133.00" y="673.14" font-size="13" text-anchor="start" textLength="12.2" lengthAdjust="spacingAndGlyphs" fill="#333" >−4</text>
<line x1="1104.30" y1="691.50" x2="1109.10" y2="691.50" stroke="#333" stroke-width="1" />
<text x="1156.60" y="601.75" font-size="13" text-anchor="middle" textLength="168.1" lengthAdjust="spacingAndGlyphs" fill="#333" transform="rotate(90 1156.6 601.75)">intensity 1/(s cm^2 ster keV)</text>
<line x1="1090.50" y1="424.60" x2="1103.00" y2="429.10" stroke="#0000ff" stroke-width="1.2" />
<text x="1107.80" y="432.90" font-size="13" text-anchor="start" textLength="52.4" lengthAdjust="spacingAndGlyphs" fill="#333" >CHEMS–P</text>
<line x1="1090.50" y1="439.60" x2="1103.00" y2="444.10" stroke="#ff0000" stroke-width="1.2" />
<text x="1107.80" y="447.90" font-size="13" text-anchor="start" textLength="51.8" lengthAdjust="spacingAndGlyphs" fill="#333" >LEMMS–P</text>
<line x1="1090.50" y1="454.60" x2="1103.00" y2="459.10" stroke="#00ff00" stroke-width="1.2" />
<text x="1107.80" y="462.90" font-size="13" text-anchor="start" textLength="54.4" lengthAdjust="spacingAndGlyphs" fill="#333" >CHEMS–O</text>
<text x="82.80" y="437.50" font-size="13" text-anchor="end" textLength="12.9" lengthAdjust="spacingAndGlyphs" fill="#333" >−9</text>
<text x="68.30" y="443.90" font-size="13" text-anchor="end" textLength="13.6" lengthAdjust="spacingAndGlyphs" fill="#333" >10</text>
<text x="82.80" y="459.60" font-size="13" text-anchor="end" textLength="21.0" lengthAdjust="spacingAndGlyphs" fill="#333" >−10</text>
<text x="60.20" y="466.00" font-size="13" text-anchor="end" textLength="13.6" lengthAdjust="spacingAndGlyphs" fill="#333" >10</text>
<text x="82.80" y="481.70" font-size="13" text-anchor="end" textLength="21.0" lengthAdjust="spacingAndGlyphs" fill="#333" >−11</text>
<text x="60.20" y="488.10" font-size="13" text-anchor="end" textLength="13.6" lengthAdjust="spacingAndGlyphs" fill="#333" >10</text>
<text x="82.80" y="503.80" font-size="13" text-anchor="end" textLength="21.0" lengthAdjust="spacingAndGlyphs" fill="#333" >−12</text>
<text x="60.20" y="510.20" font-size="13" text-anchor="end" textLength="13.6" lengthAdjust="spacingAndGlyphs" fill="#333" >10</text>
<defs><clipPath id="c1"><rect x="216.5" y="802.5" width="150" height="148"/></clipPath><clipPath id="c3"><rect x="804.5" y="802.5" width="150" height="148"/></clipPath></defs>
<line x1="208.50" y1="803.50" x2="216.50" y2="803.50" stroke="#333" stroke-width="1" />
<line x1="212.50" y1="805.50" x2="216.50" y2="805.50" stroke="#333" stroke-width="1" />
<line x1="212.50" y1="807.50" x2="216.50" y2="807.50" stroke="#333" stroke-width="1" />
<line x1="212.50" y1="808.50" x2="216.50" y2="808.50" stroke="#333" stroke-width="1" />
<line x1="212.50" y1="810.50" x2="216.50" y2="810.50" stroke="#333" stroke-width="1" />
<line x1="212.50" y1="812.50" x2="216.50" y2="812.50" stroke="#333" stroke-width="1" />
<line x1="212.50" y1="814.50" x2="216.50" y2="814.50" stroke="#333" stroke-width="1" />
<line x1="212.50" y1="816.50" x2="216.50" y2="816.50" stroke="#333" stroke-width="1" />
<line x1="212.50" y1="818.50" x2="216.50" y2="818.50" stroke="#333" stroke-width="1" />
<line x1="212.50" y1="819.50" x2="216.50" y2="819.50" stroke="#333" stroke-width="1" />
<line x1="208.50" y1="821.50" x2="216.50" y2="821.50" stroke="#333" stroke-width="1" />
<line x1="212.50" y1="823.50" x2="216.50" y2="823.50" stroke="#333" stroke-width="1" />
<line x1="212.50" y1="825.50" x2="216.50" y2="825.50" stroke="#333" stroke-width="1" />
<line x1="212.50" y1="827.50" x2="216.50" y2="827.50" stroke="#333" stroke-width="1" />
<line x1="212.50" y1="829.50" x2="216.50" y2="829.50" stroke="#333" stroke-width="1" />
<line x1="212.50" y1="830.50" x2="216.50" y2="830.50" stroke="#333" stroke-width="1" />
<line x1="212.50" y1="832.50" x2="216.50" y2="832.50" stroke="#333" stroke-width="1" />
<line x1="212.50" y1="834.50" x2="216.50" y2="834.50" stroke="#333" stroke-width="1" />
<line x1="212.50" y1="836.50" x2="216.50" y2="836.50" stroke="#333" stroke-width="1" />
<line x1="212.50" y1="838.50" x2="216.50" y2="838.50" stroke="#333" stroke-width="1" />
<line x1="208.50" y1="840.50" x2="216.50" y2="840.50" stroke="#333" stroke-width="1" />
<line x1="212.50" y1="841.50" x2="216.50" y2="841.50" stroke="#333" stroke-width="1" />
<line x1="212.50" y1="843.50" x2="216.50" y2="843.50" stroke="#333" stroke-width="1" />
<line x1="212.50" y1="845.50" x2="216.50" y2="845.50" stroke="#333" stroke-width="1" />
<line x1="212.50" y1="847.50" x2="216.50" y2="847.50" stroke="#333" stroke-width="1" />
<line x1="212.50" y1="849.50" x2="216.50" y2="849.50" stroke="#333" stroke-width="1" />
<line x1="212.50" y1="851.50" x2="216.50" y2="851.50" stroke="#333" stroke-width="1" />
<line x1="212.50" y1="853.50" x2="216.50" y2="853.50" stroke="#333" stroke-width="1" />
<line x1="212.50" y1="854.50" x2="216.50" y2="854.50" stroke="#333" stroke-width="1" />
<line x1="212.50" y1="856.50" x2="216.50" y2="856.50" stroke="#333" stroke-width="1" />
<line x1="208.50" y1="858.50" x2="216.50" y2="858.50" stroke="#333" stroke-width="1" />
<line x1="212.50" y1="860.50" x2="216.50" y2="860.50" stroke="#333" stroke-width="1" />
<line x1="212.50" y1="862.50" x2="216.50" y2="862.50" stroke="#333" stroke-width="1" />
<line x1="212.50" y1="864.50" x2="216.50" y2="864.50" stroke="#333" stroke-width="1" />
<line x1="212.50" y1="865.50" x2="216.50" y2="865.50" stroke="#333" stroke-width="1" />
<line x1="212.50" y1="867.50" x2="216.50" y2="867.50" stroke="#333" stroke-width="1" />
<line x1="212.50" y1="869.50" x2="216.50" y2="869.50" stroke="#333" stroke-width="1" />
<line x1="212.50" y1="871.50" x2="216.50" y2="871.50" stroke="#333" stroke-width="1" />
<line x1="212.50" y1="873.50" x2="216.50" y2="873.50" stroke="#333" stroke-width="1" />
<line x1="212.50" y1="875.50" x2="216.50" y2="875.50" stroke="#333" stroke-width="1" />
<line x1="208.50" y1="876.50" x2="216.50" y2="876.50" stroke="#333" stroke-width="1" />
<line x1="212.50" y1="878.50" x2="216.50" y2="878.50" stroke="#333" stroke-width="1" />
<line x1="212.50" y1="880.50" x2="216.50" y2="880.50" stroke="#333" stroke-width="1" />
<line x1="212.50" y1="882.50" x2="216.50" y2="882.50" stroke="#333" stroke-width="1" />
<line x1="212.50" y1="884.50" x2="216.50" y2="884.50" stroke="#333" stroke-width="1" />
<line x1="212.50" y1="886.50" x2="216.50" y2="886.50" stroke="#333" stroke-width="1" />
<line x1="212.50" y1="887.50" x2="216.50" y2="887.50" stroke="#333" stroke-width="1" />
<line x1="212.50" y1="889.50" x2="216.50" y2="889.50" stroke="#333" stroke-width="1" />
<line x1="212.50" y1="891.50" x2="216.50" y2="891.50" stroke="#333" stroke-width="1" />
<line x1="212.50" y1="893.50" x2="216.50" y2="893.50" stroke="#333" stroke-width="1" />
<line x1="208.50" y1="895.50" x2="216.50" y2="895.50" stroke="#333" stroke-width="1" />
<line x1="212.50" y1="897.50" x2="216.50" y2="897.50" stroke="#333" stroke-width="1" />
<line x1="212.50" y1="898.50" x2="216.50" y2="898.50" stroke="#333" stroke-width="1" />
<line x1="212.50" y1="900.50" x2="216.50" y2="900.50" stroke="#333" stroke-width="1" />
<line x1="212.50" y1="902.50" x2="216.50" y2="902.50" stroke="#333" stroke-width="1" />
<line x1="212.50" y1="904.50" x2="216.50" y2="904.50" stroke="#333" stroke-width="1" />
<line x1="212.50" y1="906.50" x2="216.50" y2="906.50" stroke="#333" stroke-width="1" />
<line x1="212.50" y1="908.50" x2="216.50" y2="908.50" stroke="#333" stroke-width="1" />
<line x1="212.50" y1="909.50" x2="216.50" y2="909.50" stroke="#333" stroke-width="1" />
<line x1="212.50" y1="911.50" x2="216.50" y2="911.50" stroke="#333" stroke-width="1" />
<line x1="208.50" y1="913.50" x2="216.50" y2="913.50" stroke="#333" stroke-width="1" />
<line x1="212.50" y1="915.50" x2="216.50" y2="915.50" stroke="#333" stroke-width="1" />
<line x1="212.50" y1="917.50" x2="216.50" y2="917.50" stroke="#333" stroke-width="1" />
<line x1="212.50" y1="919.50" x2="216.50" y2="919.50" stroke="#333" stroke-width="1" />
<line x1="212.50" y1="920.50" x2="216.50" y2="920.50" stroke="#333" stroke-width="1" />
<line x1="212.50" y1="922.50" x2="216.50" y2="922.50" stroke="#333" stroke-width="1" />
<line x1="212.50" y1="924.50" x2="216.50" y2="924.50" stroke="#333" stroke-width="1" />
<line x1="212.50" y1="926.50" x2="216.50" y2="926.50" stroke="#333" stroke-width="1" />
<line x1="212.50" y1="928.50" x2="216.50" y2="928.50" stroke="#333" stroke-width="1" />
<line x1="212.50" y1="930.50" x2="216.50" y2="930.50" stroke="#333" stroke-width="1" />
<line x1="208.50" y1="932.50" x2="216.50" y2="932.50" stroke="#333" stroke-width="1" />
<line x1="212.50" y1="933.50" x2="216.50" y2="933.50" stroke="#333" stroke-width="1" />
<line x1="212.50" y1="935.50" x2="216.50" y2="935.50" stroke="#333" stroke-width="1" />
<line x1="212.50" y1="937.50" x2="216.50" y2="937.50" stroke="#333" stroke-width="1" />
<line x1="212.50" y1="939.50" x2="216.50" y2="939.50" stroke="#333" stroke-width="1" />
<line x1="212.50" y1="941.50" x2="216.50" y2="941.50" stroke="#333" stroke-width="1" />
<line x1="212.50" y1="943.50" x2="216.50" y2="943.50" stroke="#333" stroke-width="1" />
<line x1="212.50" y1="944.50" x2="216.50" y2="944.50" stroke="#333" stroke-width="1" />
<line x1="212.50" y1="946.50" x2="216.50" y2="946.50" stroke="#333" stroke-width="1" />
<line x1="212.50" y1="948.50" x2="216.50" y2="948.50" stroke="#333" stroke-width="1" />
<line x1="208.50" y1="950.50" x2="216.50" y2="950.50" stroke="#333" stroke-width="1" />
<text x="202.00" y="808.00" font-size="13" text-anchor="end" textLength="26.0" lengthAdjust="spacingAndGlyphs" fill="#333" >−40.</text>
<text x="202.00" y="826.38" font-size="13" text-anchor="end" textLength="26.0" lengthAdjust="spacingAndGlyphs" fill="#333" >−30.</text>
<text x="202.00" y="844.75" font-size="13" text-anchor="end" textLength="26.0" lengthAdjust="spacingAndGlyphs" fill="#333" >−20.</text>
<text x="202.00" y="863.12" font-size="13" text-anchor="end" textLength="26.0" lengthAdjust="spacingAndGlyphs" fill="#333" >−10.</text>
<text x="202.00" y="881.50" font-size="13" text-anchor="end" textLength="12.1" lengthAdjust="spacingAndGlyphs" fill="#333" >0.</text>
<text x="202.00" y="899.88" font-size="13" text-anchor="end" textLength="20.1" lengthAdjust="spacingAndGlyphs" fill="#333" >10.</text>
<text x="202.00" y="918.25" font-size="13" text-anchor="end" textLength="20.1" lengthAdjust="spacingAndGlyphs" fill="#333" >20.</text>
<text x="202.00" y="936.62" font-size="13" text-anchor="end" textLength="20.1" lengthAdjust="spacingAndGlyphs" fill="#333" >30.</text>
<text x="202.00" y="955.00" font-size="13" text-anchor="end" textLength="20.1" lengthAdjust="spacingAndGlyphs" fill="#333" >40.</text>
<line x1="216.50" y1="950.50" x2="216.50" y2="958.50" stroke="#333" stroke-width="1" />
<line x1="235.50" y1="950.50" x2="235.50" y2="954.50" stroke="#333" stroke-width="1" />
<line x1="254.50" y1="950.50" x2="254.50" y2="958.50" stroke="#333" stroke-width="1" />
<line x1="272.50" y1="950.50" x2="272.50" y2="954.50" stroke="#333" stroke-width="1" />
<line x1="291.50" y1="950.50" x2="291.50" y2="958.50" stroke="#333" stroke-width="1" />
<line x1="310.50" y1="950.50" x2="310.50" y2="954.50" stroke="#333" stroke-width="1" />
<line x1="328.50" y1="950.50" x2="328.50" y2="958.50" stroke="#333" stroke-width="1" />
<line x1="347.50" y1="950.50" x2="347.50" y2="954.50" stroke="#333" stroke-width="1" />
<line x1="366.50" y1="950.50" x2="366.50" y2="958.50" stroke="#333" stroke-width="1" />
<text x="216.40" y="973.60" font-size="13" text-anchor="middle" textLength="20.0" lengthAdjust="spacingAndGlyphs" fill="#333" >40.</text>
<text x="253.90" y="973.60" font-size="13" text-anchor="middle" textLength="20.0" lengthAdjust="spacingAndGlyphs" fill="#333" >20.</text>
<text x="291.40" y="973.60" font-size="13" text-anchor="middle" textLength="12.8" lengthAdjust="spacingAndGlyphs" fill="#333" >0.</text>
<text x="328.90" y="973.60" font-size="13" text-anchor="middle" textLength="26.8" lengthAdjust="spacingAndGlyphs" fill="#333" >−20.</text>
<text x="366.40" y="973.60" font-size="13" text-anchor="middle" textLength="26.8" lengthAdjust="spacingAndGlyphs" fill="#333" >−40.</text>
<text x="290.50" y="992.00" font-size="13" text-anchor="middle" textLength="39.0" lengthAdjust="spacingAndGlyphs" fill="#333" >KSM−X</text>
<text x="167.80" y="877.00" font-size="13" text-anchor="middle" textLength="37.3" lengthAdjust="spacingAndGlyphs" fill="#333" transform="rotate(-90 167.8 877)">KSM−Y</text>
<rect x="216.5" y="802.5" width="150" height="148" fill="none" stroke="#333" stroke-width="1"/>
<line x1="502.50" y1="803.50" x2="510.50" y2="803.50" stroke="#333" stroke-width="1" />
<line x1="506.50" y1="805.50" x2="510.50" y2="805.50" stroke="#333" stroke-width="1" />
<line x1="506.50" y1="807.50" x2="510.50" y2="807.50" stroke="#333" stroke-width="1" />
<line x1="506.50" y1="808.50" x2="510.50" y2="808.50" stroke="#333" stroke-width="1" />
<line x1="506.50" y1="810.50" x2="510.50" y2="810.50" stroke="#333" stroke-width="1" />
<line x1="506.50" y1="812.50" x2="510.50" y2="812.50" stroke="#333" stroke-width="1" />
<line x1="506.50" y1="814.50" x2="510.50" y2="814.50" stroke="#333" stroke-width="1" />
<line x1="506.50" y1="816.50" x2="510.50" y2="816.50" stroke="#333" stroke-width="1" />
<line x1="506.50" y1="818.50" x2="510.50" y2="818.50" stroke="#333" stroke-width="1" />
<line x1="506.50" y1="819.50" x2="510.50" y2="819.50" stroke="#333" stroke-width="1" />
<line x1="502.50" y1="821.50" x2="510.50" y2="821.50" stroke="#333" stroke-width="1" />
<line x1="506.50" y1="823.50" x2="510.50" y2="823.50" stroke="#333" stroke-width="1" />
<line x1="506.50" y1="825.50" x2="510.50" y2="825.50" stroke="#333" stroke-width="1" />
<line x1="506.50" y1="827.50" x2="510.50" y2="827.50" stroke="#333" stroke-width="1" />
<line x1="506.50" y1="829.50" x2="510.50" y2="829.50" stroke="#333" stroke-width="1" />
<line x1="506.50" y1="830.50" x2="510.50" y2="830.50" stroke="#333" stroke-width="1" />
<line x1="506.50" y1="832.50" x2="510.50" y2="832.50" stroke="#333" stroke-width="1" />
<line x1="506.50" y1="834.50" x2="510.50" y2="834.50" stroke="#333" stroke-width="1" />
<line x1="506.50" y1="836.50" x2="510.50" y2="836.50" stroke="#333" stroke-width="1" />
<line x1="506.50" y1="838.50" x2="510.50" y2="838.50" stroke="#333" stroke-width="1" />
<line x1="502.50" y1="840.50" x2="510.50" y2="840.50" stroke="#333" stroke-width="1" />
<line x1="506.50" y1="841.50" x2="510.50" y2="841.50" stroke="#333" stroke-width="1" />
<line x1="506.50" y1="843.50" x2="510.50" y2="843.50" stroke="#333" stroke-width="1" />
<line x1="506.50" y1="845.50" x2="510.50" y2="845.50" stroke="#333" stroke-width="1" />
<line x1="506.50" y1="847.50" x2="510.50" y2="847.50" stroke="#333" stroke-width="1" />
<line x1="506.50" y1="849.50" x2="510.50" y2="849.50" stroke="#333" stroke-width="1" />
<line x1="506.50" y1="851.50" x2="510.50" y2="851.50" stroke="#333" stroke-width="1" />
<line x1="506.50" y1="853.50" x2="510.50" y2="853.50" stroke="#333" stroke-width="1" />
<line x1="506.50" y1="854.50" x2="510.50" y2="854.50" stroke="#333" stroke-width="1" />
<line x1="506.50" y1="856.50" x2="510.50" y2="856.50" stroke="#333" stroke-width="1" />
<line x1="502.50" y1="858.50" x2="510.50" y2="858.50" stroke="#333" stroke-width="1" />
<line x1="506.50" y1="860.50" x2="510.50" y2="860.50" stroke="#333" stroke-width="1" />
<line x1="506.50" y1="862.50" x2="510.50" y2="862.50" stroke="#333" stroke-width="1" />
<line x1="506.50" y1="864.50" x2="510.50" y2="864.50" stroke="#333" stroke-width="1" />
<line x1="506.50" y1="865.50" x2="510.50" y2="865.50" stroke="#333" stroke-width="1" />
<line x1="506.50" y1="867.50" x2="510.50" y2="867.50" stroke="#333" stroke-width="1" />
<line x1="506.50" y1="869.50" x2="510.50" y2="869.50" stroke="#333" stroke-width="1" />
<line x1="506.50" y1="871.50" x2="510.50" y2="871.50" stroke="#333" stroke-width="1" />
<line x1="506.50" y1="873.50" x2="510.50" y2="873.50" stroke="#333" stroke-width="1" />
<line x1="506.50" y1="875.50" x2="510.50" y2="875.50" stroke="#333" stroke-width="1" />
<line x1="502.50" y1="876.50" x2="510.50" y2="876.50" stroke="#333" stroke-width="1" />
<line x1="506.50" y1="878.50" x2="510.50" y2="878.50" stroke="#333" stroke-width="1" />
<line x1="506.50" y1="880.50" x2="510.50" y2="880.50" stroke="#333" stroke-width="1" />
<line x1="506.50" y1="882.50" x2="510.50" y2="882.50" stroke="#333" stroke-width="1" />
<line x1="506.50" y1="884.50" x2="510.50" y2="884.50" stroke="#333" stroke-width="1" />
<line x1="506.50" y1="886.50" x2="510.50" y2="886.50" stroke="#333" stroke-width="1" />
<line x1="506.50" y1="887.50" x2="510.50" y2="887.50" stroke="#333" stroke-width="1" />
<line x1="506.50" y1="889.50" x2="510.50" y2="889.50" stroke="#333" stroke-width="1" />
<line x1="506.50" y1="891.50" x2="510.50" y2="891.50" stroke="#333" stroke-width="1" />
<line x1="506.50" y1="893.50" x2="510.50" y2="893.50" stroke="#333" stroke-width="1" />
<line x1="502.50" y1="895.50" x2="510.50" y2="895.50" stroke="#333" stroke-width="1" />
<line x1="506.50" y1="897.50" x2="510.50" y2="897.50" stroke="#333" stroke-width="1" />
<line x1="506.50" y1="898.50" x2="510.50" y2="898.50" stroke="#333" stroke-width="1" />
<line x1="506.50" y1="900.50" x2="510.50" y2="900.50" stroke="#333" stroke-width="1" />
<line x1="506.50" y1="902.50" x2="510.50" y2="902.50" stroke="#333" stroke-width="1" />
<line x1="506.50" y1="904.50" x2="510.50" y2="904.50" stroke="#333" stroke-width="1" />
<line x1="506.50" y1="906.50" x2="510.50" y2="906.50" stroke="#333" stroke-width="1" />
<line x1="506.50" y1="908.50" x2="510.50" y2="908.50" stroke="#333" stroke-width="1" />
<line x1="506.50" y1="909.50" x2="510.50" y2="909.50" stroke="#333" stroke-width="1" />
<line x1="506.50" y1="911.50" x2="510.50" y2="911.50" stroke="#333" stroke-width="1" />
<line x1="502.50" y1="913.50" x2="510.50" y2="913.50" stroke="#333" stroke-width="1" />
<line x1="506.50" y1="915.50" x2="510.50" y2="915.50" stroke="#333" stroke-width="1" />
<line x1="506.50" y1="917.50" x2="510.50" y2="917.50" stroke="#333" stroke-width="1" />
<line x1="506.50" y1="919.50" x2="510.50" y2="919.50" stroke="#333" stroke-width="1" />
<line x1="506.50" y1="920.50" x2="510.50" y2="920.50" stroke="#333" stroke-width="1" />
<line x1="506.50" y1="922.50" x2="510.50" y2="922.50" stroke="#333" stroke-width="1" />
<line x1="506.50" y1="924.50" x2="510.50" y2="924.50" stroke="#333" stroke-width="1" />
<line x1="506.50" y1="926.50" x2="510.50" y2="926.50" stroke="#333" stroke-width="1" />
<line x1="506.50" y1="928.50" x2="510.50" y2="928.50" stroke="#333" stroke-width="1" />
<line x1="506.50" y1="930.50" x2="510.50" y2="930.50" stroke="#333" stroke-width="1" />
<line x1="502.50" y1="932.50" x2="510.50" y2="932.50" stroke="#333" stroke-width="1" />
<line x1="506.50" y1="933.50" x2="510.50" y2="933.50" stroke="#333" stroke-width="1" />
<line x1="506.50" y1="935.50" x2="510.50" y2="935.50" stroke="#333" stroke-width="1" />
<line x1="506.50" y1="937.50" x2="510.50" y2="937.50" stroke="#333" stroke-width="1" />
<line x1="506.50" y1="939.50" x2="510.50" y2="939.50" stroke="#333" stroke-width="1" />
<line x1="506.50" y1="941.50" x2="510.50" y2="941.50" stroke="#333" stroke-width="1" />
<line x1="506.50" y1="943.50" x2="510.50" y2="943.50" stroke="#333" stroke-width="1" />
<line x1="506.50" y1="944.50" x2="510.50" y2="944.50" stroke="#333" stroke-width="1" />
<line x1="506.50" y1="946.50" x2="510.50" y2="946.50" stroke="#333" stroke-width="1" />
<line x1="506.50" y1="948.50" x2="510.50" y2="948.50" stroke="#333" stroke-width="1" />
<line x1="502.50" y1="950.50" x2="510.50" y2="950.50" stroke="#333" stroke-width="1" />
<text x="496.00" y="808.00" font-size="13" text-anchor="end" textLength="20.1" lengthAdjust="spacingAndGlyphs" fill="#333" >40.</text>
<text x="496.00" y="826.38" font-size="13" text-anchor="end" textLength="20.1" lengthAdjust="spacingAndGlyphs" fill="#333" >30.</text>
<text x="496.00" y="844.75" font-size="13" text-anchor="end" textLength="20.1" lengthAdjust="spacingAndGlyphs" fill="#333" >20.</text>
<text x="496.00" y="863.12" font-size="13" text-anchor="end" textLength="20.1" lengthAdjust="spacingAndGlyphs" fill="#333" >10.</text>
<text x="496.00" y="881.50" font-size="13" text-anchor="end" textLength="12.1" lengthAdjust="spacingAndGlyphs" fill="#333" >0.</text>
<text x="496.00" y="899.88" font-size="13" text-anchor="end" textLength="26.0" lengthAdjust="spacingAndGlyphs" fill="#333" >−10.</text>
<text x="496.00" y="918.25" font-size="13" text-anchor="end" textLength="26.0" lengthAdjust="spacingAndGlyphs" fill="#333" >−20.</text>
<text x="496.00" y="936.62" font-size="13" text-anchor="end" textLength="26.0" lengthAdjust="spacingAndGlyphs" fill="#333" >−30.</text>
<text x="496.00" y="955.00" font-size="13" text-anchor="end" textLength="26.0" lengthAdjust="spacingAndGlyphs" fill="#333" >−40.</text>
<line x1="510.50" y1="950.50" x2="510.50" y2="958.50" stroke="#333" stroke-width="1" />
<line x1="529.50" y1="950.50" x2="529.50" y2="954.50" stroke="#333" stroke-width="1" />
<line x1="548.50" y1="950.50" x2="548.50" y2="958.50" stroke="#333" stroke-width="1" />
<line x1="566.50" y1="950.50" x2="566.50" y2="954.50" stroke="#333" stroke-width="1" />
<line x1="585.50" y1="950.50" x2="585.50" y2="958.50" stroke="#333" stroke-width="1" />
<line x1="604.50" y1="950.50" x2="604.50" y2="954.50" stroke="#333" stroke-width="1" />
<line x1="622.50" y1="950.50" x2="622.50" y2="958.50" stroke="#333" stroke-width="1" />
<line x1="641.50" y1="950.50" x2="641.50" y2="954.50" stroke="#333" stroke-width="1" />
<line x1="660.50" y1="950.50" x2="660.50" y2="958.50" stroke="#333" stroke-width="1" />
<text x="510.40" y="973.60" font-size="13" text-anchor="middle" textLength="20.0" lengthAdjust="spacingAndGlyphs" fill="#333" >40.</text>
<text x="547.90" y="973.60" font-size="13" text-anchor="middle" textLength="20.0" lengthAdjust="spacingAndGlyphs" fill="#333" >20.</text>
<text x="585.40" y="973.60" font-size="13" text-anchor="middle" textLength="12.8" lengthAdjust="spacingAndGlyphs" fill="#333" >0.</text>
<text x="622.90" y="973.60" font-size="13" text-anchor="middle" textLength="26.8" lengthAdjust="spacingAndGlyphs" fill="#333" >−20.</text>
<text x="660.40" y="973.60" font-size="13" text-anchor="middle" textLength="26.8" lengthAdjust="spacingAndGlyphs" fill="#333" >−40.</text>
<text x="584.50" y="992.00" font-size="13" text-anchor="middle" textLength="39.0" lengthAdjust="spacingAndGlyphs" fill="#333" >KSM−X</text>
<text x="461.80" y="877.00" font-size="13" text-anchor="middle" textLength="37.3" lengthAdjust="spacingAndGlyphs" fill="#333" transform="rotate(-90 461.8 877)">KSM−Z</text>
<rect x="510.5" y="802.5" width="150" height="148" fill="none" stroke="#333" stroke-width="1"/>
<line x1="796.50" y1="803.50" x2="804.50" y2="803.50" stroke="#333" stroke-width="1" />
<line x1="800.50" y1="805.50" x2="804.50" y2="805.50" stroke="#333" stroke-width="1" />
<line x1="800.50" y1="807.50" x2="804.50" y2="807.50" stroke="#333" stroke-width="1" />
<line x1="800.50" y1="808.50" x2="804.50" y2="808.50" stroke="#333" stroke-width="1" />
<line x1="800.50" y1="810.50" x2="804.50" y2="810.50" stroke="#333" stroke-width="1" />
<line x1="800.50" y1="812.50" x2="804.50" y2="812.50" stroke="#333" stroke-width="1" />
<line x1="800.50" y1="814.50" x2="804.50" y2="814.50" stroke="#333" stroke-width="1" />
<line x1="800.50" y1="816.50" x2="804.50" y2="816.50" stroke="#333" stroke-width="1" />
<line x1="800.50" y1="818.50" x2="804.50" y2="818.50" stroke="#333" stroke-width="1" />
<line x1="800.50" y1="819.50" x2="804.50" y2="819.50" stroke="#333" stroke-width="1" />
<line x1="796.50" y1="821.50" x2="804.50" y2="821.50" stroke="#333" stroke-width="1" />
<line x1="800.50" y1="823.50" x2="804.50" y2="823.50" stroke="#333" stroke-width="1" />
<line x1="800.50" y1="825.50" x2="804.50" y2="825.50" stroke="#333" stroke-width="1" />
<line x1="800.50" y1="827.50" x2="804.50" y2="827.50" stroke="#333" stroke-width="1" />
<line x1="800.50" y1="829.50" x2="804.50" y2="829.50" stroke="#333" stroke-width="1" />
<line x1="800.50" y1="830.50" x2="804.50" y2="830.50" stroke="#333" stroke-width="1" />
<line x1="800.50" y1="832.50" x2="804.50" y2="832.50" stroke="#333" stroke-width="1" />
<line x1="800.50" y1="834.50" x2="804.50" y2="834.50" stroke="#333" stroke-width="1" />
<line x1="800.50" y1="836.50" x2="804.50" y2="836.50" stroke="#333" stroke-width="1" />
<line x1="800.50" y1="838.50" x2="804.50" y2="838.50" stroke="#333" stroke-width="1" />
<line x1="796.50" y1="840.50" x2="804.50" y2="840.50" stroke="#333" stroke-width="1" />
<line x1="800.50" y1="841.50" x2="804.50" y2="841.50" stroke="#333" stroke-width="1" />
<line x1="800.50" y1="843.50" x2="804.50" y2="843.50" stroke="#333" stroke-width="1" />
<line x1="800.50" y1="845.50" x2="804.50" y2="845.50" stroke="#333" stroke-width="1" />
<line x1="800.50" y1="847.50" x2="804.50" y2="847.50" stroke="#333" stroke-width="1" />
<line x1="800.50" y1="849.50" x2="804.50" y2="849.50" stroke="#333" stroke-width="1" />
<line x1="800.50" y1="851.50" x2="804.50" y2="851.50" stroke="#333" stroke-width="1" />
<line x1="800.50" y1="853.50" x2="804.50" y2="853.50" stroke="#333" stroke-width="1" />
<line x1="800.50" y1="854.50" x2="804.50" y2="854.50" stroke="#333" stroke-width="1" />
<line x1="800.50" y1="856.50" x2="804.50" y2="856.50" stroke="#333" stroke-width="1" />
<line x1="796.50" y1="858.50" x2="804.50" y2="858.50" stroke="#333" stroke-width="1" />
<line x1="800.50" y1="860.50" x2="804.50" y2="860.50" stroke="#333" stroke-width="1" />
<line x1="800.50" y1="862.50" x2="804.50" y2="862.50" stroke="#333" stroke-width="1" />
<line x1="800.50" y1="864.50" x2="804.50" y2="864.50" stroke="#333" stroke-width="1" />
<line x1="800.50" y1="865.50" x2="804.50" y2="865.50" stroke="#333" stroke-width="1" />
<line x1="800.50" y1="867.50" x2="804.50" y2="867.50" stroke="#333" stroke-width="1" />
<line x1="800.50" y1="869.50" x2="804.50" y2="869.50" stroke="#333" stroke-width="1" />
<line x1="800.50" y1="871.50" x2="804.50" y2="871.50" stroke="#333" stroke-width="1" />
<line x1="800.50" y1="873.50" x2="804.50" y2="873.50" stroke="#333" stroke-width="1" />
<line x1="800.50" y1="875.50" x2="804.50" y2="875.50" stroke="#333" stroke-width="1" />
<line x1="796.50" y1="876.50" x2="804.50" y2="876.50" stroke="#333" stroke-width="1" />
<line x1="800.50" y1="878.50" x2="804.50" y2="878.50" stroke="#333" stroke-width="1" />
<line x1="800.50" y1="880.50" x2="804.50" y2="880.50" stroke="#333" stroke-width="1" />
<line x1="800.50" y1="882.50" x2="804.50" y2="882.50" stroke="#333" stroke-width="1" />
<line x1="800.50" y1="884.50" x2="804.50" y2="884.50" stroke="#333" stroke-width="1" />
<line x1="800.50" y1="886.50" x2="804.50" y2="886.50" stroke="#333" stroke-width="1" />
<line x1="800.50" y1="887.50" x2="804.50" y2="887.50" stroke="#333" stroke-width="1" />
<line x1="800.50" y1="889.50" x2="804.50" y2="889.50" stroke="#333" stroke-width="1" />
<line x1="800.50" y1="891.50" x2="804.50" y2="891.50" stroke="#333" stroke-width="1" />
<line x1="800.50" y1="893.50" x2="804.50" y2="893.50" stroke="#333" stroke-width="1" />
<line x1="796.50" y1="895.50" x2="804.50" y2="895.50" stroke="#333" stroke-width="1" />
<line x1="800.50" y1="897.50" x2="804.50" y2="897.50" stroke="#333" stroke-width="1" />
<line x1="800.50" y1="898.50" x2="804.50" y2="898.50" stroke="#333" stroke-width="1" />
<line x1="800.50" y1="900.50" x2="804.50" y2="900.50" stroke="#333" stroke-width="1" />
<line x1="800.50" y1="902.50" x2="804.50" y2="902.50" stroke="#333" stroke-width="1" />
<line x1="800.50" y1="904.50" x2="804.50" y2="904.50" stroke="#333" stroke-width="1" />
<line x1="800.50" y1="906.50" x2="804.50" y2="906.50" stroke="#333" stroke-width="1" />
<line x1="800.50" y1="908.50" x2="804.50" y2="908.50" stroke="#333" stroke-width="1" />
<line x1="800.50" y1="909.50" x2="804.50" y2="909.50" stroke="#333" stroke-width="1" />
<line x1="800.50" y1="911.50" x2="804.50" y2="911.50" stroke="#333" stroke-width="1" />
<line x1="796.50" y1="913.50" x2="804.50" y2="913.50" stroke="#333" stroke-width="1" />
<line x1="800.50" y1="915.50" x2="804.50" y2="915.50" stroke="#333" stroke-width="1" />
<line x1="800.50" y1="917.50" x2="804.50" y2="917.50" stroke="#333" stroke-width="1" />
<line x1="800.50" y1="919.50" x2="804.50" y2="919.50" stroke="#333" stroke-width="1" />
<line x1="800.50" y1="920.50" x2="804.50" y2="920.50" stroke="#333" stroke-width="1" />
<line x1="800.50" y1="922.50" x2="804.50" y2="922.50" stroke="#333" stroke-width="1" />
<line x1="800.50" y1="924.50" x2="804.50" y2="924.50" stroke="#333" stroke-width="1" />
<line x1="800.50" y1="926.50" x2="804.50" y2="926.50" stroke="#333" stroke-width="1" />
<line x1="800.50" y1="928.50" x2="804.50" y2="928.50" stroke="#333" stroke-width="1" />
<line x1="800.50" y1="930.50" x2="804.50" y2="930.50" stroke="#333" stroke-width="1" />
<line x1="796.50" y1="932.50" x2="804.50" y2="932.50" stroke="#333" stroke-width="1" />
<line x1="800.50" y1="933.50" x2="804.50" y2="933.50" stroke="#333" stroke-width="1" />
<line x1="800.50" y1="935.50" x2="804.50" y2="935.50" stroke="#333" stroke-width="1" />
<line x1="800.50" y1="937.50" x2="804.50" y2="937.50" stroke="#333" stroke-width="1" />
<line x1="800.50" y1="939.50" x2="804.50" y2="939.50" stroke="#333" stroke-width="1" />
<line x1="800.50" y1="941.50" x2="804.50" y2="941.50" stroke="#333" stroke-width="1" />
<line x1="800.50" y1="943.50" x2="804.50" y2="943.50" stroke="#333" stroke-width="1" />
<line x1="800.50" y1="944.50" x2="804.50" y2="944.50" stroke="#333" stroke-width="1" />
<line x1="800.50" y1="946.50" x2="804.50" y2="946.50" stroke="#333" stroke-width="1" />
<line x1="800.50" y1="948.50" x2="804.50" y2="948.50" stroke="#333" stroke-width="1" />
<line x1="796.50" y1="950.50" x2="804.50" y2="950.50" stroke="#333" stroke-width="1" />
<text x="790.00" y="808.00" font-size="13" text-anchor="end" textLength="20.1" lengthAdjust="spacingAndGlyphs" fill="#333" >40.</text>
<text x="790.00" y="826.38" font-size="13" text-anchor="end" textLength="20.1" lengthAdjust="spacingAndGlyphs" fill="#333" >30.</text>
<text x="790.00" y="844.75" font-size="13" text-anchor="end" textLength="20.1" lengthAdjust="spacingAndGlyphs" fill="#333" >20.</text>
<text x="790.00" y="863.12" font-size="13" text-anchor="end" textLength="20.1" lengthAdjust="spacingAndGlyphs" fill="#333" >10.</text>
<text x="790.00" y="881.50" font-size="13" text-anchor="end" textLength="12.1" lengthAdjust="spacingAndGlyphs" fill="#333" >0.</text>
<text x="790.00" y="899.88" font-size="13" text-anchor="end" textLength="26.0" lengthAdjust="spacingAndGlyphs" fill="#333" >−10.</text>
<text x="790.00" y="918.25" font-size="13" text-anchor="end" textLength="26.0" lengthAdjust="spacingAndGlyphs" fill="#333" >−20.</text>
<text x="790.00" y="936.62" font-size="13" text-anchor="end" textLength="26.0" lengthAdjust="spacingAndGlyphs" fill="#333" >−30.</text>
<text x="790.00" y="955.00" font-size="13" text-anchor="end" textLength="26.0" lengthAdjust="spacingAndGlyphs" fill="#333" >−40.</text>
<line x1="804.50" y1="950.50" x2="804.50" y2="958.50" stroke="#333" stroke-width="1" />
<line x1="823.50" y1="950.50" x2="823.50" y2="954.50" stroke="#333" stroke-width="1" />
<line x1="842.50" y1="950.50" x2="842.50" y2="958.50" stroke="#333" stroke-width="1" />
<line x1="860.50" y1="950.50" x2="860.50" y2="954.50" stroke="#333" stroke-width="1" />
<line x1="879.50" y1="950.50" x2="879.50" y2="958.50" stroke="#333" stroke-width="1" />
<line x1="898.50" y1="950.50" x2="898.50" y2="954.50" stroke="#333" stroke-width="1" />
<line x1="916.50" y1="950.50" x2="916.50" y2="958.50" stroke="#333" stroke-width="1" />
<line x1="935.50" y1="950.50" x2="935.50" y2="954.50" stroke="#333" stroke-width="1" />
<line x1="954.50" y1="950.50" x2="954.50" y2="958.50" stroke="#333" stroke-width="1" />
<text x="804.40" y="973.60" font-size="13" text-anchor="middle" textLength="26.8" lengthAdjust="spacingAndGlyphs" fill="#333" >−40.</text>
<text x="841.90" y="973.60" font-size="13" text-anchor="middle" textLength="26.8" lengthAdjust="spacingAndGlyphs" fill="#333" >−20.</text>
<text x="879.40" y="973.60" font-size="13" text-anchor="middle" textLength="12.8" lengthAdjust="spacingAndGlyphs" fill="#333" >0.</text>
<text x="916.90" y="973.60" font-size="13" text-anchor="middle" textLength="20.0" lengthAdjust="spacingAndGlyphs" fill="#333" >20.</text>
<text x="954.40" y="973.60" font-size="13" text-anchor="middle" textLength="20.0" lengthAdjust="spacingAndGlyphs" fill="#333" >40.</text>
<text x="878.50" y="992.00" font-size="13" text-anchor="middle" textLength="39.0" lengthAdjust="spacingAndGlyphs" fill="#333" >KSM−Y</text>
<text x="755.80" y="877.00" font-size="13" text-anchor="middle" textLength="37.3" lengthAdjust="spacingAndGlyphs" fill="#333" transform="rotate(-90 755.8 877)">KSM−Z</text>
<rect x="804.5" y="802.5" width="150" height="148" fill="none" stroke="#333" stroke-width="1"/>
<path d="M248.75,802.90 L245.00,810.00 L239.20,819.20 L235.00,827.50 L232.10,835.00 L229.20,845.00 L226.70,855.00 L225.40,861.70 L225.20,870.00 L225.10,876.45 L225.10,876.45 L225.20,882.90 L225.40,891.20 L226.70,897.90 L229.20,907.90 L232.10,917.90 L235.00,925.40 L239.20,933.70 L245.00,942.90 L248.75,950.00" fill="none" stroke="#0000ff" stroke-width="1.0" stroke-dasharray="2 1.3"/>
<path d="M283.30,802.90 L275.00,810.40 L264.20,821.70 L257.50,829.20 L251.70,839.20 L247.50,848.30 L244.20,858.30 L242.50,867.50 L242.10,874.20 L242.00,876.45 L242.00,876.45 L242.10,878.70 L242.50,885.40 L244.20,894.60 L247.50,904.60 L251.70,913.70 L257.50,923.70 L264.20,931.20 L275.00,942.50 L283.30,950.00" fill="none" stroke="#7a3c00" stroke-width="1.1" stroke-dasharray="2 1.3"/>
<path d="M542.75,802.90 L539.00,810.00 L533.20,819.20 L529.00,827.50 L526.10,835.00 L523.20,845.00 L520.70,855.00 L519.40,861.70 L519.20,870.00 L519.10,876.45 L519.10,876.45 L519.20,882.90 L519.40,891.20 L520.70,897.90 L523.20,907.90 L526.10,917.90 L529.00,925.40 L533.20,933.70 L539.00,942.90 L542.75,950.00" fill="none" stroke="#0000ff" stroke-width="1.0" stroke-dasharray="2 1.3"/>
<path d="M577.30,802.90 L569.00,810.40 L558.20,821.70 L551.50,829.20 L545.70,839.20 L541.50,848.30 L538.20,858.30 L536.50,867.50 L536.10,874.20 L536.00,876.45 L536.00,876.45 L536.10,878.70 L536.50,885.40 L538.20,894.60 L541.50,904.60 L545.70,913.70 L551.50,923.70 L558.20,931.20 L569.00,942.50 L577.30,950.00" fill="none" stroke="#7a3c00" stroke-width="1.1" stroke-dasharray="2 1.3"/>
<ellipse cx="292.1" cy="877.8" rx="36.2" ry="37.0" fill="none" stroke="#000" stroke-width="1.1"/>
<ellipse cx="291.4" cy="876.9" rx="1.6" ry="1.3" fill="none" stroke="#000" stroke-width="0.9"/>
<path d="M285.50,894.00 L280.60,896.70 L268.00,896.70 L261.00,894.00 L257.50,889.00 L256.90,883.60 L262.00,878.50 L270.00,874.00 L279.70,870.80 L290.00,870.20 L297.00,871.00 L303.00,873.50 L305.40,877.00 L305.20,881.80 L299.50,888.60" fill="none" stroke="#000" stroke-width="1.15" stroke-linejoin="round"/>
<path d="M286,893.8 L292,891.5 L299.5,888.4" fill="none" stroke="#0000ff" stroke-width="4.5" stroke-linecap="round"/>
<path d="M281.0,889.5 L290.0,898.5 M281.0,898.5 L290.0,889.5" stroke="#ff0000" stroke-width="1.2"/>
<circle cx="307.6" cy="911.3" r="2.6" fill="#ff0000"/>
<path d="M579.40,905.50 L571.50,907.00 L564.75,906.25 L558.75,903.25 L553.50,898.75 L550.90,892.00 L550.10,888.25 L622.50,865.40" fill="none" stroke="#000" stroke-width="1.4" stroke-linejoin="round"/>
<path d="M551.25,883.40 L553.50,877.50 L557.25,873.25 L564.75,868.00 L573.75,865.40 L584.25,865.40 L591.00,868.00 L596.25,872.50 L599.25,878.50 L599.60,887.50 L597.00,893.50 L593.60,898.00" fill="none" stroke="#000" stroke-width="1.1" stroke-linejoin="round"/>
<path d="M580,905 L587,902.5 L593.6,898.4" fill="none" stroke="#0000ff" stroke-width="4.8" stroke-linecap="round"/>
<ellipse cx="585" cy="876.6" rx="1.5" ry="0.8" fill="none" stroke="#555" stroke-width="0.8"/>
<path d="M574.9,901.0 L583.9,910.0 M574.9,910.0 L583.9,901.0" stroke="#ff0000" stroke-width="1.2"/>
<circle cx="601.5" cy="871.4" r="2.6" fill="#ff0000"/>
<g clip-path="url(#c3)"><ellipse cx="879.5" cy="876.45" rx="96" ry="94.7" fill="none" stroke="#7a3c00" stroke-width="1.1" stroke-dasharray="2 1.3"/></g>
<ellipse cx="880.4" cy="876.8" rx="38.2" ry="11.5" fill="none" stroke="#000" stroke-width="1.2"/>
<path d="M871.75,865.75 L897.25,905.5 M875.5,866.9 L886.75,883.75 M890.5,888.25 L897.25,901" fill="none" stroke="#000" stroke-width="1.0"/>
<path d="M892.3,899 L897.8,905.2" fill="none" stroke="#0000ff" stroke-width="5" stroke-linecap="round"/>
<path d="M892.75,901.0 L901.75,910.0 M892.75,910.0 L901.75,901.0" stroke="#ff0000" stroke-width="1.2"/>
<circle cx="914.5" cy="871.4" r="2.6" fill="#ff0000"/>
<defs><clipPath id="cp3"><rect x="96" y="421" width="984" height="88"/></clipPath></defs>
<g clip-path="url(#cp3)" fill="none" stroke-width="1.1" stroke-linejoin="miter">
<polyline points="97.3,469.0 101.3,488.7 107.3,484.0 107.3,509.7 114.3,509.7 114.3,488.7 114.3,509.7 121.3,509.7 121.3,496.0 125.3,475.3 128.3,488.7 131.3,485.3 131.3,509.7 148.3,509.7 148.3,491.3 152.3,482.3 159.3,491.3 162.3,488.3 169.7,489.3 172.7,495.7 175.0,492.7 179.4,486.2 179.4,510.6 186.2,510.6 186.2,489.4 189.4,489.4 189.4,510.6 200.6,510.6 200.6,471.2 203.1,492.5 203.1,510.6 213.1,510.6 213.1,495.0 220.6,466.2 227.5,489.4 234.4,484.4 241.2,487.5 241.2,510.6 251.5,510.6 251.5,484.4 254.8,482.2 254.8,510.6 261.2,510.6 261.2,476.2 265.6,482.5 265.6,510.6 271.2,510.6 271.2,479.4 271.9,510.6 277.5,510.6 302.7,509.7 302.7,485.3 302.7,509.7 326.7,509.7 326.7,482.0 326.7,509.7 333.3,509.7 333.3,469.3 336.7,484.3 340.3,483.3 340.3,509.7" stroke="#00ff00"/>
<polyline points="96.0,491.3 98.3,488.3 100.3,493.3 102.3,490.7 104.3,492.7 106.7,492.7 108.3,501.3 110.7,499.3 112.7,509.7 118.7,509.7 119.3,504.0 120.0,509.7 121.7,509.7 122.3,502.3 123.7,509.7 125.7,509.7 126.3,505.3 129.7,502.3 132.0,502.7 133.0,509.7 136.0,509.7 136.7,503.3 137.7,509.7 139.0,509.7 140.3,498.0 144.3,503.3 145.7,497.3 148.3,500.0 149.7,504.3 151.3,499.3 153.3,509.7 155.3,509.7 155.7,501.3 159.7,494.7 163.7,491.0 165.7,492.7 166.7,491.3 169.7,495.3 171.7,494.0 175.0,496.3 177.5,496.9 185.0,500.0 188.8,498.1 192.5,502.5 197.5,495.0 200.0,499.4 203.8,497.5 206.2,497.5 210.0,496.2 212.5,498.8 215.0,498.1 218.1,496.2 221.2,496.9 225.0,495.0 227.5,491.9 230.6,491.9 233.8,489.4 237.5,497.5 238.8,490.6 240.6,490.6 242.5,495.6 245.0,495.0 241.9,495.6 245.6,494.4 247.5,498.8 251.2,498.8 253.1,498.1 256.2,502.5 257.5,499.4 258.8,510.6 263.1,510.6 264.4,495.0 266.2,510.6 270.0,510.6 271.2,497.5 273.1,510.6 280.0,510.6 281.2,505.6 282.5,510.6 284.4,510.6 285.6,502.5 288.1,510.6 292.5,510.6 293.8,492.5 295.0,491.2 301.2,486.9 301.0,491.3 303.3,497.3 305.3,496.3 307.3,506.0 308.7,502.0 311.3,500.7 313.3,505.3 315.7,500.0 317.3,504.0 319.3,496.3 320.7,504.0 323.3,497.3 325.3,509.7" stroke="#ff0000"/>
<polyline points="330.0,509.7 330.7,504.0 332.7,509.7" stroke="#ff0000"/>
<polyline points="356.3,509.7 356.3,503.3 356.3,509.7" stroke="#ff0000"/>
<polyline points="356.2,510.6 356.2,503.1 356.9,510.6" stroke="#ff0000"/>
<polyline points="97.3,480.3 101.3,480.3 104.7,473.3 107.7,483.0 111.3,481.3 114.3,488.7 118.3,488.7 121.7,481.3 125.3,492.3 130.3,488.0 135.3,495.3 138.3,509.7 142.3,486.3 145.7,496.7 148.3,481.3 151.7,509.7 155.3,509.7 155.3,491.3 159.3,489.3 166.3,474.3 169.0,488.7 172.3,484.3 176.2,496.9 178.8,496.2 186.2,482.5 189.4,485.0 196.2,482.2 202.5,482.2 207.5,478.1 211.2,496.9 214.4,501.9 216.9,498.1 220.6,482.2 226.9,485.0 230.6,478.1 233.8,480.6 241.2,469.4 241.2,469.4 244.4,473.1 248.1,474.4 251.5,467.2 256.2,478.1 260.6,486.2 265.0,483.8 271.2,481.9 275.6,491.2 278.8,480.6 283.1,490.0 286.9,503.8 290.0,488.1 292.5,497.5 295.6,486.2 300.0,485.0 300.0,491.3 302.7,497.3 306.3,483.3 309.7,491.3 312.0,509.7 315.3,509.7 319.3,491.3 323.0,484.0 326.7,480.3 330.3,491.3 333.3,490.0 336.7,485.0 340.3,496.0 343.7,505.3 347.3,477.3 351.3,509.7 360.3,485.3 364.3,498.7 364.3,509.7" stroke="#0000ff"/>
<polyline points="371.3,509.7 371.3,485.3 371.3,509.7" stroke="#0000ff"/>
<polyline points="377.3,509.7 377.3,506.3 380.0,509.7" stroke="#0000ff"/>
<polyline points="381.2,510.0 384.4,484.4 389.4,497.5 385.0,484.0 388.5,497.0 389.0,511.0" stroke="#0000ff"/>
<polyline points="545.3,511.0 545.3,481.2 548.3,511.0" stroke="#0000ff"/>
<polyline points="670.7,511.0 670.7,497.3 679.5,511.0" stroke="#0000ff"/>
<polyline points="695.5,506.0 700.0,511.0" stroke="#0000ff"/>
<polyline points="719.7,511.0 722.6,495.8 726.7,506.0 729.9,484.2 733.0,496.4 735.9,499.4 736.0,511.0" stroke="#0000ff"/>
<polyline points="787.1,511.0 787.1,495.0 791.5,499.4 794.5,511.0" stroke="#0000ff"/>
<polyline points="798.6,511.0 798.6,492.0 798.6,511.0" stroke="#0000ff"/>
<polyline points="808.4,511.0 808.4,492.0 811.4,484.0 811.4,511.0" stroke="#0000ff"/>
<line x1="439.5" y1="511" x2="439.5" y2="492.9" stroke="#00ff00"/>
<line x1="446.2" y1="511" x2="446.2" y2="506.9" stroke="#0000ff"/>
<line x1="456.4" y1="511" x2="456.4" y2="481.2" stroke="#0000ff"/>
<line x1="490.5" y1="511" x2="490.5" y2="485.6" stroke="#0000ff"/>
<line x1="497.5" y1="511" x2="497.5" y2="479.2" stroke="#00ff00"/>
<line x1="565.2" y1="511" x2="565.2" y2="501.0" stroke="#0000ff"/>
<line x1="586.2" y1="511" x2="586.2" y2="484.2" stroke="#0000ff"/>
<line x1="650.9" y1="511" x2="650.9" y2="506.9" stroke="#0000ff"/>
<line x1="654.1" y1="511" x2="654.1" y2="493.8" stroke="#00ff00"/>
<line x1="705.1" y1="511" x2="705.1" y2="501.6" stroke="#0000ff"/>
<line x1="743.3" y1="511" x2="743.3" y2="481.0" stroke="#0000ff"/>
<line x1="753.1" y1="511" x2="753.1" y2="492.9" stroke="#00ff00"/>
<line x1="1033.3" y1="511" x2="1033.3" y2="502.9" stroke="#0000ff"/>
<line x1="1064.3" y1="511" x2="1064.3" y2="492.0" stroke="#0000ff"/>
<line x1="1071.7" y1="511" x2="1071.7" y2="504.7" stroke="#0000ff"/>
</g>
</svg>
</body></html>
